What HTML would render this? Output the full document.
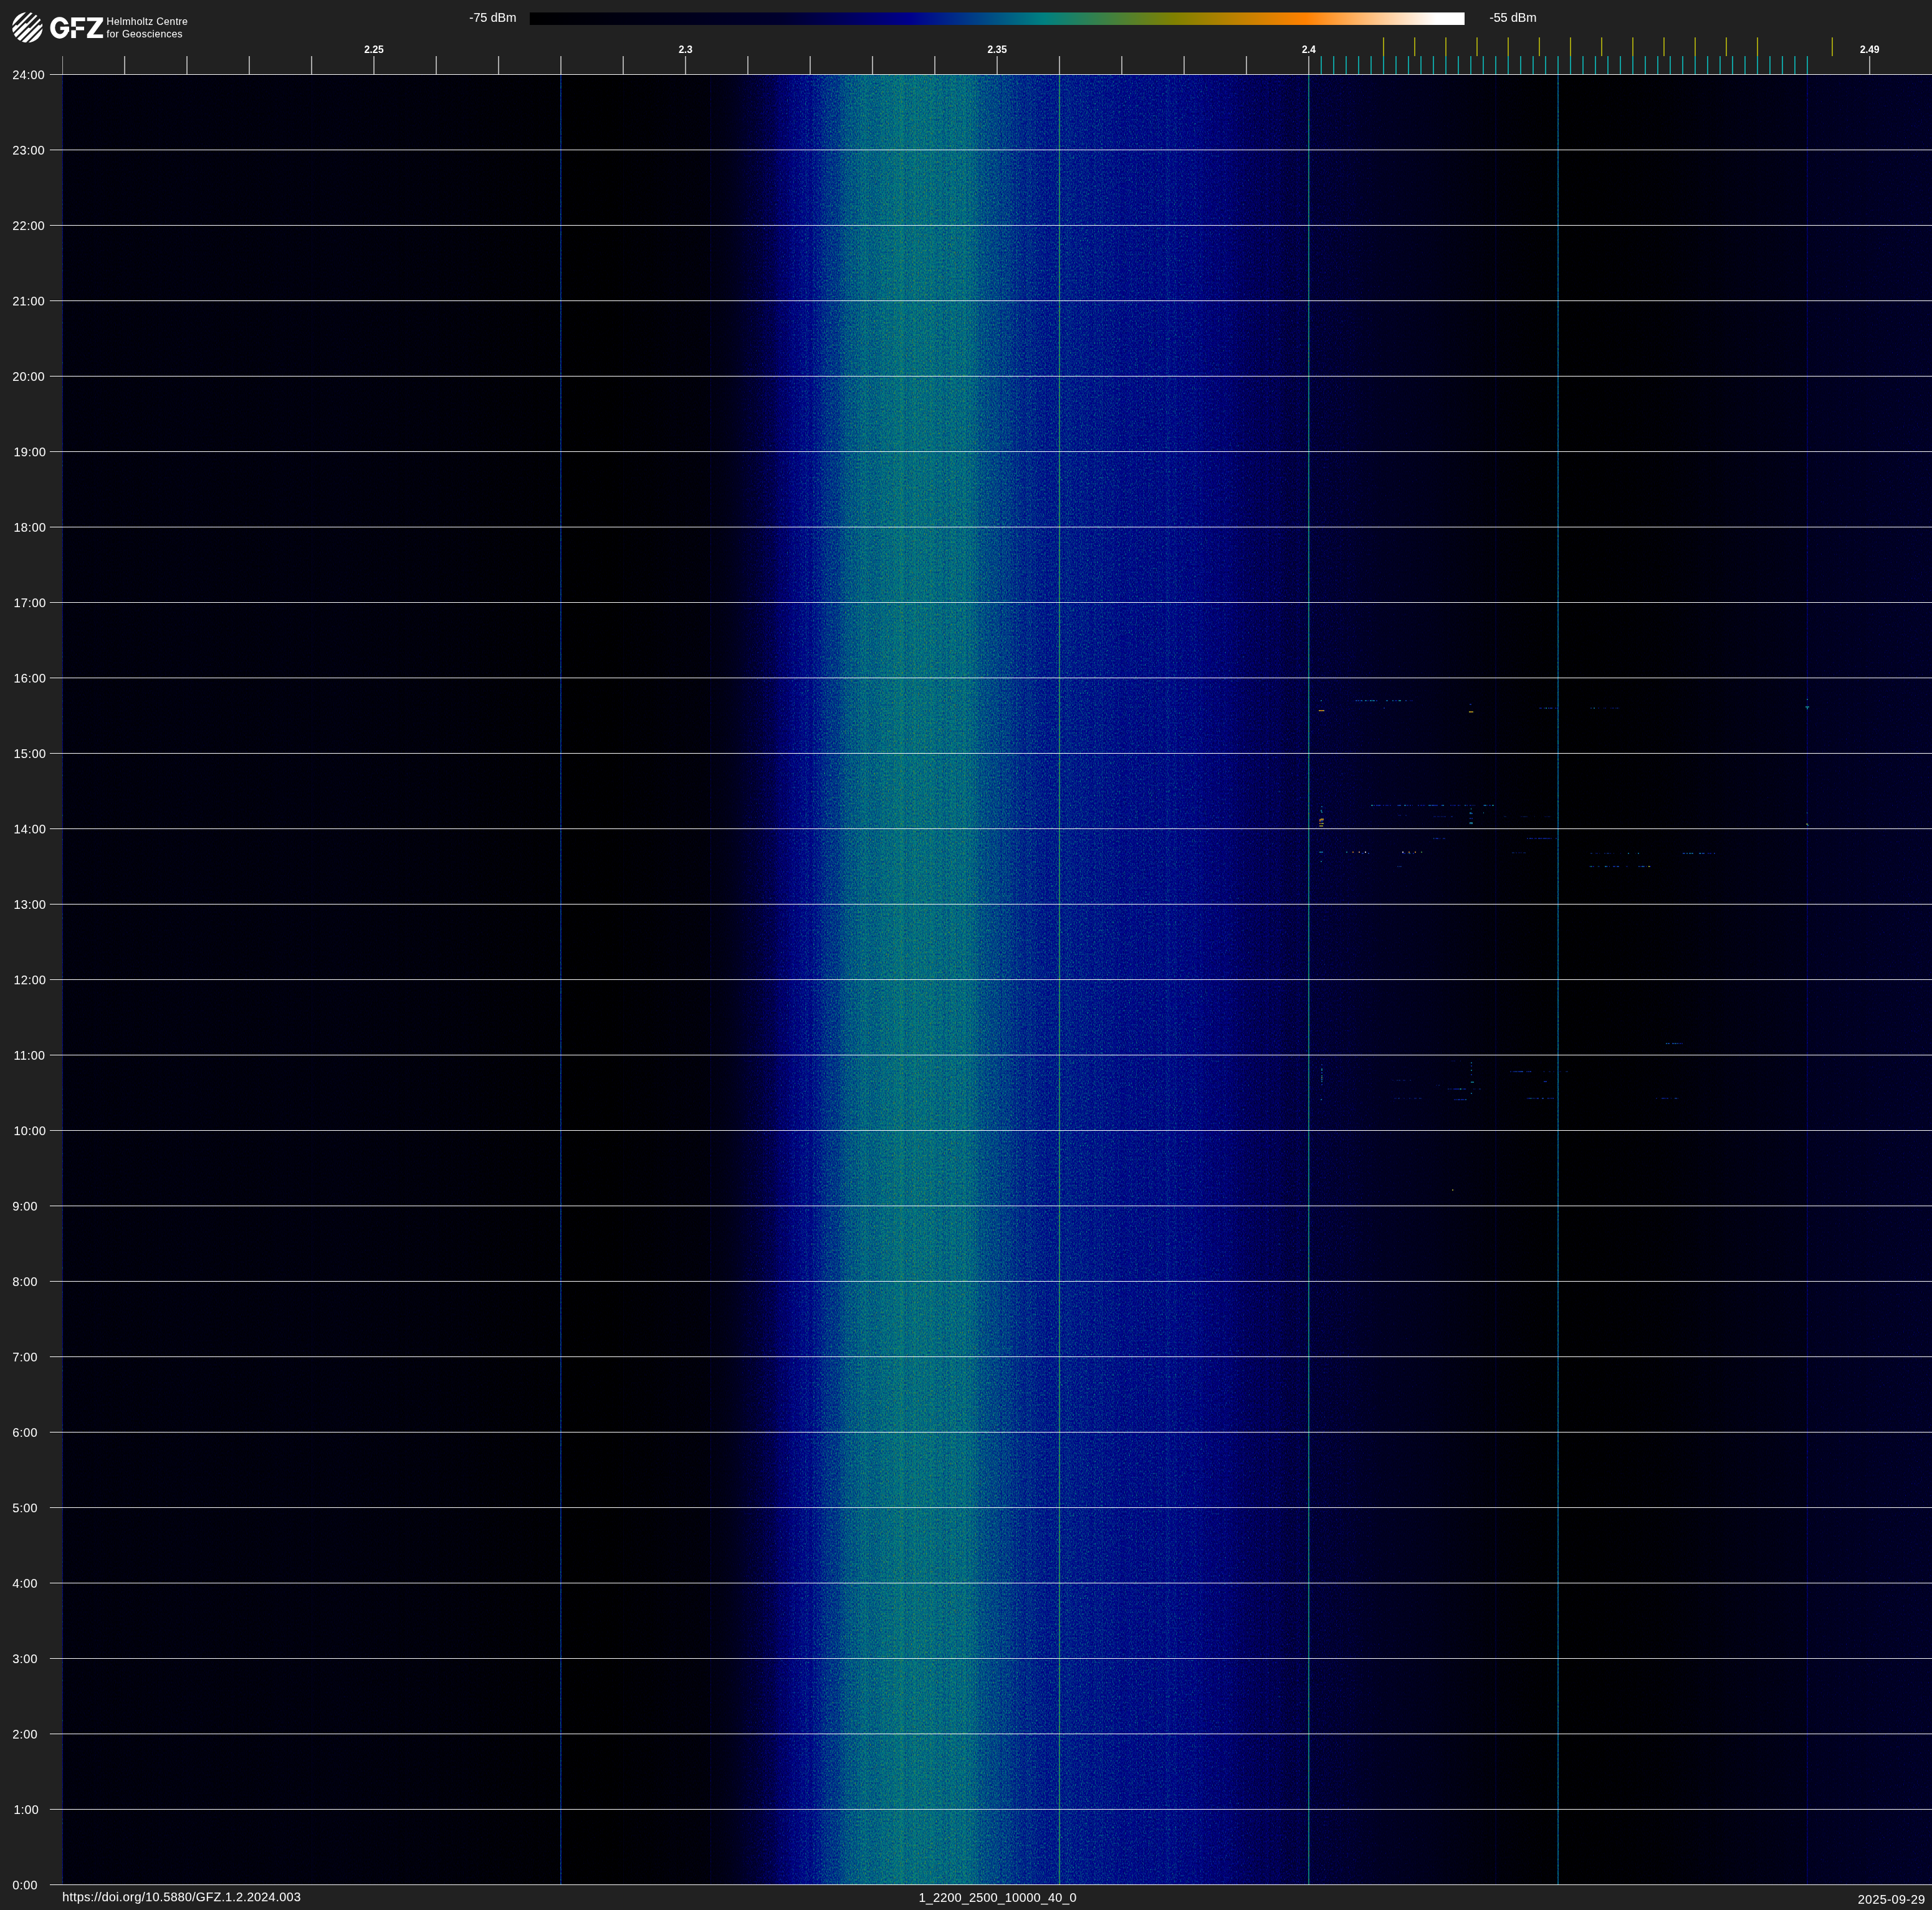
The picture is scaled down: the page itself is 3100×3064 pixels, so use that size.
<!DOCTYPE html>
<html lang="en"><head><meta charset="utf-8"><title>GFZ spectrogram 2025-09-29</title>
<style>
html,body{margin:0;padding:0;background:#212121;}
body{width:3100px;height:3064px;position:relative;overflow:hidden;font-family:"Liberation Sans",sans-serif;color:#fff;}
.abs,.tl,.fl,.bt{will-change:transform;}
.abs{position:absolute;white-space:nowrap;line-height:1;}
.tl{position:absolute;left:20px;font-size:19.8px;letter-spacing:0.5px;line-height:20px;height:20px;white-space:nowrap;color:#fff;}
.fl{position:absolute;top:72px;font-size:16px;font-weight:bold;line-height:16px;white-space:nowrap;transform:translateX(-50%);color:#fff;}
.bt{position:absolute;font-size:20px;letter-spacing:0.4px;line-height:20px;white-space:nowrap;color:#fff;}
#bar{position:absolute;left:850px;top:20px;width:1500px;height:20px;background:linear-gradient(to right,#000 0%,#00002d 27%,#00008b 40.7%,#008080 55%,#808000 69%,#ff8000 83%,#fff 97%,#fff 100%);}
svg{position:absolute;display:block;}
</style></head>
<body>
<svg id="plot" style="left:100px;top:120px" width="3000" height="2903" viewBox="0 0 3000 2903">
<defs>
<linearGradient id="gc" x1="0" y1="0" x2="1" y2="0"><stop offset="0.00000" stop-color="#00000e"/><stop offset="0.00333" stop-color="#00000e"/><stop offset="0.00667" stop-color="#00000e"/><stop offset="0.01000" stop-color="#00000e"/><stop offset="0.01333" stop-color="#00000e"/><stop offset="0.01667" stop-color="#00000e"/><stop offset="0.02000" stop-color="#00000e"/><stop offset="0.02333" stop-color="#00000e"/><stop offset="0.02667" stop-color="#00000e"/><stop offset="0.03000" stop-color="#00000e"/><stop offset="0.03333" stop-color="#00000e"/><stop offset="0.03667" stop-color="#00000e"/><stop offset="0.04000" stop-color="#00000e"/><stop offset="0.04333" stop-color="#00000e"/><stop offset="0.04667" stop-color="#00000e"/><stop offset="0.05000" stop-color="#00000e"/><stop offset="0.05333" stop-color="#00000e"/><stop offset="0.05667" stop-color="#00000e"/><stop offset="0.06000" stop-color="#00000e"/><stop offset="0.06333" stop-color="#00000e"/><stop offset="0.06667" stop-color="#00000e"/><stop offset="0.07000" stop-color="#00000e"/><stop offset="0.07333" stop-color="#00000e"/><stop offset="0.07667" stop-color="#00000e"/><stop offset="0.08000" stop-color="#00000e"/><stop offset="0.08333" stop-color="#00000e"/><stop offset="0.08667" stop-color="#00000e"/><stop offset="0.09000" stop-color="#00000e"/><stop offset="0.09333" stop-color="#00000e"/><stop offset="0.09667" stop-color="#00000e"/><stop offset="0.10000" stop-color="#00000e"/><stop offset="0.10333" stop-color="#00000e"/><stop offset="0.10667" stop-color="#00000e"/><stop offset="0.11000" stop-color="#00000e"/><stop offset="0.11333" stop-color="#00000e"/><stop offset="0.11667" stop-color="#00000e"/><stop offset="0.12000" stop-color="#00000e"/><stop offset="0.12333" stop-color="#00000e"/><stop offset="0.12667" stop-color="#00000e"/><stop offset="0.13000" stop-color="#00000e"/><stop offset="0.13333" stop-color="#00000e"/><stop offset="0.13667" stop-color="#00000e"/><stop offset="0.14000" stop-color="#00000e"/><stop offset="0.14333" stop-color="#00000e"/><stop offset="0.14667" stop-color="#00000e"/><stop offset="0.15000" stop-color="#00000e"/><stop offset="0.15333" stop-color="#00000e"/><stop offset="0.15667" stop-color="#00000e"/><stop offset="0.16000" stop-color="#00000e"/><stop offset="0.16333" stop-color="#00000e"/><stop offset="0.16667" stop-color="#00000e"/><stop offset="0.17000" stop-color="#00000e"/><stop offset="0.17333" stop-color="#00000e"/><stop offset="0.17667" stop-color="#00000e"/><stop offset="0.18000" stop-color="#00000e"/><stop offset="0.18333" stop-color="#00000d"/><stop offset="0.18667" stop-color="#00000d"/><stop offset="0.19000" stop-color="#00000d"/><stop offset="0.19333" stop-color="#00000d"/><stop offset="0.19667" stop-color="#00000d"/><stop offset="0.20000" stop-color="#00000c"/><stop offset="0.20333" stop-color="#00000c"/><stop offset="0.20667" stop-color="#00000c"/><stop offset="0.21000" stop-color="#00000b"/><stop offset="0.21333" stop-color="#00000b"/><stop offset="0.21667" stop-color="#00000a"/><stop offset="0.22000" stop-color="#00000a"/><stop offset="0.22333" stop-color="#00000a"/><stop offset="0.22667" stop-color="#000009"/><stop offset="0.23000" stop-color="#000009"/><stop offset="0.23333" stop-color="#000008"/><stop offset="0.23667" stop-color="#000008"/><stop offset="0.24000" stop-color="#000008"/><stop offset="0.24333" stop-color="#000007"/><stop offset="0.24667" stop-color="#000007"/><stop offset="0.25000" stop-color="#000007"/><stop offset="0.25333" stop-color="#000006"/><stop offset="0.25667" stop-color="#000006"/><stop offset="0.26000" stop-color="#000006"/><stop offset="0.26333" stop-color="#000005"/><stop offset="0.26667" stop-color="#000001"/><stop offset="0.27000" stop-color="#000001"/><stop offset="0.27333" stop-color="#000001"/><stop offset="0.27667" stop-color="#000001"/><stop offset="0.28000" stop-color="#000001"/><stop offset="0.28333" stop-color="#000001"/><stop offset="0.28667" stop-color="#000001"/><stop offset="0.29000" stop-color="#000001"/><stop offset="0.29333" stop-color="#000001"/><stop offset="0.29667" stop-color="#000001"/><stop offset="0.30000" stop-color="#000005"/><stop offset="0.30333" stop-color="#000006"/><stop offset="0.30667" stop-color="#000006"/><stop offset="0.31000" stop-color="#000007"/><stop offset="0.31333" stop-color="#000008"/><stop offset="0.31667" stop-color="#000008"/><stop offset="0.32000" stop-color="#000009"/><stop offset="0.32333" stop-color="#00000a"/><stop offset="0.32667" stop-color="#00000a"/><stop offset="0.33000" stop-color="#00000b"/><stop offset="0.33333" stop-color="#00000c"/><stop offset="0.33667" stop-color="#00000c"/><stop offset="0.34000" stop-color="#00000d"/><stop offset="0.34333" stop-color="#00000e"/><stop offset="0.34667" stop-color="#000014"/><stop offset="0.35000" stop-color="#000016"/><stop offset="0.35333" stop-color="#000017"/><stop offset="0.35667" stop-color="#00001d"/><stop offset="0.36000" stop-color="#000022"/><stop offset="0.36333" stop-color="#000027"/><stop offset="0.36667" stop-color="#00002c"/><stop offset="0.37000" stop-color="#000034"/><stop offset="0.37333" stop-color="#000041"/><stop offset="0.37667" stop-color="#00004e"/><stop offset="0.38000" stop-color="#00005b"/><stop offset="0.38333" stop-color="#000068"/><stop offset="0.38667" stop-color="#000073"/><stop offset="0.39000" stop-color="#00007e"/><stop offset="0.39333" stop-color="#00008a"/><stop offset="0.39667" stop-color="#000a8a"/><stop offset="0.40000" stop-color="#00048b"/><stop offset="0.40333" stop-color="#001f88"/><stop offset="0.40667" stop-color="#002b87"/><stop offset="0.41000" stop-color="#003686"/><stop offset="0.41333" stop-color="#004285"/><stop offset="0.41667" stop-color="#004d84"/><stop offset="0.42000" stop-color="#005584"/><stop offset="0.42333" stop-color="#005d83"/><stop offset="0.42667" stop-color="#006682"/><stop offset="0.43000" stop-color="#006b82"/><stop offset="0.43333" stop-color="#006e82"/><stop offset="0.43667" stop-color="#007181"/><stop offset="0.44000" stop-color="#007481"/><stop offset="0.44333" stop-color="#007781"/><stop offset="0.44667" stop-color="#007981"/><stop offset="0.45000" stop-color="#007181"/><stop offset="0.45333" stop-color="#007781"/><stop offset="0.45667" stop-color="#007881"/><stop offset="0.46000" stop-color="#007881"/><stop offset="0.46333" stop-color="#007781"/><stop offset="0.46667" stop-color="#007681"/><stop offset="0.47000" stop-color="#007481"/><stop offset="0.47333" stop-color="#007381"/><stop offset="0.47667" stop-color="#007181"/><stop offset="0.48000" stop-color="#006f81"/><stop offset="0.48333" stop-color="#006c82"/><stop offset="0.48667" stop-color="#006582"/><stop offset="0.49000" stop-color="#005e83"/><stop offset="0.49333" stop-color="#005784"/><stop offset="0.49667" stop-color="#004f84"/><stop offset="0.50000" stop-color="#004885"/><stop offset="0.50333" stop-color="#004185"/><stop offset="0.50667" stop-color="#003a86"/><stop offset="0.51000" stop-color="#003686"/><stop offset="0.51333" stop-color="#003187"/><stop offset="0.51667" stop-color="#002d87"/><stop offset="0.52000" stop-color="#002988"/><stop offset="0.52333" stop-color="#002488"/><stop offset="0.52667" stop-color="#002088"/><stop offset="0.53000" stop-color="#001d89"/><stop offset="0.53333" stop-color="#001f88"/><stop offset="0.53667" stop-color="#001e88"/><stop offset="0.54000" stop-color="#001e88"/><stop offset="0.54333" stop-color="#001d88"/><stop offset="0.54667" stop-color="#001d89"/><stop offset="0.55000" stop-color="#001c89"/><stop offset="0.55333" stop-color="#001b89"/><stop offset="0.55667" stop-color="#001b89"/><stop offset="0.56000" stop-color="#001889"/><stop offset="0.56333" stop-color="#001389"/><stop offset="0.56667" stop-color="#000d8a"/><stop offset="0.57000" stop-color="#00098a"/><stop offset="0.57333" stop-color="#00098a"/><stop offset="0.57667" stop-color="#00098a"/><stop offset="0.58000" stop-color="#000a8a"/><stop offset="0.58333" stop-color="#000a8a"/><stop offset="0.58667" stop-color="#000a8a"/><stop offset="0.59000" stop-color="#000b8a"/><stop offset="0.59333" stop-color="#00078a"/><stop offset="0.59667" stop-color="#00048b"/><stop offset="0.60000" stop-color="#00018b"/><stop offset="0.60333" stop-color="#000089"/><stop offset="0.60667" stop-color="#000087"/><stop offset="0.61000" stop-color="#000084"/><stop offset="0.61333" stop-color="#000080"/><stop offset="0.61667" stop-color="#00007b"/><stop offset="0.62000" stop-color="#000076"/><stop offset="0.62333" stop-color="#000071"/><stop offset="0.62667" stop-color="#00006c"/><stop offset="0.63000" stop-color="#000067"/><stop offset="0.63333" stop-color="#000063"/><stop offset="0.63667" stop-color="#00005f"/><stop offset="0.64000" stop-color="#00005c"/><stop offset="0.64333" stop-color="#000058"/><stop offset="0.64667" stop-color="#000055"/><stop offset="0.65000" stop-color="#000051"/><stop offset="0.65333" stop-color="#00004e"/><stop offset="0.65667" stop-color="#00004b"/><stop offset="0.66000" stop-color="#000048"/><stop offset="0.66333" stop-color="#000045"/><stop offset="0.66667" stop-color="#000043"/><stop offset="0.67000" stop-color="#00003f"/><stop offset="0.67333" stop-color="#00003b"/><stop offset="0.67667" stop-color="#000038"/><stop offset="0.68000" stop-color="#000034"/><stop offset="0.68333" stop-color="#000030"/><stop offset="0.68667" stop-color="#00002c"/><stop offset="0.69000" stop-color="#00002b"/><stop offset="0.69333" stop-color="#000029"/><stop offset="0.69667" stop-color="#000028"/><stop offset="0.70000" stop-color="#000026"/><stop offset="0.70333" stop-color="#000025"/><stop offset="0.70667" stop-color="#000024"/><stop offset="0.71000" stop-color="#000023"/><stop offset="0.71333" stop-color="#000022"/><stop offset="0.71667" stop-color="#000020"/><stop offset="0.72000" stop-color="#00001f"/><stop offset="0.72333" stop-color="#00001e"/><stop offset="0.72667" stop-color="#00001d"/><stop offset="0.73000" stop-color="#00001c"/><stop offset="0.73333" stop-color="#00001b"/><stop offset="0.73667" stop-color="#000019"/><stop offset="0.74000" stop-color="#000018"/><stop offset="0.74333" stop-color="#000016"/><stop offset="0.74667" stop-color="#000015"/><stop offset="0.75000" stop-color="#000013"/><stop offset="0.75333" stop-color="#000012"/><stop offset="0.75667" stop-color="#000010"/><stop offset="0.76000" stop-color="#00000f"/><stop offset="0.76333" stop-color="#00000d"/><stop offset="0.76667" stop-color="#00000c"/><stop offset="0.77000" stop-color="#00000b"/><stop offset="0.77333" stop-color="#00000a"/><stop offset="0.77667" stop-color="#000009"/><stop offset="0.78000" stop-color="#000008"/><stop offset="0.78333" stop-color="#000007"/><stop offset="0.78667" stop-color="#000006"/><stop offset="0.79000" stop-color="#000006"/><stop offset="0.79333" stop-color="#000005"/><stop offset="0.79667" stop-color="#000005"/><stop offset="0.80000" stop-color="#000001"/><stop offset="0.80333" stop-color="#000001"/><stop offset="0.80667" stop-color="#000001"/><stop offset="0.81000" stop-color="#000002"/><stop offset="0.81333" stop-color="#000002"/><stop offset="0.81667" stop-color="#000002"/><stop offset="0.82000" stop-color="#000002"/><stop offset="0.82333" stop-color="#000003"/><stop offset="0.82667" stop-color="#000003"/><stop offset="0.83000" stop-color="#000003"/><stop offset="0.83333" stop-color="#000003"/><stop offset="0.83667" stop-color="#000004"/><stop offset="0.84000" stop-color="#000005"/><stop offset="0.84333" stop-color="#000006"/><stop offset="0.84667" stop-color="#000006"/><stop offset="0.85000" stop-color="#000007"/><stop offset="0.85333" stop-color="#000008"/><stop offset="0.85667" stop-color="#000009"/><stop offset="0.86000" stop-color="#000009"/><stop offset="0.86333" stop-color="#00000a"/><stop offset="0.86667" stop-color="#00000b"/><stop offset="0.87000" stop-color="#00000c"/><stop offset="0.87333" stop-color="#00000d"/><stop offset="0.87667" stop-color="#00000e"/><stop offset="0.88000" stop-color="#00000e"/><stop offset="0.88333" stop-color="#00000f"/><stop offset="0.88667" stop-color="#000010"/><stop offset="0.89000" stop-color="#000011"/><stop offset="0.89333" stop-color="#000012"/><stop offset="0.89667" stop-color="#000013"/><stop offset="0.90000" stop-color="#000014"/><stop offset="0.90333" stop-color="#000014"/><stop offset="0.90667" stop-color="#000015"/><stop offset="0.91000" stop-color="#000016"/><stop offset="0.91333" stop-color="#000016"/><stop offset="0.91667" stop-color="#000016"/><stop offset="0.92000" stop-color="#000017"/><stop offset="0.92333" stop-color="#000017"/><stop offset="0.92667" stop-color="#000018"/><stop offset="0.93000" stop-color="#000018"/><stop offset="0.93333" stop-color="#000020"/><stop offset="0.93667" stop-color="#000021"/><stop offset="0.94000" stop-color="#000021"/><stop offset="0.94333" stop-color="#000022"/><stop offset="0.94667" stop-color="#000022"/><stop offset="0.95000" stop-color="#000023"/><stop offset="0.95333" stop-color="#000023"/><stop offset="0.95667" stop-color="#000023"/><stop offset="0.96000" stop-color="#000024"/><stop offset="0.96333" stop-color="#000024"/><stop offset="0.96667" stop-color="#000025"/><stop offset="0.97000" stop-color="#000025"/><stop offset="0.97333" stop-color="#000025"/><stop offset="0.97667" stop-color="#000025"/><stop offset="0.98000" stop-color="#000026"/><stop offset="0.98333" stop-color="#000026"/><stop offset="0.98667" stop-color="#000026"/><stop offset="0.99000" stop-color="#000026"/><stop offset="0.99333" stop-color="#000027"/><stop offset="0.99667" stop-color="#000027"/><stop offset="1.00000" stop-color="#000027"/></linearGradient>
<linearGradient id="gv" x1="0" y1="0" x2="1" y2="0"><stop offset="0.00000" stop-color="#150000"/><stop offset="0.00067" stop-color="#150000"/><stop offset="0.00067" stop-color="#160000"/><stop offset="0.00133" stop-color="#160000"/><stop offset="0.00133" stop-color="#160000"/><stop offset="0.00200" stop-color="#160000"/><stop offset="0.00200" stop-color="#130000"/><stop offset="0.00267" stop-color="#130000"/><stop offset="0.00267" stop-color="#150000"/><stop offset="0.00333" stop-color="#150000"/><stop offset="0.00333" stop-color="#160000"/><stop offset="0.00400" stop-color="#160000"/><stop offset="0.00400" stop-color="#140000"/><stop offset="0.00467" stop-color="#140000"/><stop offset="0.00467" stop-color="#150000"/><stop offset="0.00533" stop-color="#150000"/><stop offset="0.00533" stop-color="#170000"/><stop offset="0.00600" stop-color="#170000"/><stop offset="0.00600" stop-color="#170000"/><stop offset="0.00667" stop-color="#170000"/><stop offset="0.00667" stop-color="#150000"/><stop offset="0.00733" stop-color="#150000"/><stop offset="0.00733" stop-color="#150000"/><stop offset="0.00800" stop-color="#150000"/><stop offset="0.00800" stop-color="#140000"/><stop offset="0.00867" stop-color="#140000"/><stop offset="0.00867" stop-color="#150000"/><stop offset="0.00933" stop-color="#150000"/><stop offset="0.00933" stop-color="#160000"/><stop offset="0.01000" stop-color="#160000"/><stop offset="0.01000" stop-color="#150000"/><stop offset="0.01067" stop-color="#150000"/><stop offset="0.01067" stop-color="#170000"/><stop offset="0.01133" stop-color="#170000"/><stop offset="0.01133" stop-color="#150000"/><stop offset="0.01200" stop-color="#150000"/><stop offset="0.01200" stop-color="#140000"/><stop offset="0.01267" stop-color="#140000"/><stop offset="0.01267" stop-color="#150000"/><stop offset="0.01333" stop-color="#150000"/><stop offset="0.01333" stop-color="#150000"/><stop offset="0.01400" stop-color="#150000"/><stop offset="0.01400" stop-color="#140000"/><stop offset="0.01467" stop-color="#140000"/><stop offset="0.01467" stop-color="#150000"/><stop offset="0.01533" stop-color="#150000"/><stop offset="0.01533" stop-color="#150000"/><stop offset="0.01600" stop-color="#150000"/><stop offset="0.01600" stop-color="#120000"/><stop offset="0.01667" stop-color="#120000"/><stop offset="0.01667" stop-color="#190000"/><stop offset="0.01733" stop-color="#190000"/><stop offset="0.01733" stop-color="#190000"/><stop offset="0.01800" stop-color="#190000"/><stop offset="0.01800" stop-color="#150000"/><stop offset="0.01867" stop-color="#150000"/><stop offset="0.01867" stop-color="#190000"/><stop offset="0.01933" stop-color="#190000"/><stop offset="0.01933" stop-color="#160000"/><stop offset="0.02000" stop-color="#160000"/><stop offset="0.02000" stop-color="#180000"/><stop offset="0.02067" stop-color="#180000"/><stop offset="0.02067" stop-color="#130000"/><stop offset="0.02133" stop-color="#130000"/><stop offset="0.02133" stop-color="#160000"/><stop offset="0.02200" stop-color="#160000"/><stop offset="0.02200" stop-color="#160000"/><stop offset="0.02267" stop-color="#160000"/><stop offset="0.02267" stop-color="#120000"/><stop offset="0.02333" stop-color="#120000"/><stop offset="0.02333" stop-color="#170000"/><stop offset="0.02400" stop-color="#170000"/><stop offset="0.02400" stop-color="#120000"/><stop offset="0.02467" stop-color="#120000"/><stop offset="0.02467" stop-color="#130000"/><stop offset="0.02533" stop-color="#130000"/><stop offset="0.02533" stop-color="#150000"/><stop offset="0.02600" stop-color="#150000"/><stop offset="0.02600" stop-color="#170000"/><stop offset="0.02667" stop-color="#170000"/><stop offset="0.02667" stop-color="#140000"/><stop offset="0.02733" stop-color="#140000"/><stop offset="0.02733" stop-color="#120000"/><stop offset="0.02800" stop-color="#120000"/><stop offset="0.02800" stop-color="#150000"/><stop offset="0.02867" stop-color="#150000"/><stop offset="0.02867" stop-color="#120000"/><stop offset="0.02933" stop-color="#120000"/><stop offset="0.02933" stop-color="#150000"/><stop offset="0.03000" stop-color="#150000"/><stop offset="0.03000" stop-color="#140000"/><stop offset="0.03067" stop-color="#140000"/><stop offset="0.03067" stop-color="#170000"/><stop offset="0.03133" stop-color="#170000"/><stop offset="0.03133" stop-color="#130000"/><stop offset="0.03200" stop-color="#130000"/><stop offset="0.03200" stop-color="#170000"/><stop offset="0.03267" stop-color="#170000"/><stop offset="0.03267" stop-color="#180000"/><stop offset="0.03333" stop-color="#180000"/><stop offset="0.03333" stop-color="#120000"/><stop offset="0.03400" stop-color="#120000"/><stop offset="0.03400" stop-color="#150000"/><stop offset="0.03467" stop-color="#150000"/><stop offset="0.03467" stop-color="#160000"/><stop offset="0.03533" stop-color="#160000"/><stop offset="0.03533" stop-color="#150000"/><stop offset="0.03600" stop-color="#150000"/><stop offset="0.03600" stop-color="#190000"/><stop offset="0.03667" stop-color="#190000"/><stop offset="0.03667" stop-color="#150000"/><stop offset="0.03733" stop-color="#150000"/><stop offset="0.03733" stop-color="#160000"/><stop offset="0.03800" stop-color="#160000"/><stop offset="0.03800" stop-color="#160000"/><stop offset="0.03867" stop-color="#160000"/><stop offset="0.03867" stop-color="#140000"/><stop offset="0.03933" stop-color="#140000"/><stop offset="0.03933" stop-color="#150000"/><stop offset="0.04000" stop-color="#150000"/><stop offset="0.04000" stop-color="#140000"/><stop offset="0.04067" stop-color="#140000"/><stop offset="0.04067" stop-color="#150000"/><stop offset="0.04133" stop-color="#150000"/><stop offset="0.04133" stop-color="#140000"/><stop offset="0.04200" stop-color="#140000"/><stop offset="0.04200" stop-color="#130000"/><stop offset="0.04267" stop-color="#130000"/><stop offset="0.04267" stop-color="#190000"/><stop offset="0.04333" stop-color="#190000"/><stop offset="0.04333" stop-color="#160000"/><stop offset="0.04400" stop-color="#160000"/><stop offset="0.04400" stop-color="#170000"/><stop offset="0.04467" stop-color="#170000"/><stop offset="0.04467" stop-color="#130000"/><stop offset="0.04533" stop-color="#130000"/><stop offset="0.04533" stop-color="#140000"/><stop offset="0.04600" stop-color="#140000"/><stop offset="0.04600" stop-color="#180000"/><stop offset="0.04667" stop-color="#180000"/><stop offset="0.04667" stop-color="#160000"/><stop offset="0.04733" stop-color="#160000"/><stop offset="0.04733" stop-color="#130000"/><stop offset="0.04800" stop-color="#130000"/><stop offset="0.04800" stop-color="#180000"/><stop offset="0.04867" stop-color="#180000"/><stop offset="0.04867" stop-color="#160000"/><stop offset="0.04933" stop-color="#160000"/><stop offset="0.04933" stop-color="#140000"/><stop offset="0.05000" stop-color="#140000"/><stop offset="0.05000" stop-color="#180000"/><stop offset="0.05067" stop-color="#180000"/><stop offset="0.05067" stop-color="#120000"/><stop offset="0.05133" stop-color="#120000"/><stop offset="0.05133" stop-color="#190000"/><stop offset="0.05200" stop-color="#190000"/><stop offset="0.05200" stop-color="#180000"/><stop offset="0.05267" stop-color="#180000"/><stop offset="0.05267" stop-color="#190000"/><stop offset="0.05333" stop-color="#190000"/><stop offset="0.05333" stop-color="#150000"/><stop offset="0.05400" stop-color="#150000"/><stop offset="0.05400" stop-color="#130000"/><stop offset="0.05467" stop-color="#130000"/><stop offset="0.05467" stop-color="#170000"/><stop offset="0.05533" stop-color="#170000"/><stop offset="0.05533" stop-color="#170000"/><stop offset="0.05600" stop-color="#170000"/><stop offset="0.05600" stop-color="#170000"/><stop offset="0.05667" stop-color="#170000"/><stop offset="0.05667" stop-color="#160000"/><stop offset="0.05733" stop-color="#160000"/><stop offset="0.05733" stop-color="#170000"/><stop offset="0.05800" stop-color="#170000"/><stop offset="0.05800" stop-color="#180000"/><stop offset="0.05867" stop-color="#180000"/><stop offset="0.05867" stop-color="#160000"/><stop offset="0.05933" stop-color="#160000"/><stop offset="0.05933" stop-color="#170000"/><stop offset="0.06000" stop-color="#170000"/><stop offset="0.06000" stop-color="#180000"/><stop offset="0.06067" stop-color="#180000"/><stop offset="0.06067" stop-color="#170000"/><stop offset="0.06133" stop-color="#170000"/><stop offset="0.06133" stop-color="#160000"/><stop offset="0.06200" stop-color="#160000"/><stop offset="0.06200" stop-color="#180000"/><stop offset="0.06267" stop-color="#180000"/><stop offset="0.06267" stop-color="#140000"/><stop offset="0.06333" stop-color="#140000"/><stop offset="0.06333" stop-color="#150000"/><stop offset="0.06400" stop-color="#150000"/><stop offset="0.06400" stop-color="#190000"/><stop offset="0.06467" stop-color="#190000"/><stop offset="0.06467" stop-color="#180000"/><stop offset="0.06533" stop-color="#180000"/><stop offset="0.06533" stop-color="#140000"/><stop offset="0.06600" stop-color="#140000"/><stop offset="0.06600" stop-color="#190000"/><stop offset="0.06667" stop-color="#190000"/><stop offset="0.06667" stop-color="#180000"/><stop offset="0.06733" stop-color="#180000"/><stop offset="0.06733" stop-color="#160000"/><stop offset="0.06800" stop-color="#160000"/><stop offset="0.06800" stop-color="#160000"/><stop offset="0.06867" stop-color="#160000"/><stop offset="0.06867" stop-color="#190000"/><stop offset="0.06933" stop-color="#190000"/><stop offset="0.06933" stop-color="#180000"/><stop offset="0.07000" stop-color="#180000"/><stop offset="0.07000" stop-color="#160000"/><stop offset="0.07067" stop-color="#160000"/><stop offset="0.07067" stop-color="#150000"/><stop offset="0.07133" stop-color="#150000"/><stop offset="0.07133" stop-color="#180000"/><stop offset="0.07200" stop-color="#180000"/><stop offset="0.07200" stop-color="#160000"/><stop offset="0.07267" stop-color="#160000"/><stop offset="0.07267" stop-color="#150000"/><stop offset="0.07333" stop-color="#150000"/><stop offset="0.07333" stop-color="#170000"/><stop offset="0.07400" stop-color="#170000"/><stop offset="0.07400" stop-color="#190000"/><stop offset="0.07467" stop-color="#190000"/><stop offset="0.07467" stop-color="#170000"/><stop offset="0.07533" stop-color="#170000"/><stop offset="0.07533" stop-color="#150000"/><stop offset="0.07600" stop-color="#150000"/><stop offset="0.07600" stop-color="#190000"/><stop offset="0.07667" stop-color="#190000"/><stop offset="0.07667" stop-color="#170000"/><stop offset="0.07733" stop-color="#170000"/><stop offset="0.07733" stop-color="#170000"/><stop offset="0.07800" stop-color="#170000"/><stop offset="0.07800" stop-color="#180000"/><stop offset="0.07867" stop-color="#180000"/><stop offset="0.07867" stop-color="#160000"/><stop offset="0.07933" stop-color="#160000"/><stop offset="0.07933" stop-color="#170000"/><stop offset="0.08000" stop-color="#170000"/><stop offset="0.08000" stop-color="#170000"/><stop offset="0.08067" stop-color="#170000"/><stop offset="0.08067" stop-color="#140000"/><stop offset="0.08133" stop-color="#140000"/><stop offset="0.08133" stop-color="#140000"/><stop offset="0.08200" stop-color="#140000"/><stop offset="0.08200" stop-color="#180000"/><stop offset="0.08267" stop-color="#180000"/><stop offset="0.08267" stop-color="#140000"/><stop offset="0.08333" stop-color="#140000"/><stop offset="0.08333" stop-color="#120000"/><stop offset="0.08400" stop-color="#120000"/><stop offset="0.08400" stop-color="#150000"/><stop offset="0.08467" stop-color="#150000"/><stop offset="0.08467" stop-color="#130000"/><stop offset="0.08533" stop-color="#130000"/><stop offset="0.08533" stop-color="#130000"/><stop offset="0.08600" stop-color="#130000"/><stop offset="0.08600" stop-color="#160000"/><stop offset="0.08667" stop-color="#160000"/><stop offset="0.08667" stop-color="#130000"/><stop offset="0.08733" stop-color="#130000"/><stop offset="0.08733" stop-color="#150000"/><stop offset="0.08800" stop-color="#150000"/><stop offset="0.08800" stop-color="#150000"/><stop offset="0.08867" stop-color="#150000"/><stop offset="0.08867" stop-color="#150000"/><stop offset="0.08933" stop-color="#150000"/><stop offset="0.08933" stop-color="#130000"/><stop offset="0.09000" stop-color="#130000"/><stop offset="0.09000" stop-color="#180000"/><stop offset="0.09067" stop-color="#180000"/><stop offset="0.09067" stop-color="#190000"/><stop offset="0.09133" stop-color="#190000"/><stop offset="0.09133" stop-color="#170000"/><stop offset="0.09200" stop-color="#170000"/><stop offset="0.09200" stop-color="#150000"/><stop offset="0.09267" stop-color="#150000"/><stop offset="0.09267" stop-color="#140000"/><stop offset="0.09333" stop-color="#140000"/><stop offset="0.09333" stop-color="#140000"/><stop offset="0.09400" stop-color="#140000"/><stop offset="0.09400" stop-color="#170000"/><stop offset="0.09467" stop-color="#170000"/><stop offset="0.09467" stop-color="#160000"/><stop offset="0.09533" stop-color="#160000"/><stop offset="0.09533" stop-color="#140000"/><stop offset="0.09600" stop-color="#140000"/><stop offset="0.09600" stop-color="#160000"/><stop offset="0.09667" stop-color="#160000"/><stop offset="0.09667" stop-color="#160000"/><stop offset="0.09733" stop-color="#160000"/><stop offset="0.09733" stop-color="#130000"/><stop offset="0.09800" stop-color="#130000"/><stop offset="0.09800" stop-color="#190000"/><stop offset="0.09867" stop-color="#190000"/><stop offset="0.09867" stop-color="#130000"/><stop offset="0.09933" stop-color="#130000"/><stop offset="0.09933" stop-color="#120000"/><stop offset="0.10000" stop-color="#120000"/><stop offset="0.10000" stop-color="#160000"/><stop offset="0.10067" stop-color="#160000"/><stop offset="0.10067" stop-color="#150000"/><stop offset="0.10133" stop-color="#150000"/><stop offset="0.10133" stop-color="#150000"/><stop offset="0.10200" stop-color="#150000"/><stop offset="0.10200" stop-color="#150000"/><stop offset="0.10267" stop-color="#150000"/><stop offset="0.10267" stop-color="#150000"/><stop offset="0.10333" stop-color="#150000"/><stop offset="0.10333" stop-color="#170000"/><stop offset="0.10400" stop-color="#170000"/><stop offset="0.10400" stop-color="#140000"/><stop offset="0.10467" stop-color="#140000"/><stop offset="0.10467" stop-color="#190000"/><stop offset="0.10533" stop-color="#190000"/><stop offset="0.10533" stop-color="#150000"/><stop offset="0.10600" stop-color="#150000"/><stop offset="0.10600" stop-color="#120000"/><stop offset="0.10667" stop-color="#120000"/><stop offset="0.10667" stop-color="#160000"/><stop offset="0.10733" stop-color="#160000"/><stop offset="0.10733" stop-color="#150000"/><stop offset="0.10800" stop-color="#150000"/><stop offset="0.10800" stop-color="#140000"/><stop offset="0.10867" stop-color="#140000"/><stop offset="0.10867" stop-color="#140000"/><stop offset="0.10933" stop-color="#140000"/><stop offset="0.10933" stop-color="#150000"/><stop offset="0.11000" stop-color="#150000"/><stop offset="0.11000" stop-color="#150000"/><stop offset="0.11067" stop-color="#150000"/><stop offset="0.11067" stop-color="#150000"/><stop offset="0.11133" stop-color="#150000"/><stop offset="0.11133" stop-color="#140000"/><stop offset="0.11200" stop-color="#140000"/><stop offset="0.11200" stop-color="#160000"/><stop offset="0.11267" stop-color="#160000"/><stop offset="0.11267" stop-color="#160000"/><stop offset="0.11333" stop-color="#160000"/><stop offset="0.11333" stop-color="#180000"/><stop offset="0.11400" stop-color="#180000"/><stop offset="0.11400" stop-color="#180000"/><stop offset="0.11467" stop-color="#180000"/><stop offset="0.11467" stop-color="#170000"/><stop offset="0.11533" stop-color="#170000"/><stop offset="0.11533" stop-color="#150000"/><stop offset="0.11600" stop-color="#150000"/><stop offset="0.11600" stop-color="#170000"/><stop offset="0.11667" stop-color="#170000"/><stop offset="0.11667" stop-color="#180000"/><stop offset="0.11733" stop-color="#180000"/><stop offset="0.11733" stop-color="#180000"/><stop offset="0.11800" stop-color="#180000"/><stop offset="0.11800" stop-color="#170000"/><stop offset="0.11867" stop-color="#170000"/><stop offset="0.11867" stop-color="#170000"/><stop offset="0.11933" stop-color="#170000"/><stop offset="0.11933" stop-color="#190000"/><stop offset="0.12000" stop-color="#190000"/><stop offset="0.12000" stop-color="#120000"/><stop offset="0.12067" stop-color="#120000"/><stop offset="0.12067" stop-color="#190000"/><stop offset="0.12133" stop-color="#190000"/><stop offset="0.12133" stop-color="#150000"/><stop offset="0.12200" stop-color="#150000"/><stop offset="0.12200" stop-color="#190000"/><stop offset="0.12267" stop-color="#190000"/><stop offset="0.12267" stop-color="#180000"/><stop offset="0.12333" stop-color="#180000"/><stop offset="0.12333" stop-color="#180000"/><stop offset="0.12400" stop-color="#180000"/><stop offset="0.12400" stop-color="#140000"/><stop offset="0.12467" stop-color="#140000"/><stop offset="0.12467" stop-color="#160000"/><stop offset="0.12533" stop-color="#160000"/><stop offset="0.12533" stop-color="#150000"/><stop offset="0.12600" stop-color="#150000"/><stop offset="0.12600" stop-color="#180000"/><stop offset="0.12667" stop-color="#180000"/><stop offset="0.12667" stop-color="#170000"/><stop offset="0.12733" stop-color="#170000"/><stop offset="0.12733" stop-color="#160000"/><stop offset="0.12800" stop-color="#160000"/><stop offset="0.12800" stop-color="#140000"/><stop offset="0.12867" stop-color="#140000"/><stop offset="0.12867" stop-color="#160000"/><stop offset="0.12933" stop-color="#160000"/><stop offset="0.12933" stop-color="#160000"/><stop offset="0.13000" stop-color="#160000"/><stop offset="0.13000" stop-color="#150000"/><stop offset="0.13067" stop-color="#150000"/><stop offset="0.13067" stop-color="#160000"/><stop offset="0.13133" stop-color="#160000"/><stop offset="0.13133" stop-color="#170000"/><stop offset="0.13200" stop-color="#170000"/><stop offset="0.13200" stop-color="#140000"/><stop offset="0.13267" stop-color="#140000"/><stop offset="0.13267" stop-color="#130000"/><stop offset="0.13333" stop-color="#130000"/><stop offset="0.13333" stop-color="#140000"/><stop offset="0.13400" stop-color="#140000"/><stop offset="0.13400" stop-color="#190000"/><stop offset="0.13467" stop-color="#190000"/><stop offset="0.13467" stop-color="#160000"/><stop offset="0.13533" stop-color="#160000"/><stop offset="0.13533" stop-color="#160000"/><stop offset="0.13600" stop-color="#160000"/><stop offset="0.13600" stop-color="#150000"/><stop offset="0.13667" stop-color="#150000"/><stop offset="0.13667" stop-color="#150000"/><stop offset="0.13733" stop-color="#150000"/><stop offset="0.13733" stop-color="#130000"/><stop offset="0.13800" stop-color="#130000"/><stop offset="0.13800" stop-color="#180000"/><stop offset="0.13867" stop-color="#180000"/><stop offset="0.13867" stop-color="#170000"/><stop offset="0.13933" stop-color="#170000"/><stop offset="0.13933" stop-color="#170000"/><stop offset="0.14000" stop-color="#170000"/><stop offset="0.14000" stop-color="#160000"/><stop offset="0.14067" stop-color="#160000"/><stop offset="0.14067" stop-color="#160000"/><stop offset="0.14133" stop-color="#160000"/><stop offset="0.14133" stop-color="#170000"/><stop offset="0.14200" stop-color="#170000"/><stop offset="0.14200" stop-color="#160000"/><stop offset="0.14267" stop-color="#160000"/><stop offset="0.14267" stop-color="#180000"/><stop offset="0.14333" stop-color="#180000"/><stop offset="0.14333" stop-color="#190000"/><stop offset="0.14400" stop-color="#190000"/><stop offset="0.14400" stop-color="#160000"/><stop offset="0.14467" stop-color="#160000"/><stop offset="0.14467" stop-color="#180000"/><stop offset="0.14533" stop-color="#180000"/><stop offset="0.14533" stop-color="#190000"/><stop offset="0.14600" stop-color="#190000"/><stop offset="0.14600" stop-color="#180000"/><stop offset="0.14667" stop-color="#180000"/><stop offset="0.14667" stop-color="#180000"/><stop offset="0.14733" stop-color="#180000"/><stop offset="0.14733" stop-color="#180000"/><stop offset="0.14800" stop-color="#180000"/><stop offset="0.14800" stop-color="#180000"/><stop offset="0.14867" stop-color="#180000"/><stop offset="0.14867" stop-color="#190000"/><stop offset="0.14933" stop-color="#190000"/><stop offset="0.14933" stop-color="#170000"/><stop offset="0.15000" stop-color="#170000"/><stop offset="0.15000" stop-color="#170000"/><stop offset="0.15067" stop-color="#170000"/><stop offset="0.15067" stop-color="#160000"/><stop offset="0.15133" stop-color="#160000"/><stop offset="0.15133" stop-color="#190000"/><stop offset="0.15200" stop-color="#190000"/><stop offset="0.15200" stop-color="#190000"/><stop offset="0.15267" stop-color="#190000"/><stop offset="0.15267" stop-color="#150000"/><stop offset="0.15333" stop-color="#150000"/><stop offset="0.15333" stop-color="#180000"/><stop offset="0.15400" stop-color="#180000"/><stop offset="0.15400" stop-color="#140000"/><stop offset="0.15467" stop-color="#140000"/><stop offset="0.15467" stop-color="#180000"/><stop offset="0.15533" stop-color="#180000"/><stop offset="0.15533" stop-color="#130000"/><stop offset="0.15600" stop-color="#130000"/><stop offset="0.15600" stop-color="#160000"/><stop offset="0.15667" stop-color="#160000"/><stop offset="0.15667" stop-color="#170000"/><stop offset="0.15733" stop-color="#170000"/><stop offset="0.15733" stop-color="#150000"/><stop offset="0.15800" stop-color="#150000"/><stop offset="0.15800" stop-color="#140000"/><stop offset="0.15867" stop-color="#140000"/><stop offset="0.15867" stop-color="#160000"/><stop offset="0.15933" stop-color="#160000"/><stop offset="0.15933" stop-color="#180000"/><stop offset="0.16000" stop-color="#180000"/><stop offset="0.16000" stop-color="#150000"/><stop offset="0.16067" stop-color="#150000"/><stop offset="0.16067" stop-color="#120000"/><stop offset="0.16133" stop-color="#120000"/><stop offset="0.16133" stop-color="#160000"/><stop offset="0.16200" stop-color="#160000"/><stop offset="0.16200" stop-color="#150000"/><stop offset="0.16267" stop-color="#150000"/><stop offset="0.16267" stop-color="#140000"/><stop offset="0.16333" stop-color="#140000"/><stop offset="0.16333" stop-color="#190000"/><stop offset="0.16400" stop-color="#190000"/><stop offset="0.16400" stop-color="#140000"/><stop offset="0.16467" stop-color="#140000"/><stop offset="0.16467" stop-color="#160000"/><stop offset="0.16533" stop-color="#160000"/><stop offset="0.16533" stop-color="#130000"/><stop offset="0.16600" stop-color="#130000"/><stop offset="0.16600" stop-color="#120000"/><stop offset="0.16667" stop-color="#120000"/><stop offset="0.16667" stop-color="#120000"/><stop offset="0.16733" stop-color="#120000"/><stop offset="0.16733" stop-color="#140000"/><stop offset="0.16800" stop-color="#140000"/><stop offset="0.16800" stop-color="#170000"/><stop offset="0.16867" stop-color="#170000"/><stop offset="0.16867" stop-color="#120000"/><stop offset="0.16933" stop-color="#120000"/><stop offset="0.16933" stop-color="#150000"/><stop offset="0.17000" stop-color="#150000"/><stop offset="0.17000" stop-color="#150000"/><stop offset="0.17067" stop-color="#150000"/><stop offset="0.17067" stop-color="#180000"/><stop offset="0.17133" stop-color="#180000"/><stop offset="0.17133" stop-color="#130000"/><stop offset="0.17200" stop-color="#130000"/><stop offset="0.17200" stop-color="#140000"/><stop offset="0.17267" stop-color="#140000"/><stop offset="0.17267" stop-color="#170000"/><stop offset="0.17333" stop-color="#170000"/><stop offset="0.17333" stop-color="#140000"/><stop offset="0.17400" stop-color="#140000"/><stop offset="0.17400" stop-color="#130000"/><stop offset="0.17467" stop-color="#130000"/><stop offset="0.17467" stop-color="#160000"/><stop offset="0.17533" stop-color="#160000"/><stop offset="0.17533" stop-color="#160000"/><stop offset="0.17600" stop-color="#160000"/><stop offset="0.17600" stop-color="#130000"/><stop offset="0.17667" stop-color="#130000"/><stop offset="0.17667" stop-color="#160000"/><stop offset="0.17733" stop-color="#160000"/><stop offset="0.17733" stop-color="#150000"/><stop offset="0.17800" stop-color="#150000"/><stop offset="0.17800" stop-color="#170000"/><stop offset="0.17867" stop-color="#170000"/><stop offset="0.17867" stop-color="#160000"/><stop offset="0.17933" stop-color="#160000"/><stop offset="0.17933" stop-color="#140000"/><stop offset="0.18000" stop-color="#140000"/><stop offset="0.18000" stop-color="#110000"/><stop offset="0.18067" stop-color="#110000"/><stop offset="0.18067" stop-color="#120000"/><stop offset="0.18133" stop-color="#120000"/><stop offset="0.18133" stop-color="#140000"/><stop offset="0.18200" stop-color="#140000"/><stop offset="0.18200" stop-color="#110000"/><stop offset="0.18267" stop-color="#110000"/><stop offset="0.18267" stop-color="#110000"/><stop offset="0.18333" stop-color="#110000"/><stop offset="0.18333" stop-color="#130000"/><stop offset="0.18400" stop-color="#130000"/><stop offset="0.18400" stop-color="#180000"/><stop offset="0.18467" stop-color="#180000"/><stop offset="0.18467" stop-color="#140000"/><stop offset="0.18533" stop-color="#140000"/><stop offset="0.18533" stop-color="#150000"/><stop offset="0.18600" stop-color="#150000"/><stop offset="0.18600" stop-color="#110000"/><stop offset="0.18667" stop-color="#110000"/><stop offset="0.18667" stop-color="#130000"/><stop offset="0.18733" stop-color="#130000"/><stop offset="0.18733" stop-color="#140000"/><stop offset="0.18800" stop-color="#140000"/><stop offset="0.18800" stop-color="#140000"/><stop offset="0.18867" stop-color="#140000"/><stop offset="0.18867" stop-color="#130000"/><stop offset="0.18933" stop-color="#130000"/><stop offset="0.18933" stop-color="#130000"/><stop offset="0.19000" stop-color="#130000"/><stop offset="0.19000" stop-color="#160000"/><stop offset="0.19067" stop-color="#160000"/><stop offset="0.19067" stop-color="#120000"/><stop offset="0.19133" stop-color="#120000"/><stop offset="0.19133" stop-color="#140000"/><stop offset="0.19200" stop-color="#140000"/><stop offset="0.19200" stop-color="#130000"/><stop offset="0.19267" stop-color="#130000"/><stop offset="0.19267" stop-color="#110000"/><stop offset="0.19333" stop-color="#110000"/><stop offset="0.19333" stop-color="#130000"/><stop offset="0.19400" stop-color="#130000"/><stop offset="0.19400" stop-color="#130000"/><stop offset="0.19467" stop-color="#130000"/><stop offset="0.19467" stop-color="#100000"/><stop offset="0.19533" stop-color="#100000"/><stop offset="0.19533" stop-color="#120000"/><stop offset="0.19600" stop-color="#120000"/><stop offset="0.19600" stop-color="#140000"/><stop offset="0.19667" stop-color="#140000"/><stop offset="0.19667" stop-color="#120000"/><stop offset="0.19733" stop-color="#120000"/><stop offset="0.19733" stop-color="#150000"/><stop offset="0.19800" stop-color="#150000"/><stop offset="0.19800" stop-color="#140000"/><stop offset="0.19867" stop-color="#140000"/><stop offset="0.19867" stop-color="#120000"/><stop offset="0.19933" stop-color="#120000"/><stop offset="0.19933" stop-color="#140000"/><stop offset="0.20000" stop-color="#140000"/><stop offset="0.20000" stop-color="#120000"/><stop offset="0.20067" stop-color="#120000"/><stop offset="0.20067" stop-color="#140000"/><stop offset="0.20133" stop-color="#140000"/><stop offset="0.20133" stop-color="#100000"/><stop offset="0.20200" stop-color="#100000"/><stop offset="0.20200" stop-color="#100000"/><stop offset="0.20267" stop-color="#100000"/><stop offset="0.20267" stop-color="#0f0000"/><stop offset="0.20333" stop-color="#0f0000"/><stop offset="0.20333" stop-color="#0f0000"/><stop offset="0.20400" stop-color="#0f0000"/><stop offset="0.20400" stop-color="#120000"/><stop offset="0.20467" stop-color="#120000"/><stop offset="0.20467" stop-color="#100000"/><stop offset="0.20533" stop-color="#100000"/><stop offset="0.20533" stop-color="#140000"/><stop offset="0.20600" stop-color="#140000"/><stop offset="0.20600" stop-color="#110000"/><stop offset="0.20667" stop-color="#110000"/><stop offset="0.20667" stop-color="#0f0000"/><stop offset="0.20733" stop-color="#0f0000"/><stop offset="0.20733" stop-color="#100000"/><stop offset="0.20800" stop-color="#100000"/><stop offset="0.20800" stop-color="#150000"/><stop offset="0.20867" stop-color="#150000"/><stop offset="0.20867" stop-color="#110000"/><stop offset="0.20933" stop-color="#110000"/><stop offset="0.20933" stop-color="#120000"/><stop offset="0.21000" stop-color="#120000"/><stop offset="0.21000" stop-color="#110000"/><stop offset="0.21067" stop-color="#110000"/><stop offset="0.21067" stop-color="#0f0000"/><stop offset="0.21133" stop-color="#0f0000"/><stop offset="0.21133" stop-color="#130000"/><stop offset="0.21200" stop-color="#130000"/><stop offset="0.21200" stop-color="#120000"/><stop offset="0.21267" stop-color="#120000"/><stop offset="0.21267" stop-color="#0e0000"/><stop offset="0.21333" stop-color="#0e0000"/><stop offset="0.21333" stop-color="#120000"/><stop offset="0.21400" stop-color="#120000"/><stop offset="0.21400" stop-color="#140000"/><stop offset="0.21467" stop-color="#140000"/><stop offset="0.21467" stop-color="#100000"/><stop offset="0.21533" stop-color="#100000"/><stop offset="0.21533" stop-color="#120000"/><stop offset="0.21600" stop-color="#120000"/><stop offset="0.21600" stop-color="#130000"/><stop offset="0.21667" stop-color="#130000"/><stop offset="0.21667" stop-color="#110000"/><stop offset="0.21733" stop-color="#110000"/><stop offset="0.21733" stop-color="#0e0000"/><stop offset="0.21800" stop-color="#0e0000"/><stop offset="0.21800" stop-color="#0d0000"/><stop offset="0.21867" stop-color="#0d0000"/><stop offset="0.21867" stop-color="#100000"/><stop offset="0.21933" stop-color="#100000"/><stop offset="0.21933" stop-color="#120000"/><stop offset="0.22000" stop-color="#120000"/><stop offset="0.22000" stop-color="#0f0000"/><stop offset="0.22067" stop-color="#0f0000"/><stop offset="0.22067" stop-color="#0e0000"/><stop offset="0.22133" stop-color="#0e0000"/><stop offset="0.22133" stop-color="#110000"/><stop offset="0.22200" stop-color="#110000"/><stop offset="0.22200" stop-color="#110000"/><stop offset="0.22267" stop-color="#110000"/><stop offset="0.22267" stop-color="#0e0000"/><stop offset="0.22333" stop-color="#0e0000"/><stop offset="0.22333" stop-color="#0b0000"/><stop offset="0.22400" stop-color="#0b0000"/><stop offset="0.22400" stop-color="#0e0000"/><stop offset="0.22467" stop-color="#0e0000"/><stop offset="0.22467" stop-color="#100000"/><stop offset="0.22533" stop-color="#100000"/><stop offset="0.22533" stop-color="#0d0000"/><stop offset="0.22600" stop-color="#0d0000"/><stop offset="0.22600" stop-color="#0c0000"/><stop offset="0.22667" stop-color="#0c0000"/><stop offset="0.22667" stop-color="#0f0000"/><stop offset="0.22733" stop-color="#0f0000"/><stop offset="0.22733" stop-color="#0e0000"/><stop offset="0.22800" stop-color="#0e0000"/><stop offset="0.22800" stop-color="#0b0000"/><stop offset="0.22867" stop-color="#0b0000"/><stop offset="0.22867" stop-color="#0b0000"/><stop offset="0.22933" stop-color="#0b0000"/><stop offset="0.22933" stop-color="#0c0000"/><stop offset="0.23000" stop-color="#0c0000"/><stop offset="0.23000" stop-color="#0e0000"/><stop offset="0.23067" stop-color="#0e0000"/><stop offset="0.23067" stop-color="#0f0000"/><stop offset="0.23133" stop-color="#0f0000"/><stop offset="0.23133" stop-color="#0f0000"/><stop offset="0.23200" stop-color="#0f0000"/><stop offset="0.23200" stop-color="#0b0000"/><stop offset="0.23267" stop-color="#0b0000"/><stop offset="0.23267" stop-color="#0f0000"/><stop offset="0.23333" stop-color="#0f0000"/><stop offset="0.23333" stop-color="#090000"/><stop offset="0.23400" stop-color="#090000"/><stop offset="0.23400" stop-color="#0a0000"/><stop offset="0.23467" stop-color="#0a0000"/><stop offset="0.23467" stop-color="#0c0000"/><stop offset="0.23533" stop-color="#0c0000"/><stop offset="0.23533" stop-color="#0b0000"/><stop offset="0.23600" stop-color="#0b0000"/><stop offset="0.23600" stop-color="#0b0000"/><stop offset="0.23667" stop-color="#0b0000"/><stop offset="0.23667" stop-color="#0b0000"/><stop offset="0.23733" stop-color="#0b0000"/><stop offset="0.23733" stop-color="#0b0000"/><stop offset="0.23800" stop-color="#0b0000"/><stop offset="0.23800" stop-color="#0a0000"/><stop offset="0.23867" stop-color="#0a0000"/><stop offset="0.23867" stop-color="#0d0000"/><stop offset="0.23933" stop-color="#0d0000"/><stop offset="0.23933" stop-color="#0b0000"/><stop offset="0.24000" stop-color="#0b0000"/><stop offset="0.24000" stop-color="#090000"/><stop offset="0.24067" stop-color="#090000"/><stop offset="0.24067" stop-color="#0b0000"/><stop offset="0.24133" stop-color="#0b0000"/><stop offset="0.24133" stop-color="#0d0000"/><stop offset="0.24200" stop-color="#0d0000"/><stop offset="0.24200" stop-color="#090000"/><stop offset="0.24267" stop-color="#090000"/><stop offset="0.24267" stop-color="#0d0000"/><stop offset="0.24333" stop-color="#0d0000"/><stop offset="0.24333" stop-color="#0a0000"/><stop offset="0.24400" stop-color="#0a0000"/><stop offset="0.24400" stop-color="#0c0000"/><stop offset="0.24467" stop-color="#0c0000"/><stop offset="0.24467" stop-color="#0c0000"/><stop offset="0.24533" stop-color="#0c0000"/><stop offset="0.24533" stop-color="#0e0000"/><stop offset="0.24600" stop-color="#0e0000"/><stop offset="0.24600" stop-color="#0c0000"/><stop offset="0.24667" stop-color="#0c0000"/><stop offset="0.24667" stop-color="#0a0000"/><stop offset="0.24733" stop-color="#0a0000"/><stop offset="0.24733" stop-color="#080000"/><stop offset="0.24800" stop-color="#080000"/><stop offset="0.24800" stop-color="#0b0000"/><stop offset="0.24867" stop-color="#0b0000"/><stop offset="0.24867" stop-color="#0a0000"/><stop offset="0.24933" stop-color="#0a0000"/><stop offset="0.24933" stop-color="#0d0000"/><stop offset="0.25000" stop-color="#0d0000"/><stop offset="0.25000" stop-color="#0b0000"/><stop offset="0.25067" stop-color="#0b0000"/><stop offset="0.25067" stop-color="#0c0000"/><stop offset="0.25133" stop-color="#0c0000"/><stop offset="0.25133" stop-color="#0a0000"/><stop offset="0.25200" stop-color="#0a0000"/><stop offset="0.25200" stop-color="#080000"/><stop offset="0.25267" stop-color="#080000"/><stop offset="0.25267" stop-color="#080000"/><stop offset="0.25333" stop-color="#080000"/><stop offset="0.25333" stop-color="#060000"/><stop offset="0.25400" stop-color="#060000"/><stop offset="0.25400" stop-color="#070000"/><stop offset="0.25467" stop-color="#070000"/><stop offset="0.25467" stop-color="#0c0000"/><stop offset="0.25533" stop-color="#0c0000"/><stop offset="0.25533" stop-color="#0a0000"/><stop offset="0.25600" stop-color="#0a0000"/><stop offset="0.25600" stop-color="#090000"/><stop offset="0.25667" stop-color="#090000"/><stop offset="0.25667" stop-color="#0a0000"/><stop offset="0.25733" stop-color="#0a0000"/><stop offset="0.25733" stop-color="#0b0000"/><stop offset="0.25800" stop-color="#0b0000"/><stop offset="0.25800" stop-color="#0a0000"/><stop offset="0.25867" stop-color="#0a0000"/><stop offset="0.25867" stop-color="#070000"/><stop offset="0.25933" stop-color="#070000"/><stop offset="0.25933" stop-color="#070000"/><stop offset="0.26000" stop-color="#070000"/><stop offset="0.26000" stop-color="#0a0000"/><stop offset="0.26067" stop-color="#0a0000"/><stop offset="0.26067" stop-color="#0a0000"/><stop offset="0.26133" stop-color="#0a0000"/><stop offset="0.26133" stop-color="#070000"/><stop offset="0.26200" stop-color="#070000"/><stop offset="0.26200" stop-color="#060000"/><stop offset="0.26267" stop-color="#060000"/><stop offset="0.26267" stop-color="#090000"/><stop offset="0.26333" stop-color="#090000"/><stop offset="0.26333" stop-color="#090000"/><stop offset="0.26400" stop-color="#090000"/><stop offset="0.26400" stop-color="#060000"/><stop offset="0.26467" stop-color="#060000"/><stop offset="0.26467" stop-color="#0b0000"/><stop offset="0.26533" stop-color="#0b0000"/><stop offset="0.26533" stop-color="#070000"/><stop offset="0.26600" stop-color="#070000"/><stop offset="0.26600" stop-color="#060000"/><stop offset="0.26667" stop-color="#060000"/><stop offset="0.26667" stop-color="#040000"/><stop offset="0.26733" stop-color="#040000"/><stop offset="0.26733" stop-color="#000000"/><stop offset="0.26800" stop-color="#000000"/><stop offset="0.26800" stop-color="#010000"/><stop offset="0.26867" stop-color="#010000"/><stop offset="0.26867" stop-color="#000000"/><stop offset="0.26933" stop-color="#000000"/><stop offset="0.26933" stop-color="#040000"/><stop offset="0.27000" stop-color="#040000"/><stop offset="0.27000" stop-color="#000000"/><stop offset="0.27067" stop-color="#000000"/><stop offset="0.27067" stop-color="#010000"/><stop offset="0.27133" stop-color="#010000"/><stop offset="0.27133" stop-color="#020000"/><stop offset="0.27200" stop-color="#020000"/><stop offset="0.27200" stop-color="#000000"/><stop offset="0.27267" stop-color="#000000"/><stop offset="0.27267" stop-color="#040000"/><stop offset="0.27333" stop-color="#040000"/><stop offset="0.27333" stop-color="#050000"/><stop offset="0.27400" stop-color="#050000"/><stop offset="0.27400" stop-color="#020000"/><stop offset="0.27467" stop-color="#020000"/><stop offset="0.27467" stop-color="#000000"/><stop offset="0.27533" stop-color="#000000"/><stop offset="0.27533" stop-color="#000000"/><stop offset="0.27600" stop-color="#000000"/><stop offset="0.27600" stop-color="#010000"/><stop offset="0.27667" stop-color="#010000"/><stop offset="0.27667" stop-color="#010000"/><stop offset="0.27733" stop-color="#010000"/><stop offset="0.27733" stop-color="#010000"/><stop offset="0.27800" stop-color="#010000"/><stop offset="0.27800" stop-color="#000000"/><stop offset="0.27867" stop-color="#000000"/><stop offset="0.27867" stop-color="#050000"/><stop offset="0.27933" stop-color="#050000"/><stop offset="0.27933" stop-color="#020000"/><stop offset="0.28000" stop-color="#020000"/><stop offset="0.28000" stop-color="#000000"/><stop offset="0.28067" stop-color="#000000"/><stop offset="0.28067" stop-color="#050000"/><stop offset="0.28133" stop-color="#050000"/><stop offset="0.28133" stop-color="#020000"/><stop offset="0.28200" stop-color="#020000"/><stop offset="0.28200" stop-color="#030000"/><stop offset="0.28267" stop-color="#030000"/><stop offset="0.28267" stop-color="#030000"/><stop offset="0.28333" stop-color="#030000"/><stop offset="0.28333" stop-color="#040000"/><stop offset="0.28400" stop-color="#040000"/><stop offset="0.28400" stop-color="#030000"/><stop offset="0.28467" stop-color="#030000"/><stop offset="0.28467" stop-color="#030000"/><stop offset="0.28533" stop-color="#030000"/><stop offset="0.28533" stop-color="#000000"/><stop offset="0.28600" stop-color="#000000"/><stop offset="0.28600" stop-color="#030000"/><stop offset="0.28667" stop-color="#030000"/><stop offset="0.28667" stop-color="#010000"/><stop offset="0.28733" stop-color="#010000"/><stop offset="0.28733" stop-color="#020000"/><stop offset="0.28800" stop-color="#020000"/><stop offset="0.28800" stop-color="#030000"/><stop offset="0.28867" stop-color="#030000"/><stop offset="0.28867" stop-color="#020000"/><stop offset="0.28933" stop-color="#020000"/><stop offset="0.28933" stop-color="#020000"/><stop offset="0.29000" stop-color="#020000"/><stop offset="0.29000" stop-color="#000000"/><stop offset="0.29067" stop-color="#000000"/><stop offset="0.29067" stop-color="#000000"/><stop offset="0.29133" stop-color="#000000"/><stop offset="0.29133" stop-color="#000000"/><stop offset="0.29200" stop-color="#000000"/><stop offset="0.29200" stop-color="#000000"/><stop offset="0.29267" stop-color="#000000"/><stop offset="0.29267" stop-color="#000000"/><stop offset="0.29333" stop-color="#000000"/><stop offset="0.29333" stop-color="#010000"/><stop offset="0.29400" stop-color="#010000"/><stop offset="0.29400" stop-color="#050000"/><stop offset="0.29467" stop-color="#050000"/><stop offset="0.29467" stop-color="#000000"/><stop offset="0.29533" stop-color="#000000"/><stop offset="0.29533" stop-color="#020000"/><stop offset="0.29600" stop-color="#020000"/><stop offset="0.29600" stop-color="#010000"/><stop offset="0.29667" stop-color="#010000"/><stop offset="0.29667" stop-color="#030000"/><stop offset="0.29733" stop-color="#030000"/><stop offset="0.29733" stop-color="#050000"/><stop offset="0.29800" stop-color="#050000"/><stop offset="0.29800" stop-color="#050000"/><stop offset="0.29867" stop-color="#050000"/><stop offset="0.29867" stop-color="#010000"/><stop offset="0.29933" stop-color="#010000"/><stop offset="0.29933" stop-color="#000000"/><stop offset="0.30000" stop-color="#000000"/><stop offset="0.30000" stop-color="#080000"/><stop offset="0.30067" stop-color="#080000"/><stop offset="0.30067" stop-color="#060000"/><stop offset="0.30133" stop-color="#060000"/><stop offset="0.30133" stop-color="#050000"/><stop offset="0.30200" stop-color="#050000"/><stop offset="0.30200" stop-color="#050000"/><stop offset="0.30267" stop-color="#050000"/><stop offset="0.30267" stop-color="#080000"/><stop offset="0.30333" stop-color="#080000"/><stop offset="0.30333" stop-color="#060000"/><stop offset="0.30400" stop-color="#060000"/><stop offset="0.30400" stop-color="#0c0000"/><stop offset="0.30467" stop-color="#0c0000"/><stop offset="0.30467" stop-color="#080000"/><stop offset="0.30533" stop-color="#080000"/><stop offset="0.30533" stop-color="#080000"/><stop offset="0.30600" stop-color="#080000"/><stop offset="0.30600" stop-color="#0b0000"/><stop offset="0.30667" stop-color="#0b0000"/><stop offset="0.30667" stop-color="#0a0000"/><stop offset="0.30733" stop-color="#0a0000"/><stop offset="0.30733" stop-color="#0c0000"/><stop offset="0.30800" stop-color="#0c0000"/><stop offset="0.30800" stop-color="#070000"/><stop offset="0.30867" stop-color="#070000"/><stop offset="0.30867" stop-color="#0a0000"/><stop offset="0.30933" stop-color="#0a0000"/><stop offset="0.30933" stop-color="#0b0000"/><stop offset="0.31000" stop-color="#0b0000"/><stop offset="0.31000" stop-color="#080000"/><stop offset="0.31067" stop-color="#080000"/><stop offset="0.31067" stop-color="#090000"/><stop offset="0.31133" stop-color="#090000"/><stop offset="0.31133" stop-color="#0b0000"/><stop offset="0.31200" stop-color="#0b0000"/><stop offset="0.31200" stop-color="#0b0000"/><stop offset="0.31267" stop-color="#0b0000"/><stop offset="0.31267" stop-color="#080000"/><stop offset="0.31333" stop-color="#080000"/><stop offset="0.31333" stop-color="#090000"/><stop offset="0.31400" stop-color="#090000"/><stop offset="0.31400" stop-color="#090000"/><stop offset="0.31467" stop-color="#090000"/><stop offset="0.31467" stop-color="#0b0000"/><stop offset="0.31533" stop-color="#0b0000"/><stop offset="0.31533" stop-color="#090000"/><stop offset="0.31600" stop-color="#090000"/><stop offset="0.31600" stop-color="#0b0000"/><stop offset="0.31667" stop-color="#0b0000"/><stop offset="0.31667" stop-color="#0d0000"/><stop offset="0.31733" stop-color="#0d0000"/><stop offset="0.31733" stop-color="#0b0000"/><stop offset="0.31800" stop-color="#0b0000"/><stop offset="0.31800" stop-color="#0e0000"/><stop offset="0.31867" stop-color="#0e0000"/><stop offset="0.31867" stop-color="#0f0000"/><stop offset="0.31933" stop-color="#0f0000"/><stop offset="0.31933" stop-color="#0b0000"/><stop offset="0.32000" stop-color="#0b0000"/><stop offset="0.32000" stop-color="#0b0000"/><stop offset="0.32067" stop-color="#0b0000"/><stop offset="0.32067" stop-color="#0c0000"/><stop offset="0.32133" stop-color="#0c0000"/><stop offset="0.32133" stop-color="#0d0000"/><stop offset="0.32200" stop-color="#0d0000"/><stop offset="0.32200" stop-color="#0e0000"/><stop offset="0.32267" stop-color="#0e0000"/><stop offset="0.32267" stop-color="#0c0000"/><stop offset="0.32333" stop-color="#0c0000"/><stop offset="0.32333" stop-color="#0f0000"/><stop offset="0.32400" stop-color="#0f0000"/><stop offset="0.32400" stop-color="#0d0000"/><stop offset="0.32467" stop-color="#0d0000"/><stop offset="0.32467" stop-color="#110000"/><stop offset="0.32533" stop-color="#110000"/><stop offset="0.32533" stop-color="#130000"/><stop offset="0.32600" stop-color="#130000"/><stop offset="0.32600" stop-color="#100000"/><stop offset="0.32667" stop-color="#100000"/><stop offset="0.32667" stop-color="#130000"/><stop offset="0.32733" stop-color="#130000"/><stop offset="0.32733" stop-color="#130000"/><stop offset="0.32800" stop-color="#130000"/><stop offset="0.32800" stop-color="#110000"/><stop offset="0.32867" stop-color="#110000"/><stop offset="0.32867" stop-color="#0d0000"/><stop offset="0.32933" stop-color="#0d0000"/><stop offset="0.32933" stop-color="#110000"/><stop offset="0.33000" stop-color="#110000"/><stop offset="0.33000" stop-color="#0e0000"/><stop offset="0.33067" stop-color="#0e0000"/><stop offset="0.33067" stop-color="#110000"/><stop offset="0.33133" stop-color="#110000"/><stop offset="0.33133" stop-color="#110000"/><stop offset="0.33200" stop-color="#110000"/><stop offset="0.33200" stop-color="#100000"/><stop offset="0.33267" stop-color="#100000"/><stop offset="0.33267" stop-color="#0f0000"/><stop offset="0.33333" stop-color="#0f0000"/><stop offset="0.33333" stop-color="#150000"/><stop offset="0.33400" stop-color="#150000"/><stop offset="0.33400" stop-color="#110000"/><stop offset="0.33467" stop-color="#110000"/><stop offset="0.33467" stop-color="#120000"/><stop offset="0.33533" stop-color="#120000"/><stop offset="0.33533" stop-color="#110000"/><stop offset="0.33600" stop-color="#110000"/><stop offset="0.33600" stop-color="#130000"/><stop offset="0.33667" stop-color="#130000"/><stop offset="0.33667" stop-color="#100000"/><stop offset="0.33733" stop-color="#100000"/><stop offset="0.33733" stop-color="#120000"/><stop offset="0.33800" stop-color="#120000"/><stop offset="0.33800" stop-color="#120000"/><stop offset="0.33867" stop-color="#120000"/><stop offset="0.33867" stop-color="#100000"/><stop offset="0.33933" stop-color="#100000"/><stop offset="0.33933" stop-color="#110000"/><stop offset="0.34000" stop-color="#110000"/><stop offset="0.34000" stop-color="#110000"/><stop offset="0.34067" stop-color="#110000"/><stop offset="0.34067" stop-color="#120000"/><stop offset="0.34133" stop-color="#120000"/><stop offset="0.34133" stop-color="#120000"/><stop offset="0.34200" stop-color="#120000"/><stop offset="0.34200" stop-color="#120000"/><stop offset="0.34267" stop-color="#120000"/><stop offset="0.34267" stop-color="#120000"/><stop offset="0.34333" stop-color="#120000"/><stop offset="0.34333" stop-color="#130000"/><stop offset="0.34400" stop-color="#130000"/><stop offset="0.34400" stop-color="#120000"/><stop offset="0.34467" stop-color="#120000"/><stop offset="0.34467" stop-color="#140000"/><stop offset="0.34533" stop-color="#140000"/><stop offset="0.34533" stop-color="#120000"/><stop offset="0.34600" stop-color="#120000"/><stop offset="0.34600" stop-color="#140000"/><stop offset="0.34667" stop-color="#140000"/><stop offset="0.34667" stop-color="#1b0000"/><stop offset="0.34733" stop-color="#1b0000"/><stop offset="0.34733" stop-color="#1c0000"/><stop offset="0.34800" stop-color="#1c0000"/><stop offset="0.34800" stop-color="#1c0000"/><stop offset="0.34867" stop-color="#1c0000"/><stop offset="0.34867" stop-color="#1d0000"/><stop offset="0.34933" stop-color="#1d0000"/><stop offset="0.34933" stop-color="#1d0000"/><stop offset="0.35000" stop-color="#1d0000"/><stop offset="0.35000" stop-color="#1f0000"/><stop offset="0.35067" stop-color="#1f0000"/><stop offset="0.35067" stop-color="#1f0000"/><stop offset="0.35133" stop-color="#1f0000"/><stop offset="0.35133" stop-color="#1f0000"/><stop offset="0.35200" stop-color="#1f0000"/><stop offset="0.35200" stop-color="#220000"/><stop offset="0.35267" stop-color="#220000"/><stop offset="0.35267" stop-color="#200000"/><stop offset="0.35333" stop-color="#200000"/><stop offset="0.35333" stop-color="#240000"/><stop offset="0.35400" stop-color="#240000"/><stop offset="0.35400" stop-color="#230000"/><stop offset="0.35467" stop-color="#230000"/><stop offset="0.35467" stop-color="#270000"/><stop offset="0.35533" stop-color="#270000"/><stop offset="0.35533" stop-color="#250000"/><stop offset="0.35600" stop-color="#250000"/><stop offset="0.35600" stop-color="#280000"/><stop offset="0.35667" stop-color="#280000"/><stop offset="0.35667" stop-color="#290000"/><stop offset="0.35733" stop-color="#290000"/><stop offset="0.35733" stop-color="#2a0000"/><stop offset="0.35800" stop-color="#2a0000"/><stop offset="0.35800" stop-color="#2c0000"/><stop offset="0.35867" stop-color="#2c0000"/><stop offset="0.35867" stop-color="#2e0000"/><stop offset="0.35933" stop-color="#2e0000"/><stop offset="0.35933" stop-color="#300000"/><stop offset="0.36000" stop-color="#300000"/><stop offset="0.36000" stop-color="#310000"/><stop offset="0.36067" stop-color="#310000"/><stop offset="0.36067" stop-color="#350000"/><stop offset="0.36133" stop-color="#350000"/><stop offset="0.36133" stop-color="#340000"/><stop offset="0.36200" stop-color="#340000"/><stop offset="0.36200" stop-color="#370000"/><stop offset="0.36267" stop-color="#370000"/><stop offset="0.36267" stop-color="#3a0000"/><stop offset="0.36333" stop-color="#3a0000"/><stop offset="0.36333" stop-color="#3d0000"/><stop offset="0.36400" stop-color="#3d0000"/><stop offset="0.36400" stop-color="#3f0000"/><stop offset="0.36467" stop-color="#3f0000"/><stop offset="0.36467" stop-color="#3f0000"/><stop offset="0.36533" stop-color="#3f0000"/><stop offset="0.36533" stop-color="#3d0000"/><stop offset="0.36600" stop-color="#3d0000"/><stop offset="0.36600" stop-color="#440000"/><stop offset="0.36667" stop-color="#440000"/><stop offset="0.36667" stop-color="#430000"/><stop offset="0.36733" stop-color="#430000"/><stop offset="0.36733" stop-color="#440000"/><stop offset="0.36800" stop-color="#440000"/><stop offset="0.36800" stop-color="#460000"/><stop offset="0.36867" stop-color="#460000"/><stop offset="0.36867" stop-color="#440000"/><stop offset="0.36933" stop-color="#440000"/><stop offset="0.36933" stop-color="#440000"/><stop offset="0.37000" stop-color="#440000"/><stop offset="0.37000" stop-color="#470000"/><stop offset="0.37067" stop-color="#470000"/><stop offset="0.37067" stop-color="#460000"/><stop offset="0.37133" stop-color="#460000"/><stop offset="0.37133" stop-color="#490000"/><stop offset="0.37200" stop-color="#490000"/><stop offset="0.37200" stop-color="#490000"/><stop offset="0.37267" stop-color="#490000"/><stop offset="0.37267" stop-color="#4b0000"/><stop offset="0.37333" stop-color="#4b0000"/><stop offset="0.37333" stop-color="#4a0000"/><stop offset="0.37400" stop-color="#4a0000"/><stop offset="0.37400" stop-color="#4a0000"/><stop offset="0.37467" stop-color="#4a0000"/><stop offset="0.37467" stop-color="#4f0000"/><stop offset="0.37533" stop-color="#4f0000"/><stop offset="0.37533" stop-color="#4d0000"/><stop offset="0.37600" stop-color="#4d0000"/><stop offset="0.37600" stop-color="#530000"/><stop offset="0.37667" stop-color="#530000"/><stop offset="0.37667" stop-color="#500000"/><stop offset="0.37733" stop-color="#500000"/><stop offset="0.37733" stop-color="#4e0000"/><stop offset="0.37800" stop-color="#4e0000"/><stop offset="0.37800" stop-color="#520000"/><stop offset="0.37867" stop-color="#520000"/><stop offset="0.37867" stop-color="#500000"/><stop offset="0.37933" stop-color="#500000"/><stop offset="0.37933" stop-color="#510000"/><stop offset="0.38000" stop-color="#510000"/><stop offset="0.38000" stop-color="#520000"/><stop offset="0.38067" stop-color="#520000"/><stop offset="0.38067" stop-color="#540000"/><stop offset="0.38133" stop-color="#540000"/><stop offset="0.38133" stop-color="#560000"/><stop offset="0.38200" stop-color="#560000"/><stop offset="0.38200" stop-color="#570000"/><stop offset="0.38267" stop-color="#570000"/><stop offset="0.38267" stop-color="#590000"/><stop offset="0.38333" stop-color="#590000"/><stop offset="0.38333" stop-color="#5a0000"/><stop offset="0.38400" stop-color="#5a0000"/><stop offset="0.38400" stop-color="#5c0000"/><stop offset="0.38467" stop-color="#5c0000"/><stop offset="0.38467" stop-color="#590000"/><stop offset="0.38533" stop-color="#590000"/><stop offset="0.38533" stop-color="#5d0000"/><stop offset="0.38600" stop-color="#5d0000"/><stop offset="0.38600" stop-color="#5c0000"/><stop offset="0.38667" stop-color="#5c0000"/><stop offset="0.38667" stop-color="#5a0000"/><stop offset="0.38733" stop-color="#5a0000"/><stop offset="0.38733" stop-color="#5f0000"/><stop offset="0.38800" stop-color="#5f0000"/><stop offset="0.38800" stop-color="#5c0000"/><stop offset="0.38867" stop-color="#5c0000"/><stop offset="0.38867" stop-color="#610000"/><stop offset="0.38933" stop-color="#610000"/><stop offset="0.38933" stop-color="#610000"/><stop offset="0.39000" stop-color="#610000"/><stop offset="0.39000" stop-color="#640000"/><stop offset="0.39067" stop-color="#640000"/><stop offset="0.39067" stop-color="#660000"/><stop offset="0.39133" stop-color="#660000"/><stop offset="0.39133" stop-color="#650000"/><stop offset="0.39200" stop-color="#650000"/><stop offset="0.39200" stop-color="#610000"/><stop offset="0.39267" stop-color="#610000"/><stop offset="0.39267" stop-color="#650000"/><stop offset="0.39333" stop-color="#650000"/><stop offset="0.39333" stop-color="#640000"/><stop offset="0.39400" stop-color="#640000"/><stop offset="0.39400" stop-color="#650000"/><stop offset="0.39467" stop-color="#650000"/><stop offset="0.39467" stop-color="#670000"/><stop offset="0.39533" stop-color="#670000"/><stop offset="0.39533" stop-color="#6a0000"/><stop offset="0.39600" stop-color="#6a0000"/><stop offset="0.39600" stop-color="#690000"/><stop offset="0.39667" stop-color="#690000"/><stop offset="0.39667" stop-color="#670000"/><stop offset="0.39733" stop-color="#670000"/><stop offset="0.39733" stop-color="#6d0000"/><stop offset="0.39800" stop-color="#6d0000"/><stop offset="0.39800" stop-color="#6a0000"/><stop offset="0.39867" stop-color="#6a0000"/><stop offset="0.39867" stop-color="#6b0000"/><stop offset="0.39933" stop-color="#6b0000"/><stop offset="0.39933" stop-color="#670000"/><stop offset="0.40000" stop-color="#670000"/><stop offset="0.40000" stop-color="#670000"/><stop offset="0.40067" stop-color="#670000"/><stop offset="0.40067" stop-color="#670000"/><stop offset="0.40133" stop-color="#670000"/><stop offset="0.40133" stop-color="#6e0000"/><stop offset="0.40200" stop-color="#6e0000"/><stop offset="0.40200" stop-color="#6f0000"/><stop offset="0.40267" stop-color="#6f0000"/><stop offset="0.40267" stop-color="#6a0000"/><stop offset="0.40333" stop-color="#6a0000"/><stop offset="0.40333" stop-color="#700000"/><stop offset="0.40400" stop-color="#700000"/><stop offset="0.40400" stop-color="#700000"/><stop offset="0.40467" stop-color="#700000"/><stop offset="0.40467" stop-color="#6e0000"/><stop offset="0.40533" stop-color="#6e0000"/><stop offset="0.40533" stop-color="#6f0000"/><stop offset="0.40600" stop-color="#6f0000"/><stop offset="0.40600" stop-color="#740000"/><stop offset="0.40667" stop-color="#740000"/><stop offset="0.40667" stop-color="#730000"/><stop offset="0.40733" stop-color="#730000"/><stop offset="0.40733" stop-color="#750000"/><stop offset="0.40800" stop-color="#750000"/><stop offset="0.40800" stop-color="#720000"/><stop offset="0.40867" stop-color="#720000"/><stop offset="0.40867" stop-color="#770000"/><stop offset="0.40933" stop-color="#770000"/><stop offset="0.40933" stop-color="#760000"/><stop offset="0.41000" stop-color="#760000"/><stop offset="0.41000" stop-color="#750000"/><stop offset="0.41067" stop-color="#750000"/><stop offset="0.41067" stop-color="#780000"/><stop offset="0.41133" stop-color="#780000"/><stop offset="0.41133" stop-color="#770000"/><stop offset="0.41200" stop-color="#770000"/><stop offset="0.41200" stop-color="#760000"/><stop offset="0.41267" stop-color="#760000"/><stop offset="0.41267" stop-color="#760000"/><stop offset="0.41333" stop-color="#760000"/><stop offset="0.41333" stop-color="#790000"/><stop offset="0.41400" stop-color="#790000"/><stop offset="0.41400" stop-color="#760000"/><stop offset="0.41467" stop-color="#760000"/><stop offset="0.41467" stop-color="#780000"/><stop offset="0.41533" stop-color="#780000"/><stop offset="0.41533" stop-color="#780000"/><stop offset="0.41600" stop-color="#780000"/><stop offset="0.41600" stop-color="#7c0000"/><stop offset="0.41667" stop-color="#7c0000"/><stop offset="0.41667" stop-color="#7d0000"/><stop offset="0.41733" stop-color="#7d0000"/><stop offset="0.41733" stop-color="#7b0000"/><stop offset="0.41800" stop-color="#7b0000"/><stop offset="0.41800" stop-color="#7c0000"/><stop offset="0.41867" stop-color="#7c0000"/><stop offset="0.41867" stop-color="#800000"/><stop offset="0.41933" stop-color="#800000"/><stop offset="0.41933" stop-color="#7e0000"/><stop offset="0.42000" stop-color="#7e0000"/><stop offset="0.42000" stop-color="#810000"/><stop offset="0.42067" stop-color="#810000"/><stop offset="0.42067" stop-color="#7e0000"/><stop offset="0.42133" stop-color="#7e0000"/><stop offset="0.42133" stop-color="#800000"/><stop offset="0.42200" stop-color="#800000"/><stop offset="0.42200" stop-color="#830000"/><stop offset="0.42267" stop-color="#830000"/><stop offset="0.42267" stop-color="#7e0000"/><stop offset="0.42333" stop-color="#7e0000"/><stop offset="0.42333" stop-color="#810000"/><stop offset="0.42400" stop-color="#810000"/><stop offset="0.42400" stop-color="#820000"/><stop offset="0.42467" stop-color="#820000"/><stop offset="0.42467" stop-color="#7f0000"/><stop offset="0.42533" stop-color="#7f0000"/><stop offset="0.42533" stop-color="#850000"/><stop offset="0.42600" stop-color="#850000"/><stop offset="0.42600" stop-color="#800000"/><stop offset="0.42667" stop-color="#800000"/><stop offset="0.42667" stop-color="#850000"/><stop offset="0.42733" stop-color="#850000"/><stop offset="0.42733" stop-color="#850000"/><stop offset="0.42800" stop-color="#850000"/><stop offset="0.42800" stop-color="#840000"/><stop offset="0.42867" stop-color="#840000"/><stop offset="0.42867" stop-color="#850000"/><stop offset="0.42933" stop-color="#850000"/><stop offset="0.42933" stop-color="#880000"/><stop offset="0.43000" stop-color="#880000"/><stop offset="0.43000" stop-color="#830000"/><stop offset="0.43067" stop-color="#830000"/><stop offset="0.43067" stop-color="#860000"/><stop offset="0.43133" stop-color="#860000"/><stop offset="0.43133" stop-color="#820000"/><stop offset="0.43200" stop-color="#820000"/><stop offset="0.43200" stop-color="#840000"/><stop offset="0.43267" stop-color="#840000"/><stop offset="0.43267" stop-color="#820000"/><stop offset="0.43333" stop-color="#820000"/><stop offset="0.43333" stop-color="#830000"/><stop offset="0.43400" stop-color="#830000"/><stop offset="0.43400" stop-color="#840000"/><stop offset="0.43467" stop-color="#840000"/><stop offset="0.43467" stop-color="#830000"/><stop offset="0.43533" stop-color="#830000"/><stop offset="0.43533" stop-color="#840000"/><stop offset="0.43600" stop-color="#840000"/><stop offset="0.43600" stop-color="#840000"/><stop offset="0.43667" stop-color="#840000"/><stop offset="0.43667" stop-color="#830000"/><stop offset="0.43733" stop-color="#830000"/><stop offset="0.43733" stop-color="#860000"/><stop offset="0.43800" stop-color="#860000"/><stop offset="0.43800" stop-color="#860000"/><stop offset="0.43867" stop-color="#860000"/><stop offset="0.43867" stop-color="#870000"/><stop offset="0.43933" stop-color="#870000"/><stop offset="0.43933" stop-color="#880000"/><stop offset="0.44000" stop-color="#880000"/><stop offset="0.44000" stop-color="#840000"/><stop offset="0.44067" stop-color="#840000"/><stop offset="0.44067" stop-color="#870000"/><stop offset="0.44133" stop-color="#870000"/><stop offset="0.44133" stop-color="#880000"/><stop offset="0.44200" stop-color="#880000"/><stop offset="0.44200" stop-color="#860000"/><stop offset="0.44267" stop-color="#860000"/><stop offset="0.44267" stop-color="#860000"/><stop offset="0.44333" stop-color="#860000"/><stop offset="0.44333" stop-color="#860000"/><stop offset="0.44400" stop-color="#860000"/><stop offset="0.44400" stop-color="#860000"/><stop offset="0.44467" stop-color="#860000"/><stop offset="0.44467" stop-color="#8a0000"/><stop offset="0.44533" stop-color="#8a0000"/><stop offset="0.44533" stop-color="#880000"/><stop offset="0.44600" stop-color="#880000"/><stop offset="0.44600" stop-color="#890000"/><stop offset="0.44667" stop-color="#890000"/><stop offset="0.44667" stop-color="#870000"/><stop offset="0.44733" stop-color="#870000"/><stop offset="0.44733" stop-color="#880000"/><stop offset="0.44800" stop-color="#880000"/><stop offset="0.44800" stop-color="#8c0000"/><stop offset="0.44867" stop-color="#8c0000"/><stop offset="0.44867" stop-color="#8c0000"/><stop offset="0.44933" stop-color="#8c0000"/><stop offset="0.44933" stop-color="#8a0000"/><stop offset="0.45000" stop-color="#8a0000"/><stop offset="0.45000" stop-color="#870000"/><stop offset="0.45067" stop-color="#870000"/><stop offset="0.45067" stop-color="#840000"/><stop offset="0.45133" stop-color="#840000"/><stop offset="0.45133" stop-color="#890000"/><stop offset="0.45200" stop-color="#890000"/><stop offset="0.45200" stop-color="#840000"/><stop offset="0.45267" stop-color="#840000"/><stop offset="0.45267" stop-color="#870000"/><stop offset="0.45333" stop-color="#870000"/><stop offset="0.45333" stop-color="#880000"/><stop offset="0.45400" stop-color="#880000"/><stop offset="0.45400" stop-color="#860000"/><stop offset="0.45467" stop-color="#860000"/><stop offset="0.45467" stop-color="#880000"/><stop offset="0.45533" stop-color="#880000"/><stop offset="0.45533" stop-color="#8b0000"/><stop offset="0.45600" stop-color="#8b0000"/><stop offset="0.45600" stop-color="#8a0000"/><stop offset="0.45667" stop-color="#8a0000"/><stop offset="0.45667" stop-color="#850000"/><stop offset="0.45733" stop-color="#850000"/><stop offset="0.45733" stop-color="#8b0000"/><stop offset="0.45800" stop-color="#8b0000"/><stop offset="0.45800" stop-color="#860000"/><stop offset="0.45867" stop-color="#860000"/><stop offset="0.45867" stop-color="#880000"/><stop offset="0.45933" stop-color="#880000"/><stop offset="0.45933" stop-color="#880000"/><stop offset="0.46000" stop-color="#880000"/><stop offset="0.46000" stop-color="#860000"/><stop offset="0.46067" stop-color="#860000"/><stop offset="0.46067" stop-color="#8a0000"/><stop offset="0.46133" stop-color="#8a0000"/><stop offset="0.46133" stop-color="#880000"/><stop offset="0.46200" stop-color="#880000"/><stop offset="0.46200" stop-color="#890000"/><stop offset="0.46267" stop-color="#890000"/><stop offset="0.46267" stop-color="#850000"/><stop offset="0.46333" stop-color="#850000"/><stop offset="0.46333" stop-color="#860000"/><stop offset="0.46400" stop-color="#860000"/><stop offset="0.46400" stop-color="#8b0000"/><stop offset="0.46467" stop-color="#8b0000"/><stop offset="0.46467" stop-color="#880000"/><stop offset="0.46533" stop-color="#880000"/><stop offset="0.46533" stop-color="#880000"/><stop offset="0.46600" stop-color="#880000"/><stop offset="0.46600" stop-color="#880000"/><stop offset="0.46667" stop-color="#880000"/><stop offset="0.46667" stop-color="#860000"/><stop offset="0.46733" stop-color="#860000"/><stop offset="0.46733" stop-color="#850000"/><stop offset="0.46800" stop-color="#850000"/><stop offset="0.46800" stop-color="#850000"/><stop offset="0.46867" stop-color="#850000"/><stop offset="0.46867" stop-color="#870000"/><stop offset="0.46933" stop-color="#870000"/><stop offset="0.46933" stop-color="#880000"/><stop offset="0.47000" stop-color="#880000"/><stop offset="0.47000" stop-color="#870000"/><stop offset="0.47067" stop-color="#870000"/><stop offset="0.47067" stop-color="#840000"/><stop offset="0.47133" stop-color="#840000"/><stop offset="0.47133" stop-color="#840000"/><stop offset="0.47200" stop-color="#840000"/><stop offset="0.47200" stop-color="#840000"/><stop offset="0.47267" stop-color="#840000"/><stop offset="0.47267" stop-color="#890000"/><stop offset="0.47333" stop-color="#890000"/><stop offset="0.47333" stop-color="#840000"/><stop offset="0.47400" stop-color="#840000"/><stop offset="0.47400" stop-color="#840000"/><stop offset="0.47467" stop-color="#840000"/><stop offset="0.47467" stop-color="#870000"/><stop offset="0.47533" stop-color="#870000"/><stop offset="0.47533" stop-color="#890000"/><stop offset="0.47600" stop-color="#890000"/><stop offset="0.47600" stop-color="#870000"/><stop offset="0.47667" stop-color="#870000"/><stop offset="0.47667" stop-color="#870000"/><stop offset="0.47733" stop-color="#870000"/><stop offset="0.47733" stop-color="#890000"/><stop offset="0.47800" stop-color="#890000"/><stop offset="0.47800" stop-color="#830000"/><stop offset="0.47867" stop-color="#830000"/><stop offset="0.47867" stop-color="#860000"/><stop offset="0.47933" stop-color="#860000"/><stop offset="0.47933" stop-color="#850000"/><stop offset="0.48000" stop-color="#850000"/><stop offset="0.48000" stop-color="#880000"/><stop offset="0.48067" stop-color="#880000"/><stop offset="0.48067" stop-color="#840000"/><stop offset="0.48133" stop-color="#840000"/><stop offset="0.48133" stop-color="#870000"/><stop offset="0.48200" stop-color="#870000"/><stop offset="0.48200" stop-color="#890000"/><stop offset="0.48267" stop-color="#890000"/><stop offset="0.48267" stop-color="#890000"/><stop offset="0.48333" stop-color="#890000"/><stop offset="0.48333" stop-color="#830000"/><stop offset="0.48400" stop-color="#830000"/><stop offset="0.48400" stop-color="#840000"/><stop offset="0.48467" stop-color="#840000"/><stop offset="0.48467" stop-color="#860000"/><stop offset="0.48533" stop-color="#860000"/><stop offset="0.48533" stop-color="#870000"/><stop offset="0.48600" stop-color="#870000"/><stop offset="0.48600" stop-color="#820000"/><stop offset="0.48667" stop-color="#820000"/><stop offset="0.48667" stop-color="#860000"/><stop offset="0.48733" stop-color="#860000"/><stop offset="0.48733" stop-color="#810000"/><stop offset="0.48800" stop-color="#810000"/><stop offset="0.48800" stop-color="#850000"/><stop offset="0.48867" stop-color="#850000"/><stop offset="0.48867" stop-color="#810000"/><stop offset="0.48933" stop-color="#810000"/><stop offset="0.48933" stop-color="#830000"/><stop offset="0.49000" stop-color="#830000"/><stop offset="0.49000" stop-color="#7e0000"/><stop offset="0.49067" stop-color="#7e0000"/><stop offset="0.49067" stop-color="#7d0000"/><stop offset="0.49133" stop-color="#7d0000"/><stop offset="0.49133" stop-color="#810000"/><stop offset="0.49200" stop-color="#810000"/><stop offset="0.49200" stop-color="#7d0000"/><stop offset="0.49267" stop-color="#7d0000"/><stop offset="0.49267" stop-color="#810000"/><stop offset="0.49333" stop-color="#810000"/><stop offset="0.49333" stop-color="#7c0000"/><stop offset="0.49400" stop-color="#7c0000"/><stop offset="0.49400" stop-color="#7d0000"/><stop offset="0.49467" stop-color="#7d0000"/><stop offset="0.49467" stop-color="#7f0000"/><stop offset="0.49533" stop-color="#7f0000"/><stop offset="0.49533" stop-color="#7d0000"/><stop offset="0.49600" stop-color="#7d0000"/><stop offset="0.49600" stop-color="#7c0000"/><stop offset="0.49667" stop-color="#7c0000"/><stop offset="0.49667" stop-color="#7b0000"/><stop offset="0.49733" stop-color="#7b0000"/><stop offset="0.49733" stop-color="#7b0000"/><stop offset="0.49800" stop-color="#7b0000"/><stop offset="0.49800" stop-color="#7c0000"/><stop offset="0.49867" stop-color="#7c0000"/><stop offset="0.49867" stop-color="#7c0000"/><stop offset="0.49933" stop-color="#7c0000"/><stop offset="0.49933" stop-color="#7c0000"/><stop offset="0.50000" stop-color="#7c0000"/><stop offset="0.50000" stop-color="#7c0000"/><stop offset="0.50067" stop-color="#7c0000"/><stop offset="0.50067" stop-color="#7a0000"/><stop offset="0.50133" stop-color="#7a0000"/><stop offset="0.50133" stop-color="#780000"/><stop offset="0.50200" stop-color="#780000"/><stop offset="0.50200" stop-color="#760000"/><stop offset="0.50267" stop-color="#760000"/><stop offset="0.50267" stop-color="#7d0000"/><stop offset="0.50333" stop-color="#7d0000"/><stop offset="0.50333" stop-color="#790000"/><stop offset="0.50400" stop-color="#790000"/><stop offset="0.50400" stop-color="#7a0000"/><stop offset="0.50467" stop-color="#7a0000"/><stop offset="0.50467" stop-color="#790000"/><stop offset="0.50533" stop-color="#790000"/><stop offset="0.50533" stop-color="#760000"/><stop offset="0.50600" stop-color="#760000"/><stop offset="0.50600" stop-color="#7b0000"/><stop offset="0.50667" stop-color="#7b0000"/><stop offset="0.50667" stop-color="#780000"/><stop offset="0.50733" stop-color="#780000"/><stop offset="0.50733" stop-color="#760000"/><stop offset="0.50800" stop-color="#760000"/><stop offset="0.50800" stop-color="#770000"/><stop offset="0.50867" stop-color="#770000"/><stop offset="0.50867" stop-color="#750000"/><stop offset="0.50933" stop-color="#750000"/><stop offset="0.50933" stop-color="#720000"/><stop offset="0.51000" stop-color="#720000"/><stop offset="0.51000" stop-color="#790000"/><stop offset="0.51067" stop-color="#790000"/><stop offset="0.51067" stop-color="#750000"/><stop offset="0.51133" stop-color="#750000"/><stop offset="0.51133" stop-color="#740000"/><stop offset="0.51200" stop-color="#740000"/><stop offset="0.51200" stop-color="#730000"/><stop offset="0.51267" stop-color="#730000"/><stop offset="0.51267" stop-color="#730000"/><stop offset="0.51333" stop-color="#730000"/><stop offset="0.51333" stop-color="#730000"/><stop offset="0.51400" stop-color="#730000"/><stop offset="0.51400" stop-color="#710000"/><stop offset="0.51467" stop-color="#710000"/><stop offset="0.51467" stop-color="#700000"/><stop offset="0.51533" stop-color="#700000"/><stop offset="0.51533" stop-color="#730000"/><stop offset="0.51600" stop-color="#730000"/><stop offset="0.51600" stop-color="#750000"/><stop offset="0.51667" stop-color="#750000"/><stop offset="0.51667" stop-color="#730000"/><stop offset="0.51733" stop-color="#730000"/><stop offset="0.51733" stop-color="#750000"/><stop offset="0.51800" stop-color="#750000"/><stop offset="0.51800" stop-color="#730000"/><stop offset="0.51867" stop-color="#730000"/><stop offset="0.51867" stop-color="#700000"/><stop offset="0.51933" stop-color="#700000"/><stop offset="0.51933" stop-color="#720000"/><stop offset="0.52000" stop-color="#720000"/><stop offset="0.52000" stop-color="#740000"/><stop offset="0.52067" stop-color="#740000"/><stop offset="0.52067" stop-color="#700000"/><stop offset="0.52133" stop-color="#700000"/><stop offset="0.52133" stop-color="#700000"/><stop offset="0.52200" stop-color="#700000"/><stop offset="0.52200" stop-color="#6f0000"/><stop offset="0.52267" stop-color="#6f0000"/><stop offset="0.52267" stop-color="#700000"/><stop offset="0.52333" stop-color="#700000"/><stop offset="0.52333" stop-color="#6f0000"/><stop offset="0.52400" stop-color="#6f0000"/><stop offset="0.52400" stop-color="#6f0000"/><stop offset="0.52467" stop-color="#6f0000"/><stop offset="0.52467" stop-color="#6e0000"/><stop offset="0.52533" stop-color="#6e0000"/><stop offset="0.52533" stop-color="#720000"/><stop offset="0.52600" stop-color="#720000"/><stop offset="0.52600" stop-color="#6c0000"/><stop offset="0.52667" stop-color="#6c0000"/><stop offset="0.52667" stop-color="#6e0000"/><stop offset="0.52733" stop-color="#6e0000"/><stop offset="0.52733" stop-color="#6e0000"/><stop offset="0.52800" stop-color="#6e0000"/><stop offset="0.52800" stop-color="#6d0000"/><stop offset="0.52867" stop-color="#6d0000"/><stop offset="0.52867" stop-color="#700000"/><stop offset="0.52933" stop-color="#700000"/><stop offset="0.52933" stop-color="#6e0000"/><stop offset="0.53000" stop-color="#6e0000"/><stop offset="0.53000" stop-color="#700000"/><stop offset="0.53067" stop-color="#700000"/><stop offset="0.53067" stop-color="#6c0000"/><stop offset="0.53133" stop-color="#6c0000"/><stop offset="0.53133" stop-color="#710000"/><stop offset="0.53200" stop-color="#710000"/><stop offset="0.53200" stop-color="#6e0000"/><stop offset="0.53267" stop-color="#6e0000"/><stop offset="0.53267" stop-color="#710000"/><stop offset="0.53333" stop-color="#710000"/><stop offset="0.53333" stop-color="#710000"/><stop offset="0.53400" stop-color="#710000"/><stop offset="0.53400" stop-color="#6f0000"/><stop offset="0.53467" stop-color="#6f0000"/><stop offset="0.53467" stop-color="#6f0000"/><stop offset="0.53533" stop-color="#6f0000"/><stop offset="0.53533" stop-color="#6c0000"/><stop offset="0.53600" stop-color="#6c0000"/><stop offset="0.53600" stop-color="#710000"/><stop offset="0.53667" stop-color="#710000"/><stop offset="0.53667" stop-color="#700000"/><stop offset="0.53733" stop-color="#700000"/><stop offset="0.53733" stop-color="#720000"/><stop offset="0.53800" stop-color="#720000"/><stop offset="0.53800" stop-color="#700000"/><stop offset="0.53867" stop-color="#700000"/><stop offset="0.53867" stop-color="#710000"/><stop offset="0.53933" stop-color="#710000"/><stop offset="0.53933" stop-color="#700000"/><stop offset="0.54000" stop-color="#700000"/><stop offset="0.54000" stop-color="#6e0000"/><stop offset="0.54067" stop-color="#6e0000"/><stop offset="0.54067" stop-color="#6f0000"/><stop offset="0.54133" stop-color="#6f0000"/><stop offset="0.54133" stop-color="#6d0000"/><stop offset="0.54200" stop-color="#6d0000"/><stop offset="0.54200" stop-color="#700000"/><stop offset="0.54267" stop-color="#700000"/><stop offset="0.54267" stop-color="#6d0000"/><stop offset="0.54333" stop-color="#6d0000"/><stop offset="0.54333" stop-color="#6d0000"/><stop offset="0.54400" stop-color="#6d0000"/><stop offset="0.54400" stop-color="#700000"/><stop offset="0.54467" stop-color="#700000"/><stop offset="0.54467" stop-color="#6f0000"/><stop offset="0.54533" stop-color="#6f0000"/><stop offset="0.54533" stop-color="#6f0000"/><stop offset="0.54600" stop-color="#6f0000"/><stop offset="0.54600" stop-color="#6e0000"/><stop offset="0.54667" stop-color="#6e0000"/><stop offset="0.54667" stop-color="#6e0000"/><stop offset="0.54733" stop-color="#6e0000"/><stop offset="0.54733" stop-color="#6e0000"/><stop offset="0.54800" stop-color="#6e0000"/><stop offset="0.54800" stop-color="#6f0000"/><stop offset="0.54867" stop-color="#6f0000"/><stop offset="0.54867" stop-color="#6d0000"/><stop offset="0.54933" stop-color="#6d0000"/><stop offset="0.54933" stop-color="#6c0000"/><stop offset="0.55000" stop-color="#6c0000"/><stop offset="0.55000" stop-color="#6c0000"/><stop offset="0.55067" stop-color="#6c0000"/><stop offset="0.55067" stop-color="#6b0000"/><stop offset="0.55133" stop-color="#6b0000"/><stop offset="0.55133" stop-color="#6c0000"/><stop offset="0.55200" stop-color="#6c0000"/><stop offset="0.55200" stop-color="#710000"/><stop offset="0.55267" stop-color="#710000"/><stop offset="0.55267" stop-color="#6c0000"/><stop offset="0.55333" stop-color="#6c0000"/><stop offset="0.55333" stop-color="#6e0000"/><stop offset="0.55400" stop-color="#6e0000"/><stop offset="0.55400" stop-color="#6d0000"/><stop offset="0.55467" stop-color="#6d0000"/><stop offset="0.55467" stop-color="#6d0000"/><stop offset="0.55533" stop-color="#6d0000"/><stop offset="0.55533" stop-color="#6d0000"/><stop offset="0.55600" stop-color="#6d0000"/><stop offset="0.55600" stop-color="#710000"/><stop offset="0.55667" stop-color="#710000"/><stop offset="0.55667" stop-color="#6a0000"/><stop offset="0.55733" stop-color="#6a0000"/><stop offset="0.55733" stop-color="#6c0000"/><stop offset="0.55800" stop-color="#6c0000"/><stop offset="0.55800" stop-color="#6a0000"/><stop offset="0.55867" stop-color="#6a0000"/><stop offset="0.55867" stop-color="#6d0000"/><stop offset="0.55933" stop-color="#6d0000"/><stop offset="0.55933" stop-color="#6c0000"/><stop offset="0.56000" stop-color="#6c0000"/><stop offset="0.56000" stop-color="#6d0000"/><stop offset="0.56067" stop-color="#6d0000"/><stop offset="0.56067" stop-color="#6b0000"/><stop offset="0.56133" stop-color="#6b0000"/><stop offset="0.56133" stop-color="#6c0000"/><stop offset="0.56200" stop-color="#6c0000"/><stop offset="0.56200" stop-color="#6d0000"/><stop offset="0.56267" stop-color="#6d0000"/><stop offset="0.56267" stop-color="#6a0000"/><stop offset="0.56333" stop-color="#6a0000"/><stop offset="0.56333" stop-color="#6a0000"/><stop offset="0.56400" stop-color="#6a0000"/><stop offset="0.56400" stop-color="#6a0000"/><stop offset="0.56467" stop-color="#6a0000"/><stop offset="0.56467" stop-color="#6c0000"/><stop offset="0.56533" stop-color="#6c0000"/><stop offset="0.56533" stop-color="#6a0000"/><stop offset="0.56600" stop-color="#6a0000"/><stop offset="0.56600" stop-color="#670000"/><stop offset="0.56667" stop-color="#670000"/><stop offset="0.56667" stop-color="#6a0000"/><stop offset="0.56733" stop-color="#6a0000"/><stop offset="0.56733" stop-color="#670000"/><stop offset="0.56800" stop-color="#670000"/><stop offset="0.56800" stop-color="#690000"/><stop offset="0.56867" stop-color="#690000"/><stop offset="0.56867" stop-color="#680000"/><stop offset="0.56933" stop-color="#680000"/><stop offset="0.56933" stop-color="#6a0000"/><stop offset="0.57000" stop-color="#6a0000"/><stop offset="0.57000" stop-color="#6a0000"/><stop offset="0.57067" stop-color="#6a0000"/><stop offset="0.57067" stop-color="#6b0000"/><stop offset="0.57133" stop-color="#6b0000"/><stop offset="0.57133" stop-color="#6a0000"/><stop offset="0.57200" stop-color="#6a0000"/><stop offset="0.57200" stop-color="#6b0000"/><stop offset="0.57267" stop-color="#6b0000"/><stop offset="0.57267" stop-color="#680000"/><stop offset="0.57333" stop-color="#680000"/><stop offset="0.57333" stop-color="#690000"/><stop offset="0.57400" stop-color="#690000"/><stop offset="0.57400" stop-color="#6c0000"/><stop offset="0.57467" stop-color="#6c0000"/><stop offset="0.57467" stop-color="#690000"/><stop offset="0.57533" stop-color="#690000"/><stop offset="0.57533" stop-color="#660000"/><stop offset="0.57600" stop-color="#660000"/><stop offset="0.57600" stop-color="#6a0000"/><stop offset="0.57667" stop-color="#6a0000"/><stop offset="0.57667" stop-color="#6a0000"/><stop offset="0.57733" stop-color="#6a0000"/><stop offset="0.57733" stop-color="#670000"/><stop offset="0.57800" stop-color="#670000"/><stop offset="0.57800" stop-color="#6c0000"/><stop offset="0.57867" stop-color="#6c0000"/><stop offset="0.57867" stop-color="#680000"/><stop offset="0.57933" stop-color="#680000"/><stop offset="0.57933" stop-color="#6a0000"/><stop offset="0.58000" stop-color="#6a0000"/><stop offset="0.58000" stop-color="#660000"/><stop offset="0.58067" stop-color="#660000"/><stop offset="0.58067" stop-color="#6a0000"/><stop offset="0.58133" stop-color="#6a0000"/><stop offset="0.58133" stop-color="#690000"/><stop offset="0.58200" stop-color="#690000"/><stop offset="0.58200" stop-color="#6a0000"/><stop offset="0.58267" stop-color="#6a0000"/><stop offset="0.58267" stop-color="#6b0000"/><stop offset="0.58333" stop-color="#6b0000"/><stop offset="0.58333" stop-color="#680000"/><stop offset="0.58400" stop-color="#680000"/><stop offset="0.58400" stop-color="#660000"/><stop offset="0.58467" stop-color="#660000"/><stop offset="0.58467" stop-color="#680000"/><stop offset="0.58533" stop-color="#680000"/><stop offset="0.58533" stop-color="#680000"/><stop offset="0.58600" stop-color="#680000"/><stop offset="0.58600" stop-color="#6c0000"/><stop offset="0.58667" stop-color="#6c0000"/><stop offset="0.58667" stop-color="#690000"/><stop offset="0.58733" stop-color="#690000"/><stop offset="0.58733" stop-color="#680000"/><stop offset="0.58800" stop-color="#680000"/><stop offset="0.58800" stop-color="#690000"/><stop offset="0.58867" stop-color="#690000"/><stop offset="0.58867" stop-color="#660000"/><stop offset="0.58933" stop-color="#660000"/><stop offset="0.58933" stop-color="#660000"/><stop offset="0.59000" stop-color="#660000"/><stop offset="0.59000" stop-color="#6c0000"/><stop offset="0.59067" stop-color="#6c0000"/><stop offset="0.59067" stop-color="#6c0000"/><stop offset="0.59133" stop-color="#6c0000"/><stop offset="0.59133" stop-color="#6c0000"/><stop offset="0.59200" stop-color="#6c0000"/><stop offset="0.59200" stop-color="#6a0000"/><stop offset="0.59267" stop-color="#6a0000"/><stop offset="0.59267" stop-color="#670000"/><stop offset="0.59333" stop-color="#670000"/><stop offset="0.59333" stop-color="#680000"/><stop offset="0.59400" stop-color="#680000"/><stop offset="0.59400" stop-color="#690000"/><stop offset="0.59467" stop-color="#690000"/><stop offset="0.59467" stop-color="#6a0000"/><stop offset="0.59533" stop-color="#6a0000"/><stop offset="0.59533" stop-color="#6b0000"/><stop offset="0.59600" stop-color="#6b0000"/><stop offset="0.59600" stop-color="#670000"/><stop offset="0.59667" stop-color="#670000"/><stop offset="0.59667" stop-color="#640000"/><stop offset="0.59733" stop-color="#640000"/><stop offset="0.59733" stop-color="#670000"/><stop offset="0.59800" stop-color="#670000"/><stop offset="0.59800" stop-color="#660000"/><stop offset="0.59867" stop-color="#660000"/><stop offset="0.59867" stop-color="#680000"/><stop offset="0.59933" stop-color="#680000"/><stop offset="0.59933" stop-color="#670000"/><stop offset="0.60000" stop-color="#670000"/><stop offset="0.60000" stop-color="#660000"/><stop offset="0.60067" stop-color="#660000"/><stop offset="0.60067" stop-color="#650000"/><stop offset="0.60133" stop-color="#650000"/><stop offset="0.60133" stop-color="#640000"/><stop offset="0.60200" stop-color="#640000"/><stop offset="0.60200" stop-color="#650000"/><stop offset="0.60267" stop-color="#650000"/><stop offset="0.60267" stop-color="#660000"/><stop offset="0.60333" stop-color="#660000"/><stop offset="0.60333" stop-color="#680000"/><stop offset="0.60400" stop-color="#680000"/><stop offset="0.60400" stop-color="#650000"/><stop offset="0.60467" stop-color="#650000"/><stop offset="0.60467" stop-color="#650000"/><stop offset="0.60533" stop-color="#650000"/><stop offset="0.60533" stop-color="#680000"/><stop offset="0.60600" stop-color="#680000"/><stop offset="0.60600" stop-color="#680000"/><stop offset="0.60667" stop-color="#680000"/><stop offset="0.60667" stop-color="#650000"/><stop offset="0.60733" stop-color="#650000"/><stop offset="0.60733" stop-color="#620000"/><stop offset="0.60800" stop-color="#620000"/><stop offset="0.60800" stop-color="#640000"/><stop offset="0.60867" stop-color="#640000"/><stop offset="0.60867" stop-color="#660000"/><stop offset="0.60933" stop-color="#660000"/><stop offset="0.60933" stop-color="#660000"/><stop offset="0.61000" stop-color="#660000"/><stop offset="0.61000" stop-color="#620000"/><stop offset="0.61067" stop-color="#620000"/><stop offset="0.61067" stop-color="#600000"/><stop offset="0.61133" stop-color="#600000"/><stop offset="0.61133" stop-color="#630000"/><stop offset="0.61200" stop-color="#630000"/><stop offset="0.61200" stop-color="#600000"/><stop offset="0.61267" stop-color="#600000"/><stop offset="0.61267" stop-color="#650000"/><stop offset="0.61333" stop-color="#650000"/><stop offset="0.61333" stop-color="#610000"/><stop offset="0.61400" stop-color="#610000"/><stop offset="0.61400" stop-color="#620000"/><stop offset="0.61467" stop-color="#620000"/><stop offset="0.61467" stop-color="#600000"/><stop offset="0.61533" stop-color="#600000"/><stop offset="0.61533" stop-color="#5e0000"/><stop offset="0.61600" stop-color="#5e0000"/><stop offset="0.61600" stop-color="#610000"/><stop offset="0.61667" stop-color="#610000"/><stop offset="0.61667" stop-color="#610000"/><stop offset="0.61733" stop-color="#610000"/><stop offset="0.61733" stop-color="#600000"/><stop offset="0.61800" stop-color="#600000"/><stop offset="0.61800" stop-color="#610000"/><stop offset="0.61867" stop-color="#610000"/><stop offset="0.61867" stop-color="#610000"/><stop offset="0.61933" stop-color="#610000"/><stop offset="0.61933" stop-color="#5c0000"/><stop offset="0.62000" stop-color="#5c0000"/><stop offset="0.62000" stop-color="#5e0000"/><stop offset="0.62067" stop-color="#5e0000"/><stop offset="0.62067" stop-color="#600000"/><stop offset="0.62133" stop-color="#600000"/><stop offset="0.62133" stop-color="#600000"/><stop offset="0.62200" stop-color="#600000"/><stop offset="0.62200" stop-color="#600000"/><stop offset="0.62267" stop-color="#600000"/><stop offset="0.62267" stop-color="#600000"/><stop offset="0.62333" stop-color="#600000"/><stop offset="0.62333" stop-color="#5d0000"/><stop offset="0.62400" stop-color="#5d0000"/><stop offset="0.62400" stop-color="#5e0000"/><stop offset="0.62467" stop-color="#5e0000"/><stop offset="0.62467" stop-color="#5d0000"/><stop offset="0.62533" stop-color="#5d0000"/><stop offset="0.62533" stop-color="#5f0000"/><stop offset="0.62600" stop-color="#5f0000"/><stop offset="0.62600" stop-color="#5a0000"/><stop offset="0.62667" stop-color="#5a0000"/><stop offset="0.62667" stop-color="#5c0000"/><stop offset="0.62733" stop-color="#5c0000"/><stop offset="0.62733" stop-color="#5b0000"/><stop offset="0.62800" stop-color="#5b0000"/><stop offset="0.62800" stop-color="#5e0000"/><stop offset="0.62867" stop-color="#5e0000"/><stop offset="0.62867" stop-color="#570000"/><stop offset="0.62933" stop-color="#570000"/><stop offset="0.62933" stop-color="#5a0000"/><stop offset="0.63000" stop-color="#5a0000"/><stop offset="0.63000" stop-color="#580000"/><stop offset="0.63067" stop-color="#580000"/><stop offset="0.63067" stop-color="#570000"/><stop offset="0.63133" stop-color="#570000"/><stop offset="0.63133" stop-color="#5c0000"/><stop offset="0.63200" stop-color="#5c0000"/><stop offset="0.63200" stop-color="#570000"/><stop offset="0.63267" stop-color="#570000"/><stop offset="0.63267" stop-color="#560000"/><stop offset="0.63333" stop-color="#560000"/><stop offset="0.63333" stop-color="#570000"/><stop offset="0.63400" stop-color="#570000"/><stop offset="0.63400" stop-color="#570000"/><stop offset="0.63467" stop-color="#570000"/><stop offset="0.63467" stop-color="#560000"/><stop offset="0.63533" stop-color="#560000"/><stop offset="0.63533" stop-color="#550000"/><stop offset="0.63600" stop-color="#550000"/><stop offset="0.63600" stop-color="#580000"/><stop offset="0.63667" stop-color="#580000"/><stop offset="0.63667" stop-color="#580000"/><stop offset="0.63733" stop-color="#580000"/><stop offset="0.63733" stop-color="#530000"/><stop offset="0.63800" stop-color="#530000"/><stop offset="0.63800" stop-color="#560000"/><stop offset="0.63867" stop-color="#560000"/><stop offset="0.63867" stop-color="#540000"/><stop offset="0.63933" stop-color="#540000"/><stop offset="0.63933" stop-color="#560000"/><stop offset="0.64000" stop-color="#560000"/><stop offset="0.64000" stop-color="#570000"/><stop offset="0.64067" stop-color="#570000"/><stop offset="0.64067" stop-color="#520000"/><stop offset="0.64133" stop-color="#520000"/><stop offset="0.64133" stop-color="#510000"/><stop offset="0.64200" stop-color="#510000"/><stop offset="0.64200" stop-color="#540000"/><stop offset="0.64267" stop-color="#540000"/><stop offset="0.64267" stop-color="#530000"/><stop offset="0.64333" stop-color="#530000"/><stop offset="0.64333" stop-color="#560000"/><stop offset="0.64400" stop-color="#560000"/><stop offset="0.64400" stop-color="#570000"/><stop offset="0.64467" stop-color="#570000"/><stop offset="0.64467" stop-color="#560000"/><stop offset="0.64533" stop-color="#560000"/><stop offset="0.64533" stop-color="#510000"/><stop offset="0.64600" stop-color="#510000"/><stop offset="0.64600" stop-color="#500000"/><stop offset="0.64667" stop-color="#500000"/><stop offset="0.64667" stop-color="#560000"/><stop offset="0.64733" stop-color="#560000"/><stop offset="0.64733" stop-color="#540000"/><stop offset="0.64800" stop-color="#540000"/><stop offset="0.64800" stop-color="#510000"/><stop offset="0.64867" stop-color="#510000"/><stop offset="0.64867" stop-color="#530000"/><stop offset="0.64933" stop-color="#530000"/><stop offset="0.64933" stop-color="#550000"/><stop offset="0.65000" stop-color="#550000"/><stop offset="0.65000" stop-color="#520000"/><stop offset="0.65067" stop-color="#520000"/><stop offset="0.65067" stop-color="#540000"/><stop offset="0.65133" stop-color="#540000"/><stop offset="0.65133" stop-color="#510000"/><stop offset="0.65200" stop-color="#510000"/><stop offset="0.65200" stop-color="#4e0000"/><stop offset="0.65267" stop-color="#4e0000"/><stop offset="0.65267" stop-color="#510000"/><stop offset="0.65333" stop-color="#510000"/><stop offset="0.65333" stop-color="#4f0000"/><stop offset="0.65400" stop-color="#4f0000"/><stop offset="0.65400" stop-color="#4d0000"/><stop offset="0.65467" stop-color="#4d0000"/><stop offset="0.65467" stop-color="#4d0000"/><stop offset="0.65533" stop-color="#4d0000"/><stop offset="0.65533" stop-color="#4e0000"/><stop offset="0.65600" stop-color="#4e0000"/><stop offset="0.65600" stop-color="#4d0000"/><stop offset="0.65667" stop-color="#4d0000"/><stop offset="0.65667" stop-color="#4d0000"/><stop offset="0.65733" stop-color="#4d0000"/><stop offset="0.65733" stop-color="#4e0000"/><stop offset="0.65800" stop-color="#4e0000"/><stop offset="0.65800" stop-color="#4e0000"/><stop offset="0.65867" stop-color="#4e0000"/><stop offset="0.65867" stop-color="#4c0000"/><stop offset="0.65933" stop-color="#4c0000"/><stop offset="0.65933" stop-color="#4c0000"/><stop offset="0.66000" stop-color="#4c0000"/><stop offset="0.66000" stop-color="#520000"/><stop offset="0.66067" stop-color="#520000"/><stop offset="0.66067" stop-color="#500000"/><stop offset="0.66133" stop-color="#500000"/><stop offset="0.66133" stop-color="#500000"/><stop offset="0.66200" stop-color="#500000"/><stop offset="0.66200" stop-color="#4b0000"/><stop offset="0.66267" stop-color="#4b0000"/><stop offset="0.66267" stop-color="#4d0000"/><stop offset="0.66333" stop-color="#4d0000"/><stop offset="0.66333" stop-color="#4a0000"/><stop offset="0.66400" stop-color="#4a0000"/><stop offset="0.66400" stop-color="#4d0000"/><stop offset="0.66467" stop-color="#4d0000"/><stop offset="0.66467" stop-color="#4c0000"/><stop offset="0.66533" stop-color="#4c0000"/><stop offset="0.66533" stop-color="#4b0000"/><stop offset="0.66600" stop-color="#4b0000"/><stop offset="0.66600" stop-color="#490000"/><stop offset="0.66667" stop-color="#490000"/><stop offset="0.66667" stop-color="#4d0000"/><stop offset="0.66733" stop-color="#4d0000"/><stop offset="0.66733" stop-color="#4b0000"/><stop offset="0.66800" stop-color="#4b0000"/><stop offset="0.66800" stop-color="#4b0000"/><stop offset="0.66867" stop-color="#4b0000"/><stop offset="0.66867" stop-color="#490000"/><stop offset="0.66933" stop-color="#490000"/><stop offset="0.66933" stop-color="#480000"/><stop offset="0.67000" stop-color="#480000"/><stop offset="0.67000" stop-color="#480000"/><stop offset="0.67067" stop-color="#480000"/><stop offset="0.67067" stop-color="#480000"/><stop offset="0.67133" stop-color="#480000"/><stop offset="0.67133" stop-color="#490000"/><stop offset="0.67200" stop-color="#490000"/><stop offset="0.67200" stop-color="#470000"/><stop offset="0.67267" stop-color="#470000"/><stop offset="0.67267" stop-color="#470000"/><stop offset="0.67333" stop-color="#470000"/><stop offset="0.67333" stop-color="#4a0000"/><stop offset="0.67400" stop-color="#4a0000"/><stop offset="0.67400" stop-color="#460000"/><stop offset="0.67467" stop-color="#460000"/><stop offset="0.67467" stop-color="#4a0000"/><stop offset="0.67533" stop-color="#4a0000"/><stop offset="0.67533" stop-color="#480000"/><stop offset="0.67600" stop-color="#480000"/><stop offset="0.67600" stop-color="#470000"/><stop offset="0.67667" stop-color="#470000"/><stop offset="0.67667" stop-color="#4a0000"/><stop offset="0.67733" stop-color="#4a0000"/><stop offset="0.67733" stop-color="#460000"/><stop offset="0.67800" stop-color="#460000"/><stop offset="0.67800" stop-color="#450000"/><stop offset="0.67867" stop-color="#450000"/><stop offset="0.67867" stop-color="#470000"/><stop offset="0.67933" stop-color="#470000"/><stop offset="0.67933" stop-color="#470000"/><stop offset="0.68000" stop-color="#470000"/><stop offset="0.68000" stop-color="#440000"/><stop offset="0.68067" stop-color="#440000"/><stop offset="0.68067" stop-color="#470000"/><stop offset="0.68133" stop-color="#470000"/><stop offset="0.68133" stop-color="#470000"/><stop offset="0.68200" stop-color="#470000"/><stop offset="0.68200" stop-color="#450000"/><stop offset="0.68267" stop-color="#450000"/><stop offset="0.68267" stop-color="#440000"/><stop offset="0.68333" stop-color="#440000"/><stop offset="0.68333" stop-color="#440000"/><stop offset="0.68400" stop-color="#440000"/><stop offset="0.68400" stop-color="#450000"/><stop offset="0.68467" stop-color="#450000"/><stop offset="0.68467" stop-color="#440000"/><stop offset="0.68533" stop-color="#440000"/><stop offset="0.68533" stop-color="#420000"/><stop offset="0.68600" stop-color="#420000"/><stop offset="0.68600" stop-color="#430000"/><stop offset="0.68667" stop-color="#430000"/><stop offset="0.68667" stop-color="#440000"/><stop offset="0.68733" stop-color="#440000"/><stop offset="0.68733" stop-color="#470000"/><stop offset="0.68800" stop-color="#470000"/><stop offset="0.68800" stop-color="#430000"/><stop offset="0.68867" stop-color="#430000"/><stop offset="0.68867" stop-color="#450000"/><stop offset="0.68933" stop-color="#450000"/><stop offset="0.68933" stop-color="#420000"/><stop offset="0.69000" stop-color="#420000"/><stop offset="0.69000" stop-color="#450000"/><stop offset="0.69067" stop-color="#450000"/><stop offset="0.69067" stop-color="#430000"/><stop offset="0.69133" stop-color="#430000"/><stop offset="0.69133" stop-color="#410000"/><stop offset="0.69200" stop-color="#410000"/><stop offset="0.69200" stop-color="#400000"/><stop offset="0.69267" stop-color="#400000"/><stop offset="0.69267" stop-color="#400000"/><stop offset="0.69333" stop-color="#400000"/><stop offset="0.69333" stop-color="#420000"/><stop offset="0.69400" stop-color="#420000"/><stop offset="0.69400" stop-color="#3d0000"/><stop offset="0.69467" stop-color="#3d0000"/><stop offset="0.69467" stop-color="#3f0000"/><stop offset="0.69533" stop-color="#3f0000"/><stop offset="0.69533" stop-color="#3d0000"/><stop offset="0.69600" stop-color="#3d0000"/><stop offset="0.69600" stop-color="#3b0000"/><stop offset="0.69667" stop-color="#3b0000"/><stop offset="0.69667" stop-color="#3e0000"/><stop offset="0.69733" stop-color="#3e0000"/><stop offset="0.69733" stop-color="#3a0000"/><stop offset="0.69800" stop-color="#3a0000"/><stop offset="0.69800" stop-color="#3c0000"/><stop offset="0.69867" stop-color="#3c0000"/><stop offset="0.69867" stop-color="#3e0000"/><stop offset="0.69933" stop-color="#3e0000"/><stop offset="0.69933" stop-color="#3e0000"/><stop offset="0.70000" stop-color="#3e0000"/><stop offset="0.70000" stop-color="#390000"/><stop offset="0.70067" stop-color="#390000"/><stop offset="0.70067" stop-color="#390000"/><stop offset="0.70133" stop-color="#390000"/><stop offset="0.70133" stop-color="#390000"/><stop offset="0.70200" stop-color="#390000"/><stop offset="0.70200" stop-color="#390000"/><stop offset="0.70267" stop-color="#390000"/><stop offset="0.70267" stop-color="#3a0000"/><stop offset="0.70333" stop-color="#3a0000"/><stop offset="0.70333" stop-color="#390000"/><stop offset="0.70400" stop-color="#390000"/><stop offset="0.70400" stop-color="#360000"/><stop offset="0.70467" stop-color="#360000"/><stop offset="0.70467" stop-color="#370000"/><stop offset="0.70533" stop-color="#370000"/><stop offset="0.70533" stop-color="#360000"/><stop offset="0.70600" stop-color="#360000"/><stop offset="0.70600" stop-color="#350000"/><stop offset="0.70667" stop-color="#350000"/><stop offset="0.70667" stop-color="#350000"/><stop offset="0.70733" stop-color="#350000"/><stop offset="0.70733" stop-color="#340000"/><stop offset="0.70800" stop-color="#340000"/><stop offset="0.70800" stop-color="#350000"/><stop offset="0.70867" stop-color="#350000"/><stop offset="0.70867" stop-color="#350000"/><stop offset="0.70933" stop-color="#350000"/><stop offset="0.70933" stop-color="#370000"/><stop offset="0.71000" stop-color="#370000"/><stop offset="0.71000" stop-color="#380000"/><stop offset="0.71067" stop-color="#380000"/><stop offset="0.71067" stop-color="#360000"/><stop offset="0.71133" stop-color="#360000"/><stop offset="0.71133" stop-color="#330000"/><stop offset="0.71200" stop-color="#330000"/><stop offset="0.71200" stop-color="#380000"/><stop offset="0.71267" stop-color="#380000"/><stop offset="0.71267" stop-color="#360000"/><stop offset="0.71333" stop-color="#360000"/><stop offset="0.71333" stop-color="#340000"/><stop offset="0.71400" stop-color="#340000"/><stop offset="0.71400" stop-color="#310000"/><stop offset="0.71467" stop-color="#310000"/><stop offset="0.71467" stop-color="#350000"/><stop offset="0.71533" stop-color="#350000"/><stop offset="0.71533" stop-color="#300000"/><stop offset="0.71600" stop-color="#300000"/><stop offset="0.71600" stop-color="#350000"/><stop offset="0.71667" stop-color="#350000"/><stop offset="0.71667" stop-color="#310000"/><stop offset="0.71733" stop-color="#310000"/><stop offset="0.71733" stop-color="#310000"/><stop offset="0.71800" stop-color="#310000"/><stop offset="0.71800" stop-color="#2e0000"/><stop offset="0.71867" stop-color="#2e0000"/><stop offset="0.71867" stop-color="#320000"/><stop offset="0.71933" stop-color="#320000"/><stop offset="0.71933" stop-color="#2f0000"/><stop offset="0.72000" stop-color="#2f0000"/><stop offset="0.72000" stop-color="#330000"/><stop offset="0.72067" stop-color="#330000"/><stop offset="0.72067" stop-color="#310000"/><stop offset="0.72133" stop-color="#310000"/><stop offset="0.72133" stop-color="#2f0000"/><stop offset="0.72200" stop-color="#2f0000"/><stop offset="0.72200" stop-color="#300000"/><stop offset="0.72267" stop-color="#300000"/><stop offset="0.72267" stop-color="#2e0000"/><stop offset="0.72333" stop-color="#2e0000"/><stop offset="0.72333" stop-color="#310000"/><stop offset="0.72400" stop-color="#310000"/><stop offset="0.72400" stop-color="#2c0000"/><stop offset="0.72467" stop-color="#2c0000"/><stop offset="0.72467" stop-color="#2b0000"/><stop offset="0.72533" stop-color="#2b0000"/><stop offset="0.72533" stop-color="#2e0000"/><stop offset="0.72600" stop-color="#2e0000"/><stop offset="0.72600" stop-color="#2c0000"/><stop offset="0.72667" stop-color="#2c0000"/><stop offset="0.72667" stop-color="#2e0000"/><stop offset="0.72733" stop-color="#2e0000"/><stop offset="0.72733" stop-color="#2d0000"/><stop offset="0.72800" stop-color="#2d0000"/><stop offset="0.72800" stop-color="#2e0000"/><stop offset="0.72867" stop-color="#2e0000"/><stop offset="0.72867" stop-color="#2b0000"/><stop offset="0.72933" stop-color="#2b0000"/><stop offset="0.72933" stop-color="#2d0000"/><stop offset="0.73000" stop-color="#2d0000"/><stop offset="0.73000" stop-color="#2c0000"/><stop offset="0.73067" stop-color="#2c0000"/><stop offset="0.73067" stop-color="#2c0000"/><stop offset="0.73133" stop-color="#2c0000"/><stop offset="0.73133" stop-color="#2a0000"/><stop offset="0.73200" stop-color="#2a0000"/><stop offset="0.73200" stop-color="#2d0000"/><stop offset="0.73267" stop-color="#2d0000"/><stop offset="0.73267" stop-color="#270000"/><stop offset="0.73333" stop-color="#270000"/><stop offset="0.73333" stop-color="#270000"/><stop offset="0.73400" stop-color="#270000"/><stop offset="0.73400" stop-color="#280000"/><stop offset="0.73467" stop-color="#280000"/><stop offset="0.73467" stop-color="#280000"/><stop offset="0.73533" stop-color="#280000"/><stop offset="0.73533" stop-color="#290000"/><stop offset="0.73600" stop-color="#290000"/><stop offset="0.73600" stop-color="#270000"/><stop offset="0.73667" stop-color="#270000"/><stop offset="0.73667" stop-color="#270000"/><stop offset="0.73733" stop-color="#270000"/><stop offset="0.73733" stop-color="#270000"/><stop offset="0.73800" stop-color="#270000"/><stop offset="0.73800" stop-color="#260000"/><stop offset="0.73867" stop-color="#260000"/><stop offset="0.73867" stop-color="#220000"/><stop offset="0.73933" stop-color="#220000"/><stop offset="0.73933" stop-color="#230000"/><stop offset="0.74000" stop-color="#230000"/><stop offset="0.74000" stop-color="#210000"/><stop offset="0.74067" stop-color="#210000"/><stop offset="0.74067" stop-color="#260000"/><stop offset="0.74133" stop-color="#260000"/><stop offset="0.74133" stop-color="#270000"/><stop offset="0.74200" stop-color="#270000"/><stop offset="0.74200" stop-color="#200000"/><stop offset="0.74267" stop-color="#200000"/><stop offset="0.74267" stop-color="#200000"/><stop offset="0.74333" stop-color="#200000"/><stop offset="0.74333" stop-color="#210000"/><stop offset="0.74400" stop-color="#210000"/><stop offset="0.74400" stop-color="#220000"/><stop offset="0.74467" stop-color="#220000"/><stop offset="0.74467" stop-color="#230000"/><stop offset="0.74533" stop-color="#230000"/><stop offset="0.74533" stop-color="#1f0000"/><stop offset="0.74600" stop-color="#1f0000"/><stop offset="0.74600" stop-color="#200000"/><stop offset="0.74667" stop-color="#200000"/><stop offset="0.74667" stop-color="#200000"/><stop offset="0.74733" stop-color="#200000"/><stop offset="0.74733" stop-color="#1e0000"/><stop offset="0.74800" stop-color="#1e0000"/><stop offset="0.74800" stop-color="#1c0000"/><stop offset="0.74867" stop-color="#1c0000"/><stop offset="0.74867" stop-color="#1d0000"/><stop offset="0.74933" stop-color="#1d0000"/><stop offset="0.74933" stop-color="#1e0000"/><stop offset="0.75000" stop-color="#1e0000"/><stop offset="0.75000" stop-color="#1f0000"/><stop offset="0.75067" stop-color="#1f0000"/><stop offset="0.75067" stop-color="#1e0000"/><stop offset="0.75133" stop-color="#1e0000"/><stop offset="0.75133" stop-color="#1a0000"/><stop offset="0.75200" stop-color="#1a0000"/><stop offset="0.75200" stop-color="#1b0000"/><stop offset="0.75267" stop-color="#1b0000"/><stop offset="0.75267" stop-color="#1a0000"/><stop offset="0.75333" stop-color="#1a0000"/><stop offset="0.75333" stop-color="#1c0000"/><stop offset="0.75400" stop-color="#1c0000"/><stop offset="0.75400" stop-color="#1a0000"/><stop offset="0.75467" stop-color="#1a0000"/><stop offset="0.75467" stop-color="#170000"/><stop offset="0.75533" stop-color="#170000"/><stop offset="0.75533" stop-color="#170000"/><stop offset="0.75600" stop-color="#170000"/><stop offset="0.75600" stop-color="#180000"/><stop offset="0.75667" stop-color="#180000"/><stop offset="0.75667" stop-color="#1c0000"/><stop offset="0.75733" stop-color="#1c0000"/><stop offset="0.75733" stop-color="#1a0000"/><stop offset="0.75800" stop-color="#1a0000"/><stop offset="0.75800" stop-color="#150000"/><stop offset="0.75867" stop-color="#150000"/><stop offset="0.75867" stop-color="#1a0000"/><stop offset="0.75933" stop-color="#1a0000"/><stop offset="0.75933" stop-color="#190000"/><stop offset="0.76000" stop-color="#190000"/><stop offset="0.76000" stop-color="#140000"/><stop offset="0.76067" stop-color="#140000"/><stop offset="0.76067" stop-color="#140000"/><stop offset="0.76133" stop-color="#140000"/><stop offset="0.76133" stop-color="#150000"/><stop offset="0.76200" stop-color="#150000"/><stop offset="0.76200" stop-color="#120000"/><stop offset="0.76267" stop-color="#120000"/><stop offset="0.76267" stop-color="#120000"/><stop offset="0.76333" stop-color="#120000"/><stop offset="0.76333" stop-color="#170000"/><stop offset="0.76400" stop-color="#170000"/><stop offset="0.76400" stop-color="#170000"/><stop offset="0.76467" stop-color="#170000"/><stop offset="0.76467" stop-color="#110000"/><stop offset="0.76533" stop-color="#110000"/><stop offset="0.76533" stop-color="#120000"/><stop offset="0.76600" stop-color="#120000"/><stop offset="0.76600" stop-color="#140000"/><stop offset="0.76667" stop-color="#140000"/><stop offset="0.76667" stop-color="#130000"/><stop offset="0.76733" stop-color="#130000"/><stop offset="0.76733" stop-color="#150000"/><stop offset="0.76800" stop-color="#150000"/><stop offset="0.76800" stop-color="#140000"/><stop offset="0.76867" stop-color="#140000"/><stop offset="0.76867" stop-color="#110000"/><stop offset="0.76933" stop-color="#110000"/><stop offset="0.76933" stop-color="#0f0000"/><stop offset="0.77000" stop-color="#0f0000"/><stop offset="0.77000" stop-color="#120000"/><stop offset="0.77067" stop-color="#120000"/><stop offset="0.77067" stop-color="#0f0000"/><stop offset="0.77133" stop-color="#0f0000"/><stop offset="0.77133" stop-color="#120000"/><stop offset="0.77200" stop-color="#120000"/><stop offset="0.77200" stop-color="#0e0000"/><stop offset="0.77267" stop-color="#0e0000"/><stop offset="0.77267" stop-color="#120000"/><stop offset="0.77333" stop-color="#120000"/><stop offset="0.77333" stop-color="#120000"/><stop offset="0.77400" stop-color="#120000"/><stop offset="0.77400" stop-color="#0f0000"/><stop offset="0.77467" stop-color="#0f0000"/><stop offset="0.77467" stop-color="#110000"/><stop offset="0.77533" stop-color="#110000"/><stop offset="0.77533" stop-color="#0e0000"/><stop offset="0.77600" stop-color="#0e0000"/><stop offset="0.77600" stop-color="#0f0000"/><stop offset="0.77667" stop-color="#0f0000"/><stop offset="0.77667" stop-color="#0f0000"/><stop offset="0.77733" stop-color="#0f0000"/><stop offset="0.77733" stop-color="#0e0000"/><stop offset="0.77800" stop-color="#0e0000"/><stop offset="0.77800" stop-color="#100000"/><stop offset="0.77867" stop-color="#100000"/><stop offset="0.77867" stop-color="#0c0000"/><stop offset="0.77933" stop-color="#0c0000"/><stop offset="0.77933" stop-color="#0e0000"/><stop offset="0.78000" stop-color="#0e0000"/><stop offset="0.78000" stop-color="#0d0000"/><stop offset="0.78067" stop-color="#0d0000"/><stop offset="0.78067" stop-color="#090000"/><stop offset="0.78133" stop-color="#090000"/><stop offset="0.78133" stop-color="#0b0000"/><stop offset="0.78200" stop-color="#0b0000"/><stop offset="0.78200" stop-color="#0d0000"/><stop offset="0.78267" stop-color="#0d0000"/><stop offset="0.78267" stop-color="#0a0000"/><stop offset="0.78333" stop-color="#0a0000"/><stop offset="0.78333" stop-color="#090000"/><stop offset="0.78400" stop-color="#090000"/><stop offset="0.78400" stop-color="#0c0000"/><stop offset="0.78467" stop-color="#0c0000"/><stop offset="0.78467" stop-color="#070000"/><stop offset="0.78533" stop-color="#070000"/><stop offset="0.78533" stop-color="#090000"/><stop offset="0.78600" stop-color="#090000"/><stop offset="0.78600" stop-color="#0a0000"/><stop offset="0.78667" stop-color="#0a0000"/><stop offset="0.78667" stop-color="#090000"/><stop offset="0.78733" stop-color="#090000"/><stop offset="0.78733" stop-color="#090000"/><stop offset="0.78800" stop-color="#090000"/><stop offset="0.78800" stop-color="#080000"/><stop offset="0.78867" stop-color="#080000"/><stop offset="0.78867" stop-color="#060000"/><stop offset="0.78933" stop-color="#060000"/><stop offset="0.78933" stop-color="#070000"/><stop offset="0.79000" stop-color="#070000"/><stop offset="0.79000" stop-color="#090000"/><stop offset="0.79067" stop-color="#090000"/><stop offset="0.79067" stop-color="#0c0000"/><stop offset="0.79133" stop-color="#0c0000"/><stop offset="0.79133" stop-color="#050000"/><stop offset="0.79200" stop-color="#050000"/><stop offset="0.79200" stop-color="#050000"/><stop offset="0.79267" stop-color="#050000"/><stop offset="0.79267" stop-color="#070000"/><stop offset="0.79333" stop-color="#070000"/><stop offset="0.79333" stop-color="#060000"/><stop offset="0.79400" stop-color="#060000"/><stop offset="0.79400" stop-color="#0a0000"/><stop offset="0.79467" stop-color="#0a0000"/><stop offset="0.79467" stop-color="#080000"/><stop offset="0.79533" stop-color="#080000"/><stop offset="0.79533" stop-color="#070000"/><stop offset="0.79600" stop-color="#070000"/><stop offset="0.79600" stop-color="#080000"/><stop offset="0.79667" stop-color="#080000"/><stop offset="0.79667" stop-color="#080000"/><stop offset="0.79733" stop-color="#080000"/><stop offset="0.79733" stop-color="#090000"/><stop offset="0.79800" stop-color="#090000"/><stop offset="0.79800" stop-color="#040000"/><stop offset="0.79867" stop-color="#040000"/><stop offset="0.79867" stop-color="#090000"/><stop offset="0.79933" stop-color="#090000"/><stop offset="0.79933" stop-color="#050000"/><stop offset="0.80000" stop-color="#050000"/><stop offset="0.80000" stop-color="#010000"/><stop offset="0.80067" stop-color="#010000"/><stop offset="0.80067" stop-color="#000000"/><stop offset="0.80133" stop-color="#000000"/><stop offset="0.80133" stop-color="#020000"/><stop offset="0.80200" stop-color="#020000"/><stop offset="0.80200" stop-color="#000000"/><stop offset="0.80267" stop-color="#000000"/><stop offset="0.80267" stop-color="#020000"/><stop offset="0.80333" stop-color="#020000"/><stop offset="0.80333" stop-color="#020000"/><stop offset="0.80400" stop-color="#020000"/><stop offset="0.80400" stop-color="#050000"/><stop offset="0.80467" stop-color="#050000"/><stop offset="0.80467" stop-color="#040000"/><stop offset="0.80533" stop-color="#040000"/><stop offset="0.80533" stop-color="#000000"/><stop offset="0.80600" stop-color="#000000"/><stop offset="0.80600" stop-color="#030000"/><stop offset="0.80667" stop-color="#030000"/><stop offset="0.80667" stop-color="#030000"/><stop offset="0.80733" stop-color="#030000"/><stop offset="0.80733" stop-color="#040000"/><stop offset="0.80800" stop-color="#040000"/><stop offset="0.80800" stop-color="#020000"/><stop offset="0.80867" stop-color="#020000"/><stop offset="0.80867" stop-color="#060000"/><stop offset="0.80933" stop-color="#060000"/><stop offset="0.80933" stop-color="#060000"/><stop offset="0.81000" stop-color="#060000"/><stop offset="0.81000" stop-color="#020000"/><stop offset="0.81067" stop-color="#020000"/><stop offset="0.81067" stop-color="#010000"/><stop offset="0.81133" stop-color="#010000"/><stop offset="0.81133" stop-color="#030000"/><stop offset="0.81200" stop-color="#030000"/><stop offset="0.81200" stop-color="#060000"/><stop offset="0.81267" stop-color="#060000"/><stop offset="0.81267" stop-color="#060000"/><stop offset="0.81333" stop-color="#060000"/><stop offset="0.81333" stop-color="#060000"/><stop offset="0.81400" stop-color="#060000"/><stop offset="0.81400" stop-color="#010000"/><stop offset="0.81467" stop-color="#010000"/><stop offset="0.81467" stop-color="#020000"/><stop offset="0.81533" stop-color="#020000"/><stop offset="0.81533" stop-color="#050000"/><stop offset="0.81600" stop-color="#050000"/><stop offset="0.81600" stop-color="#040000"/><stop offset="0.81667" stop-color="#040000"/><stop offset="0.81667" stop-color="#040000"/><stop offset="0.81733" stop-color="#040000"/><stop offset="0.81733" stop-color="#050000"/><stop offset="0.81800" stop-color="#050000"/><stop offset="0.81800" stop-color="#030000"/><stop offset="0.81867" stop-color="#030000"/><stop offset="0.81867" stop-color="#050000"/><stop offset="0.81933" stop-color="#050000"/><stop offset="0.81933" stop-color="#040000"/><stop offset="0.82000" stop-color="#040000"/><stop offset="0.82000" stop-color="#030000"/><stop offset="0.82067" stop-color="#030000"/><stop offset="0.82067" stop-color="#050000"/><stop offset="0.82133" stop-color="#050000"/><stop offset="0.82133" stop-color="#050000"/><stop offset="0.82200" stop-color="#050000"/><stop offset="0.82200" stop-color="#050000"/><stop offset="0.82267" stop-color="#050000"/><stop offset="0.82267" stop-color="#040000"/><stop offset="0.82333" stop-color="#040000"/><stop offset="0.82333" stop-color="#040000"/><stop offset="0.82400" stop-color="#040000"/><stop offset="0.82400" stop-color="#010000"/><stop offset="0.82467" stop-color="#010000"/><stop offset="0.82467" stop-color="#070000"/><stop offset="0.82533" stop-color="#070000"/><stop offset="0.82533" stop-color="#050000"/><stop offset="0.82600" stop-color="#050000"/><stop offset="0.82600" stop-color="#080000"/><stop offset="0.82667" stop-color="#080000"/><stop offset="0.82667" stop-color="#040000"/><stop offset="0.82733" stop-color="#040000"/><stop offset="0.82733" stop-color="#080000"/><stop offset="0.82800" stop-color="#080000"/><stop offset="0.82800" stop-color="#060000"/><stop offset="0.82867" stop-color="#060000"/><stop offset="0.82867" stop-color="#070000"/><stop offset="0.82933" stop-color="#070000"/><stop offset="0.82933" stop-color="#030000"/><stop offset="0.83000" stop-color="#030000"/><stop offset="0.83000" stop-color="#080000"/><stop offset="0.83067" stop-color="#080000"/><stop offset="0.83067" stop-color="#040000"/><stop offset="0.83133" stop-color="#040000"/><stop offset="0.83133" stop-color="#050000"/><stop offset="0.83200" stop-color="#050000"/><stop offset="0.83200" stop-color="#050000"/><stop offset="0.83267" stop-color="#050000"/><stop offset="0.83267" stop-color="#080000"/><stop offset="0.83333" stop-color="#080000"/><stop offset="0.83333" stop-color="#080000"/><stop offset="0.83400" stop-color="#080000"/><stop offset="0.83400" stop-color="#090000"/><stop offset="0.83467" stop-color="#090000"/><stop offset="0.83467" stop-color="#060000"/><stop offset="0.83533" stop-color="#060000"/><stop offset="0.83533" stop-color="#070000"/><stop offset="0.83600" stop-color="#070000"/><stop offset="0.83600" stop-color="#050000"/><stop offset="0.83667" stop-color="#050000"/><stop offset="0.83667" stop-color="#070000"/><stop offset="0.83733" stop-color="#070000"/><stop offset="0.83733" stop-color="#0a0000"/><stop offset="0.83800" stop-color="#0a0000"/><stop offset="0.83800" stop-color="#080000"/><stop offset="0.83867" stop-color="#080000"/><stop offset="0.83867" stop-color="#090000"/><stop offset="0.83933" stop-color="#090000"/><stop offset="0.83933" stop-color="#0a0000"/><stop offset="0.84000" stop-color="#0a0000"/><stop offset="0.84000" stop-color="#070000"/><stop offset="0.84067" stop-color="#070000"/><stop offset="0.84067" stop-color="#060000"/><stop offset="0.84133" stop-color="#060000"/><stop offset="0.84133" stop-color="#060000"/><stop offset="0.84200" stop-color="#060000"/><stop offset="0.84200" stop-color="#0b0000"/><stop offset="0.84267" stop-color="#0b0000"/><stop offset="0.84267" stop-color="#0b0000"/><stop offset="0.84333" stop-color="#0b0000"/><stop offset="0.84333" stop-color="#080000"/><stop offset="0.84400" stop-color="#080000"/><stop offset="0.84400" stop-color="#060000"/><stop offset="0.84467" stop-color="#060000"/><stop offset="0.84467" stop-color="#0a0000"/><stop offset="0.84533" stop-color="#0a0000"/><stop offset="0.84533" stop-color="#0b0000"/><stop offset="0.84600" stop-color="#0b0000"/><stop offset="0.84600" stop-color="#0d0000"/><stop offset="0.84667" stop-color="#0d0000"/><stop offset="0.84667" stop-color="#080000"/><stop offset="0.84733" stop-color="#080000"/><stop offset="0.84733" stop-color="#0b0000"/><stop offset="0.84800" stop-color="#0b0000"/><stop offset="0.84800" stop-color="#080000"/><stop offset="0.84867" stop-color="#080000"/><stop offset="0.84867" stop-color="#090000"/><stop offset="0.84933" stop-color="#090000"/><stop offset="0.84933" stop-color="#0c0000"/><stop offset="0.85000" stop-color="#0c0000"/><stop offset="0.85000" stop-color="#080000"/><stop offset="0.85067" stop-color="#080000"/><stop offset="0.85067" stop-color="#090000"/><stop offset="0.85133" stop-color="#090000"/><stop offset="0.85133" stop-color="#0d0000"/><stop offset="0.85200" stop-color="#0d0000"/><stop offset="0.85200" stop-color="#090000"/><stop offset="0.85267" stop-color="#090000"/><stop offset="0.85267" stop-color="#090000"/><stop offset="0.85333" stop-color="#090000"/><stop offset="0.85333" stop-color="#090000"/><stop offset="0.85400" stop-color="#090000"/><stop offset="0.85400" stop-color="#0b0000"/><stop offset="0.85467" stop-color="#0b0000"/><stop offset="0.85467" stop-color="#0a0000"/><stop offset="0.85533" stop-color="#0a0000"/><stop offset="0.85533" stop-color="#0c0000"/><stop offset="0.85600" stop-color="#0c0000"/><stop offset="0.85600" stop-color="#0d0000"/><stop offset="0.85667" stop-color="#0d0000"/><stop offset="0.85667" stop-color="#0d0000"/><stop offset="0.85733" stop-color="#0d0000"/><stop offset="0.85733" stop-color="#0d0000"/><stop offset="0.85800" stop-color="#0d0000"/><stop offset="0.85800" stop-color="#0d0000"/><stop offset="0.85867" stop-color="#0d0000"/><stop offset="0.85867" stop-color="#0b0000"/><stop offset="0.85933" stop-color="#0b0000"/><stop offset="0.85933" stop-color="#0d0000"/><stop offset="0.86000" stop-color="#0d0000"/><stop offset="0.86000" stop-color="#0f0000"/><stop offset="0.86067" stop-color="#0f0000"/><stop offset="0.86067" stop-color="#0b0000"/><stop offset="0.86133" stop-color="#0b0000"/><stop offset="0.86133" stop-color="#0d0000"/><stop offset="0.86200" stop-color="#0d0000"/><stop offset="0.86200" stop-color="#120000"/><stop offset="0.86267" stop-color="#120000"/><stop offset="0.86267" stop-color="#0f0000"/><stop offset="0.86333" stop-color="#0f0000"/><stop offset="0.86333" stop-color="#0f0000"/><stop offset="0.86400" stop-color="#0f0000"/><stop offset="0.86400" stop-color="#0f0000"/><stop offset="0.86467" stop-color="#0f0000"/><stop offset="0.86467" stop-color="#100000"/><stop offset="0.86533" stop-color="#100000"/><stop offset="0.86533" stop-color="#100000"/><stop offset="0.86600" stop-color="#100000"/><stop offset="0.86600" stop-color="#140000"/><stop offset="0.86667" stop-color="#140000"/><stop offset="0.86667" stop-color="#0d0000"/><stop offset="0.86733" stop-color="#0d0000"/><stop offset="0.86733" stop-color="#100000"/><stop offset="0.86800" stop-color="#100000"/><stop offset="0.86800" stop-color="#100000"/><stop offset="0.86867" stop-color="#100000"/><stop offset="0.86867" stop-color="#120000"/><stop offset="0.86933" stop-color="#120000"/><stop offset="0.86933" stop-color="#120000"/><stop offset="0.87000" stop-color="#120000"/><stop offset="0.87000" stop-color="#140000"/><stop offset="0.87067" stop-color="#140000"/><stop offset="0.87067" stop-color="#120000"/><stop offset="0.87133" stop-color="#120000"/><stop offset="0.87133" stop-color="#100000"/><stop offset="0.87200" stop-color="#100000"/><stop offset="0.87200" stop-color="#140000"/><stop offset="0.87267" stop-color="#140000"/><stop offset="0.87267" stop-color="#110000"/><stop offset="0.87333" stop-color="#110000"/><stop offset="0.87333" stop-color="#150000"/><stop offset="0.87400" stop-color="#150000"/><stop offset="0.87400" stop-color="#100000"/><stop offset="0.87467" stop-color="#100000"/><stop offset="0.87467" stop-color="#160000"/><stop offset="0.87533" stop-color="#160000"/><stop offset="0.87533" stop-color="#160000"/><stop offset="0.87600" stop-color="#160000"/><stop offset="0.87600" stop-color="#170000"/><stop offset="0.87667" stop-color="#170000"/><stop offset="0.87667" stop-color="#160000"/><stop offset="0.87733" stop-color="#160000"/><stop offset="0.87733" stop-color="#180000"/><stop offset="0.87800" stop-color="#180000"/><stop offset="0.87800" stop-color="#180000"/><stop offset="0.87867" stop-color="#180000"/><stop offset="0.87867" stop-color="#170000"/><stop offset="0.87933" stop-color="#170000"/><stop offset="0.87933" stop-color="#170000"/><stop offset="0.88000" stop-color="#170000"/><stop offset="0.88000" stop-color="#160000"/><stop offset="0.88067" stop-color="#160000"/><stop offset="0.88067" stop-color="#130000"/><stop offset="0.88133" stop-color="#130000"/><stop offset="0.88133" stop-color="#190000"/><stop offset="0.88200" stop-color="#190000"/><stop offset="0.88200" stop-color="#140000"/><stop offset="0.88267" stop-color="#140000"/><stop offset="0.88267" stop-color="#160000"/><stop offset="0.88333" stop-color="#160000"/><stop offset="0.88333" stop-color="#140000"/><stop offset="0.88400" stop-color="#140000"/><stop offset="0.88400" stop-color="#170000"/><stop offset="0.88467" stop-color="#170000"/><stop offset="0.88467" stop-color="#1a0000"/><stop offset="0.88533" stop-color="#1a0000"/><stop offset="0.88533" stop-color="#170000"/><stop offset="0.88600" stop-color="#170000"/><stop offset="0.88600" stop-color="#180000"/><stop offset="0.88667" stop-color="#180000"/><stop offset="0.88667" stop-color="#160000"/><stop offset="0.88733" stop-color="#160000"/><stop offset="0.88733" stop-color="#190000"/><stop offset="0.88800" stop-color="#190000"/><stop offset="0.88800" stop-color="#180000"/><stop offset="0.88867" stop-color="#180000"/><stop offset="0.88867" stop-color="#1a0000"/><stop offset="0.88933" stop-color="#1a0000"/><stop offset="0.88933" stop-color="#1d0000"/><stop offset="0.89000" stop-color="#1d0000"/><stop offset="0.89000" stop-color="#1d0000"/><stop offset="0.89067" stop-color="#1d0000"/><stop offset="0.89067" stop-color="#1c0000"/><stop offset="0.89133" stop-color="#1c0000"/><stop offset="0.89133" stop-color="#190000"/><stop offset="0.89200" stop-color="#190000"/><stop offset="0.89200" stop-color="#1c0000"/><stop offset="0.89267" stop-color="#1c0000"/><stop offset="0.89267" stop-color="#1d0000"/><stop offset="0.89333" stop-color="#1d0000"/><stop offset="0.89333" stop-color="#1e0000"/><stop offset="0.89400" stop-color="#1e0000"/><stop offset="0.89400" stop-color="#1a0000"/><stop offset="0.89467" stop-color="#1a0000"/><stop offset="0.89467" stop-color="#1e0000"/><stop offset="0.89533" stop-color="#1e0000"/><stop offset="0.89533" stop-color="#1c0000"/><stop offset="0.89600" stop-color="#1c0000"/><stop offset="0.89600" stop-color="#200000"/><stop offset="0.89667" stop-color="#200000"/><stop offset="0.89667" stop-color="#1f0000"/><stop offset="0.89733" stop-color="#1f0000"/><stop offset="0.89733" stop-color="#200000"/><stop offset="0.89800" stop-color="#200000"/><stop offset="0.89800" stop-color="#1f0000"/><stop offset="0.89867" stop-color="#1f0000"/><stop offset="0.89867" stop-color="#210000"/><stop offset="0.89933" stop-color="#210000"/><stop offset="0.89933" stop-color="#1e0000"/><stop offset="0.90000" stop-color="#1e0000"/><stop offset="0.90000" stop-color="#1f0000"/><stop offset="0.90067" stop-color="#1f0000"/><stop offset="0.90067" stop-color="#1c0000"/><stop offset="0.90133" stop-color="#1c0000"/><stop offset="0.90133" stop-color="#1f0000"/><stop offset="0.90200" stop-color="#1f0000"/><stop offset="0.90200" stop-color="#1e0000"/><stop offset="0.90267" stop-color="#1e0000"/><stop offset="0.90267" stop-color="#200000"/><stop offset="0.90333" stop-color="#200000"/><stop offset="0.90333" stop-color="#1c0000"/><stop offset="0.90400" stop-color="#1c0000"/><stop offset="0.90400" stop-color="#1e0000"/><stop offset="0.90467" stop-color="#1e0000"/><stop offset="0.90467" stop-color="#1f0000"/><stop offset="0.90533" stop-color="#1f0000"/><stop offset="0.90533" stop-color="#1d0000"/><stop offset="0.90600" stop-color="#1d0000"/><stop offset="0.90600" stop-color="#210000"/><stop offset="0.90667" stop-color="#210000"/><stop offset="0.90667" stop-color="#230000"/><stop offset="0.90733" stop-color="#230000"/><stop offset="0.90733" stop-color="#230000"/><stop offset="0.90800" stop-color="#230000"/><stop offset="0.90800" stop-color="#230000"/><stop offset="0.90867" stop-color="#230000"/><stop offset="0.90867" stop-color="#210000"/><stop offset="0.90933" stop-color="#210000"/><stop offset="0.90933" stop-color="#230000"/><stop offset="0.91000" stop-color="#230000"/><stop offset="0.91000" stop-color="#200000"/><stop offset="0.91067" stop-color="#200000"/><stop offset="0.91067" stop-color="#1f0000"/><stop offset="0.91133" stop-color="#1f0000"/><stop offset="0.91133" stop-color="#220000"/><stop offset="0.91200" stop-color="#220000"/><stop offset="0.91200" stop-color="#240000"/><stop offset="0.91267" stop-color="#240000"/><stop offset="0.91267" stop-color="#220000"/><stop offset="0.91333" stop-color="#220000"/><stop offset="0.91333" stop-color="#230000"/><stop offset="0.91400" stop-color="#230000"/><stop offset="0.91400" stop-color="#210000"/><stop offset="0.91467" stop-color="#210000"/><stop offset="0.91467" stop-color="#220000"/><stop offset="0.91533" stop-color="#220000"/><stop offset="0.91533" stop-color="#200000"/><stop offset="0.91600" stop-color="#200000"/><stop offset="0.91600" stop-color="#240000"/><stop offset="0.91667" stop-color="#240000"/><stop offset="0.91667" stop-color="#220000"/><stop offset="0.91733" stop-color="#220000"/><stop offset="0.91733" stop-color="#210000"/><stop offset="0.91800" stop-color="#210000"/><stop offset="0.91800" stop-color="#250000"/><stop offset="0.91867" stop-color="#250000"/><stop offset="0.91867" stop-color="#230000"/><stop offset="0.91933" stop-color="#230000"/><stop offset="0.91933" stop-color="#220000"/><stop offset="0.92000" stop-color="#220000"/><stop offset="0.92000" stop-color="#210000"/><stop offset="0.92067" stop-color="#210000"/><stop offset="0.92067" stop-color="#250000"/><stop offset="0.92133" stop-color="#250000"/><stop offset="0.92133" stop-color="#230000"/><stop offset="0.92200" stop-color="#230000"/><stop offset="0.92200" stop-color="#250000"/><stop offset="0.92267" stop-color="#250000"/><stop offset="0.92267" stop-color="#260000"/><stop offset="0.92333" stop-color="#260000"/><stop offset="0.92333" stop-color="#260000"/><stop offset="0.92400" stop-color="#260000"/><stop offset="0.92400" stop-color="#270000"/><stop offset="0.92467" stop-color="#270000"/><stop offset="0.92467" stop-color="#260000"/><stop offset="0.92533" stop-color="#260000"/><stop offset="0.92533" stop-color="#270000"/><stop offset="0.92600" stop-color="#270000"/><stop offset="0.92600" stop-color="#250000"/><stop offset="0.92667" stop-color="#250000"/><stop offset="0.92667" stop-color="#240000"/><stop offset="0.92733" stop-color="#240000"/><stop offset="0.92733" stop-color="#250000"/><stop offset="0.92800" stop-color="#250000"/><stop offset="0.92800" stop-color="#260000"/><stop offset="0.92867" stop-color="#260000"/><stop offset="0.92867" stop-color="#240000"/><stop offset="0.92933" stop-color="#240000"/><stop offset="0.92933" stop-color="#240000"/><stop offset="0.93000" stop-color="#240000"/><stop offset="0.93000" stop-color="#220000"/><stop offset="0.93067" stop-color="#220000"/><stop offset="0.93067" stop-color="#230000"/><stop offset="0.93133" stop-color="#230000"/><stop offset="0.93133" stop-color="#240000"/><stop offset="0.93200" stop-color="#240000"/><stop offset="0.93200" stop-color="#230000"/><stop offset="0.93267" stop-color="#230000"/><stop offset="0.93267" stop-color="#250000"/><stop offset="0.93333" stop-color="#250000"/><stop offset="0.93333" stop-color="#320000"/><stop offset="0.93400" stop-color="#320000"/><stop offset="0.93400" stop-color="#330000"/><stop offset="0.93467" stop-color="#330000"/><stop offset="0.93467" stop-color="#320000"/><stop offset="0.93533" stop-color="#320000"/><stop offset="0.93533" stop-color="#310000"/><stop offset="0.93600" stop-color="#310000"/><stop offset="0.93600" stop-color="#330000"/><stop offset="0.93667" stop-color="#330000"/><stop offset="0.93667" stop-color="#320000"/><stop offset="0.93733" stop-color="#320000"/><stop offset="0.93733" stop-color="#330000"/><stop offset="0.93800" stop-color="#330000"/><stop offset="0.93800" stop-color="#360000"/><stop offset="0.93867" stop-color="#360000"/><stop offset="0.93867" stop-color="#360000"/><stop offset="0.93933" stop-color="#360000"/><stop offset="0.93933" stop-color="#340000"/><stop offset="0.94000" stop-color="#340000"/><stop offset="0.94000" stop-color="#330000"/><stop offset="0.94067" stop-color="#330000"/><stop offset="0.94067" stop-color="#350000"/><stop offset="0.94133" stop-color="#350000"/><stop offset="0.94133" stop-color="#350000"/><stop offset="0.94200" stop-color="#350000"/><stop offset="0.94200" stop-color="#360000"/><stop offset="0.94267" stop-color="#360000"/><stop offset="0.94267" stop-color="#360000"/><stop offset="0.94333" stop-color="#360000"/><stop offset="0.94333" stop-color="#330000"/><stop offset="0.94400" stop-color="#330000"/><stop offset="0.94400" stop-color="#370000"/><stop offset="0.94467" stop-color="#370000"/><stop offset="0.94467" stop-color="#330000"/><stop offset="0.94533" stop-color="#330000"/><stop offset="0.94533" stop-color="#330000"/><stop offset="0.94600" stop-color="#330000"/><stop offset="0.94600" stop-color="#320000"/><stop offset="0.94667" stop-color="#320000"/><stop offset="0.94667" stop-color="#350000"/><stop offset="0.94733" stop-color="#350000"/><stop offset="0.94733" stop-color="#360000"/><stop offset="0.94800" stop-color="#360000"/><stop offset="0.94800" stop-color="#330000"/><stop offset="0.94867" stop-color="#330000"/><stop offset="0.94867" stop-color="#350000"/><stop offset="0.94933" stop-color="#350000"/><stop offset="0.94933" stop-color="#320000"/><stop offset="0.95000" stop-color="#320000"/><stop offset="0.95000" stop-color="#380000"/><stop offset="0.95067" stop-color="#380000"/><stop offset="0.95067" stop-color="#380000"/><stop offset="0.95133" stop-color="#380000"/><stop offset="0.95133" stop-color="#340000"/><stop offset="0.95200" stop-color="#340000"/><stop offset="0.95200" stop-color="#340000"/><stop offset="0.95267" stop-color="#340000"/><stop offset="0.95267" stop-color="#350000"/><stop offset="0.95333" stop-color="#350000"/><stop offset="0.95333" stop-color="#350000"/><stop offset="0.95400" stop-color="#350000"/><stop offset="0.95400" stop-color="#380000"/><stop offset="0.95467" stop-color="#380000"/><stop offset="0.95467" stop-color="#390000"/><stop offset="0.95533" stop-color="#390000"/><stop offset="0.95533" stop-color="#360000"/><stop offset="0.95600" stop-color="#360000"/><stop offset="0.95600" stop-color="#380000"/><stop offset="0.95667" stop-color="#380000"/><stop offset="0.95667" stop-color="#340000"/><stop offset="0.95733" stop-color="#340000"/><stop offset="0.95733" stop-color="#330000"/><stop offset="0.95800" stop-color="#330000"/><stop offset="0.95800" stop-color="#370000"/><stop offset="0.95867" stop-color="#370000"/><stop offset="0.95867" stop-color="#390000"/><stop offset="0.95933" stop-color="#390000"/><stop offset="0.95933" stop-color="#350000"/><stop offset="0.96000" stop-color="#350000"/><stop offset="0.96000" stop-color="#3a0000"/><stop offset="0.96067" stop-color="#3a0000"/><stop offset="0.96067" stop-color="#360000"/><stop offset="0.96133" stop-color="#360000"/><stop offset="0.96133" stop-color="#380000"/><stop offset="0.96200" stop-color="#380000"/><stop offset="0.96200" stop-color="#340000"/><stop offset="0.96267" stop-color="#340000"/><stop offset="0.96267" stop-color="#340000"/><stop offset="0.96333" stop-color="#340000"/><stop offset="0.96333" stop-color="#350000"/><stop offset="0.96400" stop-color="#350000"/><stop offset="0.96400" stop-color="#340000"/><stop offset="0.96467" stop-color="#340000"/><stop offset="0.96467" stop-color="#380000"/><stop offset="0.96533" stop-color="#380000"/><stop offset="0.96533" stop-color="#370000"/><stop offset="0.96600" stop-color="#370000"/><stop offset="0.96600" stop-color="#3b0000"/><stop offset="0.96667" stop-color="#3b0000"/><stop offset="0.96667" stop-color="#370000"/><stop offset="0.96733" stop-color="#370000"/><stop offset="0.96733" stop-color="#370000"/><stop offset="0.96800" stop-color="#370000"/><stop offset="0.96800" stop-color="#380000"/><stop offset="0.96867" stop-color="#380000"/><stop offset="0.96867" stop-color="#370000"/><stop offset="0.96933" stop-color="#370000"/><stop offset="0.96933" stop-color="#3a0000"/><stop offset="0.97000" stop-color="#3a0000"/><stop offset="0.97000" stop-color="#3a0000"/><stop offset="0.97067" stop-color="#3a0000"/><stop offset="0.97067" stop-color="#350000"/><stop offset="0.97133" stop-color="#350000"/><stop offset="0.97133" stop-color="#3b0000"/><stop offset="0.97200" stop-color="#3b0000"/><stop offset="0.97200" stop-color="#380000"/><stop offset="0.97267" stop-color="#380000"/><stop offset="0.97267" stop-color="#3b0000"/><stop offset="0.97333" stop-color="#3b0000"/><stop offset="0.97333" stop-color="#380000"/><stop offset="0.97400" stop-color="#380000"/><stop offset="0.97400" stop-color="#390000"/><stop offset="0.97467" stop-color="#390000"/><stop offset="0.97467" stop-color="#380000"/><stop offset="0.97533" stop-color="#380000"/><stop offset="0.97533" stop-color="#370000"/><stop offset="0.97600" stop-color="#370000"/><stop offset="0.97600" stop-color="#3c0000"/><stop offset="0.97667" stop-color="#3c0000"/><stop offset="0.97667" stop-color="#3a0000"/><stop offset="0.97733" stop-color="#3a0000"/><stop offset="0.97733" stop-color="#390000"/><stop offset="0.97800" stop-color="#390000"/><stop offset="0.97800" stop-color="#390000"/><stop offset="0.97867" stop-color="#390000"/><stop offset="0.97867" stop-color="#380000"/><stop offset="0.97933" stop-color="#380000"/><stop offset="0.97933" stop-color="#3a0000"/><stop offset="0.98000" stop-color="#3a0000"/><stop offset="0.98000" stop-color="#380000"/><stop offset="0.98067" stop-color="#380000"/><stop offset="0.98067" stop-color="#380000"/><stop offset="0.98133" stop-color="#380000"/><stop offset="0.98133" stop-color="#3a0000"/><stop offset="0.98200" stop-color="#3a0000"/><stop offset="0.98200" stop-color="#3a0000"/><stop offset="0.98267" stop-color="#3a0000"/><stop offset="0.98267" stop-color="#3c0000"/><stop offset="0.98333" stop-color="#3c0000"/><stop offset="0.98333" stop-color="#380000"/><stop offset="0.98400" stop-color="#380000"/><stop offset="0.98400" stop-color="#370000"/><stop offset="0.98467" stop-color="#370000"/><stop offset="0.98467" stop-color="#3d0000"/><stop offset="0.98533" stop-color="#3d0000"/><stop offset="0.98533" stop-color="#3a0000"/><stop offset="0.98600" stop-color="#3a0000"/><stop offset="0.98600" stop-color="#380000"/><stop offset="0.98667" stop-color="#380000"/><stop offset="0.98667" stop-color="#3c0000"/><stop offset="0.98733" stop-color="#3c0000"/><stop offset="0.98733" stop-color="#3b0000"/><stop offset="0.98800" stop-color="#3b0000"/><stop offset="0.98800" stop-color="#370000"/><stop offset="0.98867" stop-color="#370000"/><stop offset="0.98867" stop-color="#3c0000"/><stop offset="0.98933" stop-color="#3c0000"/><stop offset="0.98933" stop-color="#3c0000"/><stop offset="0.99000" stop-color="#3c0000"/><stop offset="0.99000" stop-color="#3e0000"/><stop offset="0.99067" stop-color="#3e0000"/><stop offset="0.99067" stop-color="#3b0000"/><stop offset="0.99133" stop-color="#3b0000"/><stop offset="0.99133" stop-color="#3a0000"/><stop offset="0.99200" stop-color="#3a0000"/><stop offset="0.99200" stop-color="#3b0000"/><stop offset="0.99267" stop-color="#3b0000"/><stop offset="0.99267" stop-color="#3e0000"/><stop offset="0.99333" stop-color="#3e0000"/><stop offset="0.99333" stop-color="#3a0000"/><stop offset="0.99400" stop-color="#3a0000"/><stop offset="0.99400" stop-color="#3d0000"/><stop offset="0.99467" stop-color="#3d0000"/><stop offset="0.99467" stop-color="#380000"/><stop offset="0.99533" stop-color="#380000"/><stop offset="0.99533" stop-color="#390000"/><stop offset="0.99600" stop-color="#390000"/><stop offset="0.99600" stop-color="#3b0000"/><stop offset="0.99667" stop-color="#3b0000"/><stop offset="0.99667" stop-color="#3b0000"/><stop offset="0.99733" stop-color="#3b0000"/><stop offset="0.99733" stop-color="#3b0000"/><stop offset="0.99800" stop-color="#3b0000"/><stop offset="0.99800" stop-color="#380000"/><stop offset="0.99867" stop-color="#380000"/><stop offset="0.99867" stop-color="#3d0000"/><stop offset="0.99933" stop-color="#3d0000"/><stop offset="0.99933" stop-color="#3d0000"/><stop offset="1.00000" stop-color="#3d0000"/><stop offset="1.00000" stop-color="#3e0000"/><stop offset="1.00000" stop-color="#3e0000"/></linearGradient>
<filter id="nf" x="0" y="0" width="750" height="726" filterUnits="userSpaceOnUse" color-interpolation-filters="sRGB">
<feTurbulence type="fractalNoise" baseFrequency="0.9 0.31" numOctaves="3" seed="7"/>
<feComponentTransfer><feFuncR type="table" tableValues="0.0280 0.0286 0.0292 0.0298 0.0304 0.0310 0.0316 0.0322 0.0329 0.0335 0.0342 0.0349 0.0356 0.0363 0.0370 0.0378 0.0385 0.0393 0.0401 0.0409 0.0417 0.0426 0.0434 0.0443 0.0452 0.0461 0.0470 0.0480 0.0489 0.0499 0.0509 0.0519 0.0530 0.0540 0.0551 0.0562 0.0573 0.0585 0.0597 0.0609 0.0621 0.0633 0.0646 0.0659 0.0672 0.0686 0.0699 0.0713 0.0728 0.0742 0.0757 0.0772 0.0788 0.0804 0.0820 0.0836 0.0853 0.0870 0.0888 0.0905 0.0924 0.0942 0.0961 0.0980 0.1000 0.1020 0.1041 0.1061 0.1083 0.1104 0.1127 0.1149 0.1172 0.1196 0.1220 0.1244 0.1269 0.1295 0.1321 0.1347 0.1374 0.1402 0.1430 0.1458 0.1488 0.1518 0.1548 0.1579 0.1611 0.1643 0.1676 0.1710 0.1744 0.1779 0.1815 0.1851 0.1888 0.1926 0.1965 0.2004 0.2044 0.2085 0.2127 0.2170 0.2213 0.2258 0.2303 0.2349 0.2396 0.2444 0.2493 0.2543 0.2594 0.2647 0.2700 0.2754 0.2809 0.2865 0.2923 0.2981 0.3041 0.3102 0.3165 0.3228 0.3293 0.3359 0.3426 0.3495 0.3565"/></feComponentTransfer>
<feColorMatrix type="matrix" values="0 0 0 0 0  1 0 0 0 0  0 0 0 0 0  0 0 0 0 1"/>
</filter>
<pattern id="np" x="0" y="0" width="750" height="726" patternUnits="userSpaceOnUse"><rect x="0" y="0" width="750" height="726" fill="#000" filter="url(#nf)"/></pattern>
<filter id="wf" x="0" y="0" width="3000" height="2903" filterUnits="userSpaceOnUse" color-interpolation-filters="sRGB">
<feColorMatrix type="matrix" values="1 0.9969 0 0 -0.10428  1 0.9969 0 0 -0.10428  1 0.9969 0 0 -0.10428  0 0 0 0 1"/>
<feComponentTransfer>
<feFuncR type="table" tableValues="0.0000 0.0000 0.0000 0.0000 0.0000 0.0000 0.0000 0.0000 0.0000 0.0000 0.0000 0.0000 0.0000 0.0000 0.0000 0.0000 0.0000 0.0000 0.0000 0.0000 0.0000 0.0000 0.0000 0.0000 0.0000 0.0000 0.0000 0.0000 0.0000 0.0000 0.0000 0.0000 0.0000 0.0000 0.0000 0.0000 0.0000 0.0000 0.0000 0.0000 0.0000 0.0000 0.0000 0.0000 0.0000 0.0000 0.0000 0.0000 0.0000 0.0000 0.0000 0.0000 0.0000 0.0000 0.0000 0.0173 0.0519 0.0865 0.1212 0.1558 0.1904 0.2250 0.2596 0.2943 0.3289 0.3635 0.3981 0.4327 0.4673 0.5020 0.5375 0.5731 0.6087 0.6443 0.6798 0.7154 0.7510 0.7866 0.8221 0.8577 0.8933 0.9289 0.9644 1.0000 1.0000 1.0000 1.0000 1.0000 1.0000 1.0000 1.0000 1.0000 1.0000 1.0000 1.0000 1.0000 1.0000 1.0000 1.0000 1.0000 1.0000"/>
<feFuncG type="table" tableValues="0.0000 0.0000 0.0000 0.0000 0.0000 0.0000 0.0000 0.0000 0.0000 0.0000 0.0000 0.0000 0.0000 0.0000 0.0000 0.0000 0.0000 0.0000 0.0000 0.0000 0.0000 0.0000 0.0000 0.0000 0.0000 0.0000 0.0000 0.0000 0.0000 0.0000 0.0000 0.0000 0.0000 0.0000 0.0000 0.0000 0.0000 0.0000 0.0000 0.0000 0.0000 0.0346 0.0692 0.1039 0.1385 0.1731 0.2077 0.2423 0.2769 0.3116 0.3462 0.3808 0.4154 0.4500 0.4847 0.5020 0.5020 0.5020 0.5020 0.5020 0.5020 0.5020 0.5020 0.5020 0.5020 0.5020 0.5020 0.5020 0.5020 0.5020 0.5020 0.5020 0.5020 0.5020 0.5020 0.5020 0.5020 0.5020 0.5020 0.5020 0.5020 0.5020 0.5020 0.5020 0.5375 0.5731 0.6087 0.6443 0.6798 0.7154 0.7510 0.7866 0.8221 0.8577 0.8933 0.9289 0.9644 1.0000 1.0000 1.0000 1.0000"/>
<feFuncB type="table" tableValues="0.0000 0.0065 0.0131 0.0196 0.0261 0.0327 0.0392 0.0458 0.0523 0.0588 0.0654 0.0719 0.0784 0.0850 0.0915 0.0980 0.1046 0.1111 0.1176 0.1242 0.1307 0.1373 0.1438 0.1503 0.1569 0.1634 0.1699 0.1765 0.2048 0.2332 0.2615 0.2899 0.3183 0.3466 0.3750 0.4033 0.4317 0.4600 0.4884 0.5167 0.5451 0.5421 0.5391 0.5362 0.5332 0.5302 0.5272 0.5243 0.5213 0.5183 0.5153 0.5124 0.5094 0.5064 0.5034 0.4847 0.4500 0.4154 0.3808 0.3462 0.3116 0.2769 0.2423 0.2077 0.1731 0.1385 0.1039 0.0692 0.0346 0.0000 0.0000 0.0000 0.0000 0.0000 0.0000 0.0000 0.0000 0.0000 0.0000 0.0000 0.0000 0.0000 0.0000 0.0000 0.0714 0.1429 0.2143 0.2857 0.3571 0.4286 0.5000 0.5714 0.6429 0.7143 0.7857 0.8571 0.9286 1.0000 1.0000 1.0000 1.0000"/>
</feComponentTransfer>
</filter>
</defs>
<rect x="0" y="0" width="3000" height="2903" fill="url(#gc)"/>
<g filter="url(#wf)"><rect x="0" y="0" width="3000" height="2903" fill="url(#np)"/>
<g style="mix-blend-mode:screen"><rect x="0" y="0" width="3000" height="2903" fill="url(#gv)"/>
<rect x="50" y="0" width="1" height="2903" fill="#190000"/>
<rect x="100" y="0" width="1" height="2903" fill="#1b0000"/>
<rect x="200" y="0" width="1" height="2903" fill="#1b0000"/>
<rect x="250" y="0" width="1" height="2903" fill="#1b0000"/>
<rect x="300" y="0" width="1" height="2903" fill="#1b0000"/>
<rect x="350" y="0" width="1" height="2903" fill="#190000"/>
<rect x="450" y="0" width="1" height="2903" fill="#1b0000"/>
<rect x="500" y="0" width="1" height="2903" fill="#1d0000"/>
<rect x="550" y="0" width="1" height="2903" fill="#1c0000"/>
<rect x="600" y="0" width="1" height="2903" fill="#1a0000"/>
<rect x="650" y="0" width="1" height="2903" fill="#130000"/>
<rect x="700" y="0" width="1" height="2903" fill="#140000"/>
<rect x="850" y="0" width="1" height="2903" fill="#080000"/>
<rect x="950" y="0" width="1" height="2903" fill="#100000"/>
<rect x="1000" y="0" width="1" height="2903" fill="#180000"/>
<rect x="1050" y="0" width="1" height="2903" fill="#260000"/>
<rect x="1100" y="0" width="1" height="2903" fill="#480000"/>
<rect x="1150" y="0" width="1" height="2903" fill="#5f0000"/>
<rect x="1950" y="0" width="1" height="2903" fill="#560000"/>
<rect x="2050" y="0" width="1" height="2903" fill="#4d0000"/>
<rect x="2100" y="0" width="1" height="2903" fill="#410000"/>
<rect x="2200" y="0" width="1" height="2903" fill="#320000"/>
<rect x="2350" y="0" width="1" height="2903" fill="#100000"/>
<rect x="2450" y="0" width="1" height="2903" fill="#080000"/>
<rect x="2500" y="0" width="1" height="2903" fill="#0f0000"/>
<rect x="2550" y="0" width="1" height="2903" fill="#120000"/>
<rect x="2600" y="0" width="1" height="2903" fill="#190000"/>
<rect x="2700" y="0" width="1" height="2903" fill="#230000"/>
<rect x="2750" y="0" width="1" height="2903" fill="#260000"/>
<rect x="2850" y="0" width="1" height="2903" fill="#3b0000"/>
<rect x="2900" y="0" width="1" height="2903" fill="#3c0000"/>
<rect x="2950" y="0" width="1" height="2903" fill="#3d0000"/>
<rect x="0" y="0" width="1" height="2903" fill="#660000"/>
<rect x="400" y="0" width="1" height="2903" fill="#330000"/>
<rect x="799" y="0" width="1" height="2903" fill="#790000"/>
<rect x="800" y="0" width="1" height="2903" fill="#6e0000"/>
<rect x="900" y="0" width="1" height="2903" fill="#1f0000"/>
<rect x="1040" y="0" width="1" height="2903" fill="#4c0000"/>
<rect x="1599" y="0" width="2" height="2903" fill="#960000"/>
<rect x="1999" y="0" width="2" height="2903" fill="#8f0000"/>
<rect x="2299" y="0" width="2" height="2903" fill="#400000"/>
<rect x="2399" y="0" width="2" height="2903" fill="#800000"/>
<rect x="2799" y="0" width="2" height="2903" fill="#540000"/>
</g></g>
<g shape-rendering="crispEdges" opacity="0.75">
<rect x="2075.0" y="1003.0" width="3" height="2" fill="#1448b8" opacity="1.00"/>
<rect x="2079.0" y="1003.0" width="2" height="2" fill="#1448b8" opacity="1.00"/>
<rect x="2082.0" y="1003.0" width="2" height="2" fill="#0a1a9a" opacity="1.00"/>
<rect x="2084.0" y="1003.0" width="2" height="2" fill="#0f7fb0" opacity="1.00"/>
<rect x="2090.0" y="1003.0" width="3" height="2" fill="#0f7fb0" opacity="1.00"/>
<rect x="2094.0" y="1003.0" width="2" height="2" fill="#081890" opacity="1.00"/>
<rect x="2098.0" y="1003.0" width="3" height="2" fill="#1090a8" opacity="1.00"/>
<rect x="2102.0" y="1003.0" width="4" height="2" fill="#0f7fb0" opacity="1.00"/>
<rect x="2108.0" y="1003.0" width="2" height="2" fill="#0c28a8" opacity="1.00"/>
<rect x="2124.0" y="1003.0" width="3" height="2" fill="#0870b0" opacity="1.00"/>
<rect x="2134.0" y="1003.0" width="2" height="2" fill="#0870b0" opacity="1.00"/>
<rect x="2138.0" y="1003.0" width="4" height="2" fill="#0a1a9a" opacity="1.00"/>
<rect x="2144.0" y="1003.0" width="4" height="2" fill="#18a0a0" opacity="1.00"/>
<rect x="2155.0" y="1003.0" width="2" height="2" fill="#1448b8" opacity="1.00"/>
<rect x="2162.0" y="1003.0" width="3" height="2" fill="#081890" opacity="0.60"/>
<rect x="2166.0" y="1003.0" width="1" height="2" fill="#1030b0" opacity="0.60"/>
<rect x="2019.0" y="1003.0" width="2" height="2" fill="#1090a8"/>
<rect x="2120.0" y="1015.0" width="2" height="2" fill="#1030b0"/>
<rect x="2016.0" y="1019.0" width="3" height="2" fill="#d8b020"/>
<rect x="2019.0" y="1019.0" width="3" height="2" fill="#f08a10"/>
<rect x="2022.0" y="1019.0" width="3" height="2" fill="#c8b828"/>
<rect x="2258.0" y="1009.0" width="3" height="2" fill="#1030b0"/>
<rect x="2257.0" y="1021.0" width="3" height="2" fill="#c8c020"/>
<rect x="2260.0" y="1021.0" width="2" height="2" fill="#f09a18"/>
<rect x="2262.0" y="1021.0" width="2" height="2" fill="#b0b830"/>
<rect x="2370.0" y="1015.0" width="2" height="2" fill="#0c28a8" opacity="1.00"/>
<rect x="2372.0" y="1015.0" width="2" height="2" fill="#081890" opacity="1.00"/>
<rect x="2377.0" y="1015.0" width="2" height="2" fill="#081890" opacity="1.00"/>
<rect x="2380.0" y="1015.0" width="2" height="2" fill="#18a0a0" opacity="1.00"/>
<rect x="2384.0" y="1015.0" width="2" height="2" fill="#1030b0" opacity="1.00"/>
<rect x="2387.0" y="1015.0" width="4" height="2" fill="#1030b0" opacity="1.00"/>
<rect x="2395.0" y="1015.0" width="2" height="2" fill="#0a1a9a" opacity="1.00"/>
<rect x="2398.0" y="1015.0" width="1" height="2" fill="#1030b0" opacity="1.00"/>
<rect x="2452.0" y="1015.0" width="2" height="2" fill="#1448b8" opacity="0.70"/>
<rect x="2464.0" y="1015.0" width="2" height="2" fill="#081890" opacity="0.70"/>
<rect x="2473.0" y="1015.0" width="1" height="2" fill="#0c28a8" opacity="0.70"/>
<rect x="2475.0" y="1015.0" width="2" height="2" fill="#0a1a9a" opacity="0.70"/>
<rect x="2484.0" y="1015.0" width="1" height="2" fill="#081890" opacity="0.70"/>
<rect x="2486.0" y="1015.0" width="4" height="2" fill="#081890" opacity="0.70"/>
<rect x="2492.0" y="1015.0" width="1" height="2" fill="#1030b0" opacity="0.70"/>
<rect x="2494.0" y="1015.0" width="2" height="2" fill="#1448b8" opacity="0.70"/>
<rect x="2497.0" y="1015.0" width="1" height="2" fill="#0a1a9a" opacity="0.70"/>
<rect x="2457.0" y="1015.0" width="2" height="2" fill="#0f7fb0"/>
<rect x="2799.0" y="1001.0" width="2" height="2" fill="#1090a8"/>
<rect x="2797.0" y="1013.0" width="6" height="2" fill="#18a0a0"/>
<rect x="2799.0" y="1015.0" width="2" height="3" fill="#1090a8"/>
<rect x="2100.0" y="1171.0" width="3" height="2" fill="#18a0a0" opacity="1.00"/>
<rect x="2104.0" y="1171.0" width="2" height="2" fill="#0c28a8" opacity="1.00"/>
<rect x="2108.0" y="1171.0" width="2" height="2" fill="#1030b0" opacity="1.00"/>
<rect x="2110.0" y="1171.0" width="2" height="2" fill="#0a1a9a" opacity="1.00"/>
<rect x="2112.0" y="1171.0" width="2" height="2" fill="#1448b8" opacity="1.00"/>
<rect x="2114.0" y="1171.0" width="2" height="2" fill="#081890" opacity="1.00"/>
<rect x="2119.0" y="1171.0" width="2" height="2" fill="#0a1a9a" opacity="1.00"/>
<rect x="2123.0" y="1171.0" width="3" height="2" fill="#081890" opacity="1.00"/>
<rect x="2126.0" y="1171.0" width="2" height="2" fill="#081890" opacity="1.00"/>
<rect x="2130.0" y="1171.0" width="2" height="2" fill="#081890" opacity="1.00"/>
<rect x="2142.0" y="1171.0" width="2" height="2" fill="#0c28a8" opacity="1.00"/>
<rect x="2144.0" y="1171.0" width="4" height="2" fill="#1448b8" opacity="1.00"/>
<rect x="2153.0" y="1171.0" width="3" height="2" fill="#0f7fb0" opacity="1.00"/>
<rect x="2157.0" y="1171.0" width="3" height="2" fill="#0a1a9a" opacity="1.00"/>
<rect x="2162.0" y="1171.0" width="2" height="2" fill="#0c28a8" opacity="1.00"/>
<rect x="2166.0" y="1171.0" width="1" height="2" fill="#081890" opacity="1.00"/>
<rect x="2175.0" y="1171.0" width="2" height="2" fill="#0c28a8" opacity="1.00"/>
<rect x="2179.0" y="1171.0" width="3" height="2" fill="#0a1a9a" opacity="1.00"/>
<rect x="2183.0" y="1171.0" width="3" height="2" fill="#081890" opacity="1.00"/>
<rect x="2192.0" y="1171.0" width="4" height="2" fill="#0870b0" opacity="1.00"/>
<rect x="2197.0" y="1171.0" width="4" height="2" fill="#1448b8" opacity="1.00"/>
<rect x="2201.0" y="1171.0" width="4" height="2" fill="#0c28a8" opacity="1.00"/>
<rect x="2205.0" y="1171.0" width="2" height="2" fill="#0c28a8" opacity="1.00"/>
<rect x="2212.0" y="1171.0" width="2" height="2" fill="#0a1a9a" opacity="1.00"/>
<rect x="2214.0" y="1171.0" width="3" height="2" fill="#0f7fb0" opacity="1.00"/>
<rect x="2227.0" y="1171.0" width="2" height="2" fill="#0a1a9a" opacity="1.00"/>
<rect x="2230.0" y="1171.0" width="1" height="2" fill="#081890" opacity="1.00"/>
<rect x="2232.0" y="1171.0" width="4" height="2" fill="#081890" opacity="1.00"/>
<rect x="2239.0" y="1171.0" width="2" height="2" fill="#0c28a8" opacity="1.00"/>
<rect x="2242.0" y="1171.0" width="1" height="2" fill="#0c28a8" opacity="1.00"/>
<rect x="2250.0" y="1171.0" width="2" height="2" fill="#0870b0" opacity="1.00"/>
<rect x="2253.0" y="1171.0" width="2" height="2" fill="#0a1a9a" opacity="1.00"/>
<rect x="2258.0" y="1171.0" width="3" height="2" fill="#0a1a9a" opacity="1.00"/>
<rect x="2263.0" y="1171.0" width="1" height="2" fill="#1448b8" opacity="1.00"/>
<rect x="2266.0" y="1171.0" width="1" height="2" fill="#0c28a8" opacity="1.00"/>
<rect x="2280.0" y="1171.0" width="1" height="2" fill="#081890" opacity="1.00"/>
<rect x="2281.0" y="1171.0" width="4" height="2" fill="#0f7fb0" opacity="1.00"/>
<rect x="2286.0" y="1171.0" width="1" height="2" fill="#0a1a9a" opacity="1.00"/>
<rect x="2289.0" y="1171.0" width="3" height="2" fill="#0a1a9a" opacity="1.00"/>
<rect x="2294.0" y="1171.0" width="3" height="2" fill="#1090a8" opacity="1.00"/>
<rect x="2020.0" y="1173.0" width="2" height="2" fill="#0f7fb0"/>
<rect x="2019.0" y="1179.0" width="2" height="3" fill="#1090a8"/>
<rect x="2020.0" y="1182.0" width="2" height="2" fill="#18a0a0"/>
<rect x="2017.0" y="1194.0" width="7" height="2" fill="#e09818"/>
<rect x="2019.0" y="1193.0" width="5" height="1" fill="#c0c030"/>
<rect x="2017.0" y="1196.0" width="2" height="2" fill="#f08a10"/>
<rect x="2019.0" y="1196.0" width="4" height="2" fill="#1448b8"/>
<rect x="2017.0" y="1200.0" width="2" height="2" fill="#f09010"/>
<rect x="2020.0" y="1200.0" width="4" height="2" fill="#a8b830"/>
<rect x="2017.0" y="1204.0" width="6" height="2" fill="#b0b428"/>
<rect x="2143.0" y="1187.0" width="4" height="2" fill="#081890" opacity="0.60"/>
<rect x="2147.0" y="1187.0" width="1" height="2" fill="#1030b0" opacity="0.60"/>
<rect x="2155.0" y="1187.0" width="2" height="2" fill="#0c28a8" opacity="0.60"/>
<rect x="2200.0" y="1189.0" width="4" height="2" fill="#0a1a9a" opacity="0.60"/>
<rect x="2206.0" y="1189.0" width="4" height="2" fill="#081890" opacity="0.60"/>
<rect x="2212.0" y="1189.0" width="1" height="2" fill="#1448b8" opacity="0.60"/>
<rect x="2214.0" y="1189.0" width="1" height="2" fill="#1030b0" opacity="0.60"/>
<rect x="2216.0" y="1189.0" width="2" height="2" fill="#081890" opacity="0.60"/>
<rect x="2218.0" y="1189.0" width="2" height="2" fill="#0c28a8" opacity="0.60"/>
<rect x="2228.0" y="1189.0" width="3" height="2" fill="#1030b0" opacity="0.60"/>
<rect x="2313.0" y="1189.0" width="4" height="2" fill="#1448b8" opacity="0.35"/>
<rect x="2340.0" y="1189.0" width="3" height="2" fill="#0a1a9a" opacity="0.35"/>
<rect x="2344.0" y="1189.0" width="4" height="2" fill="#1448b8" opacity="0.35"/>
<rect x="2348.0" y="1189.0" width="3" height="2" fill="#0c28a8" opacity="0.35"/>
<rect x="2362.0" y="1189.0" width="1" height="2" fill="#1448b8" opacity="0.35"/>
<rect x="2378.0" y="1189.0" width="4" height="2" fill="#0a1a9a" opacity="0.35"/>
<rect x="2383.0" y="1189.0" width="4" height="2" fill="#1030b0" opacity="0.35"/>
<rect x="2388.0" y="1189.0" width="1" height="2" fill="#0a1a9a" opacity="0.35"/>
<rect x="2260.0" y="1176.0" width="1" height="3" fill="#1090a8"/>
<rect x="2258.0" y="1183.0" width="3" height="3" fill="#0f7fb0"/>
<rect x="2261.0" y="1184.0" width="2" height="2" fill="#1448b8"/>
<rect x="2280.0" y="1183.0" width="1" height="2" fill="#1090a8"/>
<rect x="2258.0" y="1192.0" width="2" height="2" fill="#1030b0"/>
<rect x="2261.0" y="1192.0" width="2" height="2" fill="#0c28a8"/>
<rect x="2258.0" y="1199.0" width="5" height="3" fill="#28a0c0"/>
<rect x="2259.0" y="1200.0" width="2" height="2" fill="#107090"/>
<rect x="2799.0" y="1183.0" width="1" height="2" fill="#1090a8"/>
<rect x="2798.0" y="1201.0" width="3" height="2" fill="#90b040"/>
<rect x="2800.0" y="1203.0" width="2" height="2" fill="#18a0a0"/>
<rect x="2200.0" y="1224.0" width="1" height="2" fill="#0870b0" opacity="1.00"/>
<rect x="2202.0" y="1224.0" width="1" height="2" fill="#0a1a9a" opacity="1.00"/>
<rect x="2204.0" y="1224.0" width="4" height="2" fill="#1030b0" opacity="1.00"/>
<rect x="2210.0" y="1224.0" width="1" height="2" fill="#0a1a9a" opacity="1.00"/>
<rect x="2215.0" y="1224.0" width="4" height="2" fill="#1030b0" opacity="0.70"/>
<rect x="2350.0" y="1224.0" width="2" height="2" fill="#0c28a8" opacity="0.90"/>
<rect x="2354.0" y="1224.0" width="2" height="2" fill="#1448b8" opacity="0.90"/>
<rect x="2356.0" y="1224.0" width="4" height="2" fill="#0a1a9a" opacity="0.90"/>
<rect x="2362.0" y="1224.0" width="4" height="2" fill="#081890" opacity="0.90"/>
<rect x="2368.0" y="1224.0" width="3" height="2" fill="#1030b0" opacity="0.90"/>
<rect x="2371.0" y="1224.0" width="4" height="2" fill="#081890" opacity="0.90"/>
<rect x="2376.0" y="1224.0" width="2" height="2" fill="#1030b0" opacity="0.90"/>
<rect x="2378.0" y="1224.0" width="4" height="2" fill="#0c28a8" opacity="0.90"/>
<rect x="2383.0" y="1224.0" width="1" height="2" fill="#1448b8" opacity="0.90"/>
<rect x="2384.0" y="1224.0" width="4" height="2" fill="#081890" opacity="0.90"/>
<rect x="2389.0" y="1224.0" width="1" height="2" fill="#0c28a8" opacity="0.90"/>
<rect x="2396.0" y="1224.0" width="2" height="2" fill="#0c28a8" opacity="0.90"/>
<rect x="2017.0" y="1246.0" width="1.5" height="2" fill="#18a0a0"/>
<rect x="2019.0" y="1246.0" width="1.5" height="2" fill="#0f7fb0"/>
<rect x="2021.0" y="1246.0" width="1.5" height="2" fill="#0f7fb0"/>
<rect x="2060.0" y="1246.0" width="1.5" height="2" fill="#18a0a0"/>
<rect x="2070.0" y="1246.0" width="1.5" height="2" fill="#f09818"/>
<rect x="2080.0" y="1246.0" width="1.5" height="2" fill="#f0b070"/>
<rect x="2090.0" y="1246.0" width="1.5" height="2" fill="#ffffff"/>
<rect x="2085.0" y="1248.0" width="3" height="2" fill="#1030b0" opacity="1.00"/>
<rect x="2095.0" y="1248.0" width="2" height="2" fill="#1448b8" opacity="1.00"/>
<rect x="2150.0" y="1246.0" width="1.5" height="2" fill="#ffffff"/>
<rect x="2160.0" y="1246.0" width="1.5" height="2" fill="#f09818"/>
<rect x="2170.0" y="1246.0" width="1.5" height="2" fill="#f0a030"/>
<rect x="2180.0" y="1246.0" width="1.5" height="2" fill="#50a040"/>
<rect x="2150.0" y="1248.0" width="4" height="2" fill="#081890" opacity="1.00"/>
<rect x="2154.0" y="1248.0" width="1" height="2" fill="#0c28a8" opacity="1.00"/>
<rect x="2159.0" y="1248.0" width="1" height="2" fill="#1030b0" opacity="1.00"/>
<rect x="2161.0" y="1248.0" width="2" height="2" fill="#0f7fb0" opacity="1.00"/>
<rect x="2167.0" y="1248.0" width="2" height="2" fill="#0c28a8" opacity="1.00"/>
<rect x="2326.0" y="1247.0" width="4" height="2" fill="#1448b8" opacity="0.50"/>
<rect x="2332.0" y="1247.0" width="2" height="2" fill="#0c28a8" opacity="0.50"/>
<rect x="2336.0" y="1247.0" width="4" height="2" fill="#081890" opacity="0.50"/>
<rect x="2341.0" y="1247.0" width="1" height="2" fill="#1030b0" opacity="0.50"/>
<rect x="2344.0" y="1247.0" width="2" height="2" fill="#0c28a8" opacity="0.50"/>
<rect x="2346.0" y="1247.0" width="2" height="2" fill="#1448b8" opacity="0.50"/>
<rect x="2019.0" y="1261.0" width="1.5" height="2" fill="#1090a8"/>
<rect x="2142.0" y="1269.0" width="2" height="2" fill="#1448b8" opacity="0.60"/>
<rect x="2145.0" y="1269.0" width="4" height="2" fill="#1448b8" opacity="0.60"/>
<rect x="2452.0" y="1248.0" width="3" height="2" fill="#1448b8" opacity="0.60"/>
<rect x="2460.0" y="1248.0" width="4" height="2" fill="#0a1a9a" opacity="0.60"/>
<rect x="2466.0" y="1248.0" width="1" height="2" fill="#081890" opacity="0.60"/>
<rect x="2474.0" y="1248.0" width="2" height="2" fill="#1030b0" opacity="0.60"/>
<rect x="2478.0" y="1248.0" width="4" height="2" fill="#1448b8" opacity="0.60"/>
<rect x="2483.0" y="1248.0" width="2" height="2" fill="#081890" opacity="0.60"/>
<rect x="2489.0" y="1248.0" width="1" height="2" fill="#1030b0" opacity="0.60"/>
<rect x="2500.0" y="1248.0" width="1" height="2" fill="#0a1a9a" opacity="0.70"/>
<rect x="2512.0" y="1248.0" width="1.5" height="2" fill="#0f7fb0"/>
<rect x="2524.0" y="1248.0" width="1" height="2" fill="#0a1a9a" opacity="0.60"/>
<rect x="2528.0" y="1248.0" width="1.5" height="2" fill="#0f7fb0"/>
<rect x="2600.0" y="1248.0" width="3" height="2" fill="#1448b8" opacity="1.00"/>
<rect x="2603.0" y="1248.0" width="1" height="2" fill="#0c28a8" opacity="1.00"/>
<rect x="2606.0" y="1248.0" width="2" height="2" fill="#0870b0" opacity="1.00"/>
<rect x="2610.0" y="1248.0" width="2" height="2" fill="#1030b0" opacity="1.00"/>
<rect x="2614.0" y="1248.0" width="2" height="2" fill="#0f7fb0" opacity="1.00"/>
<rect x="2616.0" y="1248.0" width="1" height="2" fill="#1448b8" opacity="1.00"/>
<rect x="2611.0" y="1248.0" width="2" height="2" fill="#1090a8"/>
<rect x="2626.0" y="1248.0" width="1" height="2" fill="#1030b0" opacity="1.00"/>
<rect x="2628.0" y="1248.0" width="2" height="2" fill="#081890" opacity="1.00"/>
<rect x="2631.0" y="1248.0" width="4" height="2" fill="#1448b8" opacity="1.00"/>
<rect x="2640.0" y="1248.0" width="2" height="2" fill="#0a1a9a" opacity="1.00"/>
<rect x="2643.0" y="1248.0" width="3" height="2" fill="#081890" opacity="1.00"/>
<rect x="2650.0" y="1248.0" width="2" height="2" fill="#1030b0" opacity="1.00"/>
<rect x="2627.0" y="1248.0" width="2" height="2" fill="#18a0a0"/>
<rect x="2450.0" y="1269.0" width="1" height="2" fill="#0a1a9a" opacity="1.00"/>
<rect x="2452.0" y="1269.0" width="2" height="2" fill="#1090a8" opacity="1.00"/>
<rect x="2455.0" y="1269.0" width="3" height="2" fill="#081890" opacity="1.00"/>
<rect x="2464.0" y="1269.0" width="1" height="2" fill="#0870b0" opacity="1.00"/>
<rect x="2466.0" y="1269.0" width="1" height="2" fill="#0a1a9a" opacity="1.00"/>
<rect x="2475.0" y="1269.0" width="3" height="2" fill="#0f7fb0" opacity="1.00"/>
<rect x="2478.0" y="1269.0" width="2" height="2" fill="#081890" opacity="1.00"/>
<rect x="2482.0" y="1269.0" width="1" height="2" fill="#1030b0" opacity="1.00"/>
<rect x="2488.0" y="1269.0" width="1" height="2" fill="#1030b0" opacity="1.00"/>
<rect x="2489.0" y="1269.0" width="3" height="2" fill="#1030b0" opacity="1.00"/>
<rect x="2494.0" y="1269.0" width="4" height="2" fill="#1448b8" opacity="1.00"/>
<rect x="2509.0" y="1269.0" width="3" height="2" fill="#0c28a8" opacity="0.60"/>
<rect x="2529.0" y="1269.0" width="2" height="2" fill="#1448b8" opacity="1.00"/>
<rect x="2532.0" y="1269.0" width="4" height="2" fill="#081890" opacity="1.00"/>
<rect x="2537.0" y="1269.0" width="2" height="2" fill="#1030b0" opacity="1.00"/>
<rect x="2541.0" y="1269.0" width="1" height="2" fill="#0c28a8" opacity="1.00"/>
<rect x="2547.0" y="1269.0" width="2" height="2" fill="#0a1a9a" opacity="1.00"/>
<rect x="2535.0" y="1269.0" width="1.5" height="2" fill="#1090a8"/>
<rect x="2545.0" y="1269.0" width="1.5" height="2" fill="#c0d030"/>
<rect x="2573.0" y="1553.0" width="2" height="2" fill="#0870b0" opacity="1.00"/>
<rect x="2576.0" y="1553.0" width="3" height="2" fill="#1448b8" opacity="1.00"/>
<rect x="2583.0" y="1553.0" width="3" height="2" fill="#1448b8" opacity="1.00"/>
<rect x="2587.0" y="1553.0" width="2" height="2" fill="#0f7fb0" opacity="1.00"/>
<rect x="2590.0" y="1553.0" width="2" height="2" fill="#1448b8" opacity="1.00"/>
<rect x="2593.0" y="1553.0" width="1" height="2" fill="#1030b0" opacity="1.00"/>
<rect x="2595.0" y="1553.0" width="3" height="2" fill="#081890" opacity="1.00"/>
<rect x="2599.0" y="1553.0" width="1" height="2" fill="#0c28a8" opacity="1.00"/>
<rect x="2020.0" y="1587.0" width="2" height="2" fill="#1030b0"/>
<rect x="2020.0" y="1594.0" width="2" height="2" fill="#18a0a0"/>
<rect x="2020.0" y="1596.0" width="2" height="2" fill="#1090a8"/>
<rect x="2020.0" y="1600.0" width="2" height="2" fill="#1448b8"/>
<rect x="2020.0" y="1605.0" width="2" height="2" fill="#18a0a0"/>
<rect x="2020.0" y="1608.0" width="2" height="2" fill="#70b060"/>
<rect x="2020.0" y="1611.0" width="2" height="2" fill="#1090a8"/>
<rect x="2020.0" y="1614.0" width="2" height="2" fill="#0f7fb0"/>
<rect x="2020.0" y="1619.0" width="2" height="2" fill="#1030b0"/>
<rect x="2260.0" y="1584.0" width="2" height="2" fill="#0f7fb0"/>
<rect x="2260.0" y="1589.0" width="2" height="2" fill="#1030b0"/>
<rect x="2260.0" y="1596.0" width="2" height="2" fill="#1090a8"/>
<rect x="2260.0" y="1603.0" width="2" height="2" fill="#1030b0"/>
<rect x="2260.0" y="1615.0" width="5" height="2" fill="#1090a8"/>
<rect x="2260.0" y="1633.0" width="2" height="2" fill="#0f7fb0"/>
<rect x="2229.0" y="1581.0" width="2" height="2" fill="#0a1a9a" opacity="0.50"/>
<rect x="2232.0" y="1581.0" width="3" height="2" fill="#081890" opacity="0.50"/>
<rect x="2243.0" y="1581.0" width="1" height="2" fill="#0c28a8" opacity="0.50"/>
<rect x="2323.0" y="1598.0" width="2" height="2" fill="#1030b0" opacity="0.70"/>
<rect x="2327.0" y="1598.0" width="2" height="2" fill="#0a1a9a" opacity="0.70"/>
<rect x="2329.0" y="1598.0" width="2" height="2" fill="#1030b0" opacity="0.70"/>
<rect x="2331.0" y="1598.0" width="4" height="2" fill="#1448b8" opacity="0.70"/>
<rect x="2336.0" y="1598.0" width="4" height="2" fill="#0c28a8" opacity="1.00"/>
<rect x="2340.0" y="1598.0" width="4" height="2" fill="#1448b8" opacity="1.00"/>
<rect x="2349.0" y="1598.0" width="1" height="2" fill="#0c28a8" opacity="1.00"/>
<rect x="2351.0" y="1598.0" width="2" height="2" fill="#1030b0" opacity="1.00"/>
<rect x="2354.0" y="1598.0" width="3" height="2" fill="#1030b0" opacity="1.00"/>
<rect x="2376.0" y="1598.0" width="3" height="2" fill="#0c28a8" opacity="0.45"/>
<rect x="2385.0" y="1598.0" width="3" height="2" fill="#1030b0" opacity="0.45"/>
<rect x="2392.0" y="1598.0" width="2" height="2" fill="#0a1a9a" opacity="0.45"/>
<rect x="2402.0" y="1598.0" width="3" height="2" fill="#081890" opacity="0.45"/>
<rect x="2412.0" y="1598.0" width="1" height="2" fill="#1030b0" opacity="0.45"/>
<rect x="2413.0" y="1598.0" width="3" height="2" fill="#1448b8" opacity="0.45"/>
<rect x="2134.0" y="1612.0" width="2" height="2" fill="#0a1a9a" opacity="0.45"/>
<rect x="2141.0" y="1612.0" width="2" height="2" fill="#1448b8" opacity="0.45"/>
<rect x="2144.0" y="1612.0" width="3" height="2" fill="#1448b8" opacity="0.45"/>
<rect x="2151.0" y="1612.0" width="4" height="2" fill="#1030b0" opacity="0.45"/>
<rect x="2162.0" y="1612.0" width="2" height="2" fill="#1448b8" opacity="0.45"/>
<rect x="2204.0" y="1620.0" width="2" height="2" fill="#0a1a9a" opacity="0.50"/>
<rect x="2208.0" y="1620.0" width="2" height="2" fill="#1448b8" opacity="0.50"/>
<rect x="2223.0" y="1626.0" width="2" height="2" fill="#1448b8" opacity="0.60"/>
<rect x="2226.0" y="1626.0" width="2" height="2" fill="#0c28a8" opacity="0.60"/>
<rect x="2229.0" y="1626.0" width="1" height="2" fill="#1030b0" opacity="0.60"/>
<rect x="2232.0" y="1626.0" width="3" height="2" fill="#0a1a9a" opacity="1.00"/>
<rect x="2235.0" y="1626.0" width="2" height="2" fill="#0c28a8" opacity="1.00"/>
<rect x="2237.0" y="1626.0" width="2" height="2" fill="#0a1a9a" opacity="1.00"/>
<rect x="2239.0" y="1626.0" width="2" height="2" fill="#1030b0" opacity="1.00"/>
<rect x="2242.0" y="1626.0" width="3" height="2" fill="#18a0a0" opacity="1.00"/>
<rect x="2246.0" y="1626.0" width="1" height="2" fill="#0a1a9a" opacity="1.00"/>
<rect x="2248.0" y="1626.0" width="3" height="2" fill="#0c28a8" opacity="1.00"/>
<rect x="2251.0" y="1626.0" width="1" height="2" fill="#0c28a8" opacity="1.00"/>
<rect x="2264.0" y="1626.0" width="2" height="2" fill="#0c28a8" opacity="0.50"/>
<rect x="2267.0" y="1626.0" width="1" height="2" fill="#0a1a9a" opacity="0.50"/>
<rect x="2273.0" y="1626.0" width="3" height="2" fill="#1448b8" opacity="0.50"/>
<rect x="2377.0" y="1614.0" width="5" height="2" fill="#1030b0"/>
<rect x="2137.0" y="1641.0" width="4" height="2" fill="#0a1a9a" opacity="0.55"/>
<rect x="2143.0" y="1641.0" width="3" height="2" fill="#1448b8" opacity="0.55"/>
<rect x="2152.0" y="1641.0" width="2" height="2" fill="#081890" opacity="0.55"/>
<rect x="2161.0" y="1641.0" width="2" height="2" fill="#1030b0" opacity="0.55"/>
<rect x="2169.0" y="1641.0" width="4" height="2" fill="#1030b0" opacity="0.55"/>
<rect x="2177.0" y="1641.0" width="2" height="2" fill="#1448b8" opacity="0.55"/>
<rect x="2179.0" y="1641.0" width="2" height="2" fill="#0c28a8" opacity="0.55"/>
<rect x="2233.0" y="1643.0" width="3" height="2" fill="#081890" opacity="1.00"/>
<rect x="2237.0" y="1643.0" width="1" height="2" fill="#1448b8" opacity="1.00"/>
<rect x="2239.0" y="1643.0" width="4" height="2" fill="#1030b0" opacity="1.00"/>
<rect x="2244.0" y="1643.0" width="1" height="2" fill="#0c28a8" opacity="1.00"/>
<rect x="2245.0" y="1643.0" width="3" height="2" fill="#0c28a8" opacity="1.00"/>
<rect x="2248.0" y="1643.0" width="2" height="2" fill="#081890" opacity="1.00"/>
<rect x="2251.0" y="1643.0" width="2" height="2" fill="#0870b0" opacity="1.00"/>
<rect x="2350.0" y="1641.0" width="1" height="2" fill="#0c28a8" opacity="1.00"/>
<rect x="2352.0" y="1641.0" width="1" height="2" fill="#0a1a9a" opacity="1.00"/>
<rect x="2353.0" y="1641.0" width="2" height="2" fill="#0a1a9a" opacity="1.00"/>
<rect x="2355.0" y="1641.0" width="1" height="2" fill="#18a0a0" opacity="1.00"/>
<rect x="2357.0" y="1641.0" width="1" height="2" fill="#0870b0" opacity="1.00"/>
<rect x="2359.0" y="1641.0" width="1" height="2" fill="#0a1a9a" opacity="1.00"/>
<rect x="2361.0" y="1641.0" width="1" height="2" fill="#1448b8" opacity="1.00"/>
<rect x="2364.0" y="1641.0" width="1" height="2" fill="#0a1a9a" opacity="1.00"/>
<rect x="2366.0" y="1641.0" width="3" height="2" fill="#1030b0" opacity="1.00"/>
<rect x="2374.0" y="1641.0" width="3" height="2" fill="#1448b8" opacity="1.00"/>
<rect x="2383.0" y="1641.0" width="2" height="2" fill="#1030b0" opacity="1.00"/>
<rect x="2386.0" y="1641.0" width="1" height="2" fill="#0a1a9a" opacity="1.00"/>
<rect x="2388.0" y="1641.0" width="2" height="2" fill="#0a1a9a" opacity="1.00"/>
<rect x="2391.0" y="1641.0" width="2" height="2" fill="#1030b0" opacity="1.00"/>
<rect x="2557.0" y="1641.0" width="2" height="2" fill="#0a1a9a" opacity="0.80"/>
<rect x="2566.0" y="1641.0" width="4" height="2" fill="#1030b0" opacity="0.80"/>
<rect x="2570.0" y="1641.0" width="3" height="2" fill="#081890" opacity="0.80"/>
<rect x="2574.0" y="1641.0" width="3" height="2" fill="#0c28a8" opacity="0.80"/>
<rect x="2581.0" y="1641.0" width="1" height="2" fill="#0a1a9a" opacity="0.80"/>
<rect x="2587.0" y="1641.0" width="4" height="2" fill="#1448b8" opacity="0.80"/>
<rect x="2592.0" y="1641.0" width="1" height="2" fill="#0a1a9a" opacity="0.80"/>
<rect x="2019.0" y="1643.0" width="2" height="2" fill="#1090a8"/>
<rect x="2230.0" y="1788.0" width="1.5" height="2" fill="#c0c030"/>
</g>
</svg>
<svg id="axes" style="left:0;top:0" width="3100" height="3064" viewBox="0 0 3100 3064" shape-rendering="crispEdges">
<rect x="80" y="119" width="3020" height="1" fill="#fff"/>
<rect x="80" y="240" width="3020" height="1" fill="#fff"/>
<rect x="80" y="361" width="3020" height="1" fill="#fff"/>
<rect x="80" y="482" width="3020" height="1" fill="#fff"/>
<rect x="80" y="603" width="3020" height="1" fill="#fff"/>
<rect x="80" y="724" width="3020" height="1" fill="#fff"/>
<rect x="80" y="845" width="3020" height="1" fill="#fff"/>
<rect x="80" y="966" width="3020" height="1" fill="#fff"/>
<rect x="80" y="1087" width="3020" height="1" fill="#fff"/>
<rect x="80" y="1208" width="3020" height="1" fill="#fff"/>
<rect x="80" y="1329" width="3020" height="1" fill="#fff"/>
<rect x="80" y="1450" width="3020" height="1" fill="#fff"/>
<rect x="80" y="1571" width="3020" height="1" fill="#fff"/>
<rect x="80" y="1692" width="3020" height="1" fill="#fff"/>
<rect x="80" y="1813" width="3020" height="1" fill="#fff"/>
<rect x="80" y="1934" width="3020" height="1" fill="#fff"/>
<rect x="80" y="2055" width="3020" height="1" fill="#fff"/>
<rect x="80" y="2176" width="3020" height="1" fill="#fff"/>
<rect x="80" y="2297" width="3020" height="1" fill="#fff"/>
<rect x="80" y="2418" width="3020" height="1" fill="#fff"/>
<rect x="80" y="2539" width="3020" height="1" fill="#fff"/>
<rect x="80" y="2660" width="3020" height="1" fill="#fff"/>
<rect x="80" y="2781" width="3020" height="1" fill="#fff"/>
<rect x="80" y="2902" width="3020" height="1" fill="#fff"/>
<rect x="80" y="3023" width="3020" height="1" fill="#fff"/>
<rect x="100" y="90" width="1" height="29" fill="#aaa"/>
<rect x="199" y="90" width="2" height="29" fill="#aaa"/>
<rect x="299" y="90" width="2" height="29" fill="#aaa"/>
<rect x="399" y="90" width="2" height="29" fill="#aaa"/>
<rect x="499" y="90" width="2" height="29" fill="#aaa"/>
<rect x="599" y="90" width="2" height="29" fill="#aaa"/>
<rect x="699" y="90" width="2" height="29" fill="#aaa"/>
<rect x="799" y="90" width="2" height="29" fill="#aaa"/>
<rect x="899" y="90" width="2" height="29" fill="#aaa"/>
<rect x="999" y="90" width="2" height="29" fill="#aaa"/>
<rect x="1099" y="90" width="2" height="29" fill="#aaa"/>
<rect x="1199" y="90" width="2" height="29" fill="#aaa"/>
<rect x="1299" y="90" width="2" height="29" fill="#aaa"/>
<rect x="1399" y="90" width="2" height="29" fill="#aaa"/>
<rect x="1499" y="90" width="2" height="29" fill="#aaa"/>
<rect x="1599" y="90" width="2" height="29" fill="#aaa"/>
<rect x="1699" y="90" width="2" height="29" fill="#aaa"/>
<rect x="1799" y="90" width="2" height="29" fill="#aaa"/>
<rect x="1899" y="90" width="2" height="29" fill="#aaa"/>
<rect x="1999" y="90" width="2" height="29" fill="#aaa"/>
<rect x="2099" y="90" width="2" height="29" fill="#aaa"/>
<rect x="2999" y="90" width="2" height="29" fill="#aaa"/>
<rect x="2119" y="90" width="2" height="29" fill="#10a0a0"/>
<rect x="2139" y="90" width="2" height="29" fill="#10a0a0"/>
<rect x="2159" y="90" width="2" height="29" fill="#10a0a0"/>
<rect x="2179" y="90" width="2" height="29" fill="#10a0a0"/>
<rect x="2199" y="90" width="2" height="29" fill="#10a0a0"/>
<rect x="2219" y="90" width="2" height="29" fill="#10a0a0"/>
<rect x="2239" y="90" width="2" height="29" fill="#10a0a0"/>
<rect x="2259" y="90" width="2" height="29" fill="#10a0a0"/>
<rect x="2279" y="90" width="2" height="29" fill="#10a0a0"/>
<rect x="2299" y="90" width="2" height="29" fill="#10a0a0"/>
<rect x="2319" y="90" width="2" height="29" fill="#10a0a0"/>
<rect x="2339" y="90" width="2" height="29" fill="#10a0a0"/>
<rect x="2359" y="90" width="2" height="29" fill="#10a0a0"/>
<rect x="2379" y="90" width="2" height="29" fill="#10a0a0"/>
<rect x="2399" y="90" width="2" height="29" fill="#10a0a0"/>
<rect x="2419" y="90" width="2" height="29" fill="#10a0a0"/>
<rect x="2439" y="90" width="2" height="29" fill="#10a0a0"/>
<rect x="2459" y="90" width="2" height="29" fill="#10a0a0"/>
<rect x="2479" y="90" width="2" height="29" fill="#10a0a0"/>
<rect x="2499" y="90" width="2" height="29" fill="#10a0a0"/>
<rect x="2519" y="90" width="2" height="29" fill="#10a0a0"/>
<rect x="2539" y="90" width="2" height="29" fill="#10a0a0"/>
<rect x="2559" y="90" width="2" height="29" fill="#10a0a0"/>
<rect x="2579" y="90" width="2" height="29" fill="#10a0a0"/>
<rect x="2599" y="90" width="2" height="29" fill="#10a0a0"/>
<rect x="2619" y="90" width="2" height="29" fill="#10a0a0"/>
<rect x="2639" y="90" width="2" height="29" fill="#10a0a0"/>
<rect x="2659" y="90" width="2" height="29" fill="#10a0a0"/>
<rect x="2679" y="90" width="2" height="29" fill="#10a0a0"/>
<rect x="2699" y="90" width="2" height="29" fill="#10a0a0"/>
<rect x="2719" y="90" width="2" height="29" fill="#10a0a0"/>
<rect x="2739" y="90" width="2" height="29" fill="#10a0a0"/>
<rect x="2759" y="90" width="2" height="29" fill="#10a0a0"/>
<rect x="2779" y="90" width="2" height="29" fill="#10a0a0"/>
<rect x="2799" y="90" width="2" height="29" fill="#10a0a0"/>
<rect x="2819" y="90" width="2" height="29" fill="#10a0a0"/>
<rect x="2839" y="90" width="2" height="29" fill="#10a0a0"/>
<rect x="2859" y="90" width="2" height="29" fill="#10a0a0"/>
<rect x="2879" y="90" width="2" height="29" fill="#10a0a0"/>
<rect x="2899" y="90" width="2" height="29" fill="#10a0a0"/>
<rect x="2219" y="60" width="2" height="30" fill="#a0a010"/>
<rect x="2269" y="60" width="2" height="30" fill="#a0a010"/>
<rect x="2319" y="60" width="2" height="30" fill="#a0a010"/>
<rect x="2369" y="60" width="2" height="30" fill="#a0a010"/>
<rect x="2419" y="60" width="2" height="30" fill="#a0a010"/>
<rect x="2469" y="60" width="2" height="30" fill="#a0a010"/>
<rect x="2519" y="60" width="2" height="30" fill="#a0a010"/>
<rect x="2569" y="60" width="2" height="30" fill="#a0a010"/>
<rect x="2619" y="60" width="2" height="30" fill="#a0a010"/>
<rect x="2669" y="60" width="2" height="30" fill="#a0a010"/>
<rect x="2719" y="60" width="2" height="30" fill="#a0a010"/>
<rect x="2769" y="60" width="2" height="30" fill="#a0a010"/>
<rect x="2819" y="60" width="2" height="30" fill="#a0a010"/>
<rect x="2939" y="60" width="2" height="30" fill="#a0a010"/>
</svg>
<div id="bar"></div>
<div class="abs" style="left:753px;top:16px;font-size:20px;line-height:24px;color:#fff">-75 dBm</div>
<div class="abs" style="left:2390px;top:16px;font-size:20px;line-height:24px;color:#fff">-55 dBm</div>
<div class="fl" style="left:600px">2.25</div>
<div class="fl" style="left:1100px">2.3</div>
<div class="fl" style="left:1600px">2.35</div>
<div class="fl" style="left:2100px">2.4</div>
<div class="fl" style="left:3000px">2.49</div>
<div class="tl" style="top:110px">24:00</div>
<div class="tl" style="top:231px">23:00</div>
<div class="tl" style="top:352px">22:00</div>
<div class="tl" style="top:473px">21:00</div>
<div class="tl" style="top:594px">20:00</div>
<div class="tl" style="top:715px;left:21.5px">19:00</div>
<div class="tl" style="top:836px;left:21.5px">18:00</div>
<div class="tl" style="top:957px;left:21.5px">17:00</div>
<div class="tl" style="top:1078px;left:21.5px">16:00</div>
<div class="tl" style="top:1199px;left:21.5px">15:00</div>
<div class="tl" style="top:1320px;left:21.5px">14:00</div>
<div class="tl" style="top:1441px;left:21.5px">13:00</div>
<div class="tl" style="top:1562px;left:21.5px">12:00</div>
<div class="tl" style="top:1683px;left:21.5px">11:00</div>
<div class="tl" style="top:1804px;left:21.5px">10:00</div>
<div class="tl" style="top:1925px">9:00</div>
<div class="tl" style="top:2046px">8:00</div>
<div class="tl" style="top:2167px">7:00</div>
<div class="tl" style="top:2288px">6:00</div>
<div class="tl" style="top:2409px">5:00</div>
<div class="tl" style="top:2530px">4:00</div>
<div class="tl" style="top:2651px">3:00</div>
<div class="tl" style="top:2772px">2:00</div>
<div class="tl" style="top:2893px;left:21.5px">1:00</div>
<div class="tl" style="top:3014px">0:00</div>
<div class="bt" style="left:100px;top:3033px">https://doi.org/10.5880/GFZ.1.2.2024.003</div>
<div class="bt" style="left:1601px;top:3034px;transform:translateX(-50%)">1_2200_2500_10000_40_0</div>
<div class="bt" style="right:10px;top:3037px;letter-spacing:0.62px">2025-09-29</div>
<svg id="logo" style="left:0;top:0" width="320" height="88" viewBox="0 0 320 88">
<defs><clipPath id="lc"><circle cx="44" cy="43.95" r="26"/></clipPath></defs>
<circle cx="44" cy="43.95" r="24.4" fill="#fff"/>
<g clip-path="url(#lc)"><g transform="translate(14,14) scale(0.031416)" fill="#212121">
<polygon points="-500,1560 1560,-500 1810,-500 440,860 370,820 -500,1670"/>
<polygon points="-500,1945 1945,-500 2195,-500 930,762 850,735 -500,2055"/>
<polygon points="-500,2330 2330,-500 2580,-500 1090,992 1010,960 -500,2440"/>
<polygon points="-500,2720 2720,-500 2970,-500 1605,862 1530,830 -500,2830"/>
<polygon points="-500,3110 3110,-500 3240,-500 -500,3240"/>
</g></g>
<g fill="#fff">
<path d="M114.3,28 H136.6 V34 H121.8 V42.8 H135 V48.5 H121.8 V42.8 H114.3 Z"/>
<rect x="114.3" y="48.5" width="7.5" height="12.6"/>
<path d="M139.7,28 H165.3 V33.7 L149.5,55.2 H165.3 V61.1 H139.7 V55.2 L155.2,33.7 H139.7 Z"/>
<path fill-rule="evenodd" d="M80.55,44.6 a15.15,17.35 0 1,0 30.3,0 a15.15,17.35 0 1,0 -30.3,0 Z M88.2,44.35 a7.9,10.35 0 1,0 15.8,0 a7.9,10.35 0 1,0 -15.8,0 Z"/>
<path fill="#212121" d="M102.6,42.8 H112.5 V38.3 L102.9,39.5 Z"/>
<rect x="96.7" y="42.8" width="14.15" height="5.4"/>
<rect x="104" y="45" width="6.85" height="6"/>
</g>
</svg>
<div class="abs" style="left:170.5px;top:25.4px;font-size:16px;letter-spacing:0.44px;line-height:20px;color:#fff">Helmholtz Centre<br>for Geosciences</div>
</body></html>
